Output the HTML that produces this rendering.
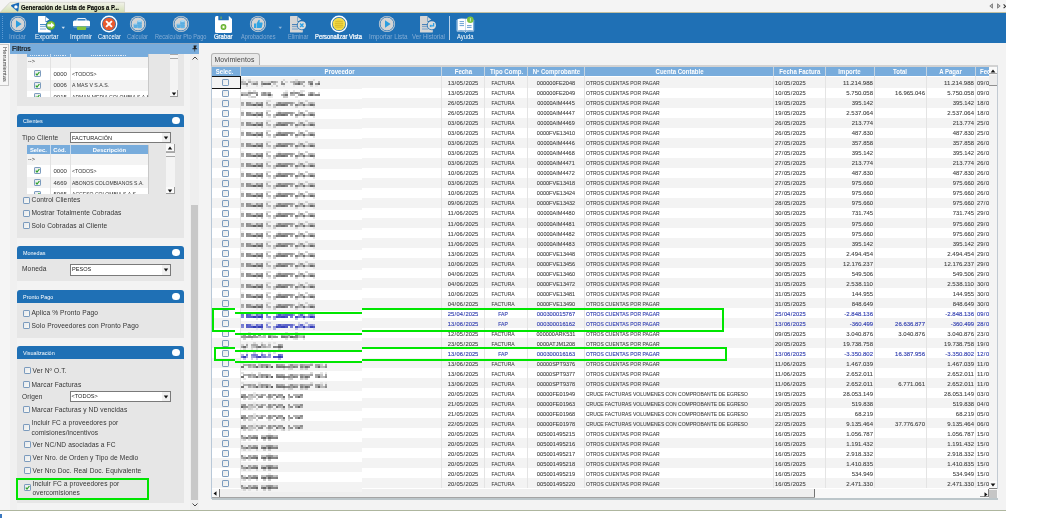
<!DOCTYPE html><html><head><meta charset="utf-8"><style>
*{margin:0;padding:0;box-sizing:border-box}
html,body{width:1038px;height:518px;overflow:hidden;background:#fff;font-family:"Liberation Sans",sans-serif;-webkit-font-smoothing:antialiased}
.ab{position:absolute}
.t{position:absolute;white-space:nowrap;line-height:1}
</style></head><body>
<div class="ab" style="left:0;top:0;width:1006px;height:511px;background:#f3f3f3;overflow:hidden;will-change:transform">

<div class="ab" style="left:0;top:0;width:1006px;height:12px;background:#f4f4f4"></div>
<svg class="ab" style="left:0;top:0" width="130" height="13"><defs><linearGradient id="tg" x1="0" y1="0" x2="0" y2="1"><stop offset="0" stop-color="#f2f2ea"/><stop offset="1" stop-color="#d3e0b4"/></linearGradient></defs><path d="M0 12.5 L10 2.3 L124.5 2.3 L124.5 12.5 Z" fill="url(#tg)" stroke="#c8c8c0" stroke-width="0.6"/><path d="M11.2 6.2 Q10.6 5.2 11.8 4.8 L18.2 2.8 Q19.4 2.5 19.2 3.8 L18.4 10.6 Q18.2 12 17.2 11.2 Z" fill="#1a6ab8"/><path d="M11.2 6.2 L14 8.6 L17.2 11.2 Z" fill="#0e4f94" opacity="0.6"/><circle cx="15.9" cy="6.9" r="1.7" fill="#fff"/></svg>
<div class="t" style="left:21px;top:4px;font-size:7px;font-weight:bold;color:#000;-webkit-text-stroke:0.15px #000;transform:scaleX(0.835);transform-origin:0 0">Generación de Lista de Pagos a P...</div>
<svg class="ab" style="left:988px;top:2px" width="18" height="8"><path d="M4.5 1.8 L1.8 4 L4.5 6.2 Z" fill="#bbb" stroke="#666" stroke-width="0.7"/><path d="M9.5 1.8 L12.2 4 L9.5 6.2 Z" fill="#bbb" stroke="#666" stroke-width="0.7"/><path d="M15.6 2.4 L17.6 4.3 L15.6 6.2" fill="none" stroke="#333" stroke-width="1.1"/></svg>
<div class="ab" style="left:0;top:12px;width:1006px;height:1px;background:#c2c0a2"></div>
<div class="ab" style="left:0;top:13px;width:1006px;height:29.5px;background:#1f70b5"></div>
<div class="ab" style="left:1.6px;top:15.50px;width:1.2px;height:1px;background:#5d9bd3"></div>
<div class="ab" style="left:1.6px;top:17.55px;width:1.2px;height:1px;background:#5d9bd3"></div>
<div class="ab" style="left:1.6px;top:19.60px;width:1.2px;height:1px;background:#5d9bd3"></div>
<div class="ab" style="left:1.6px;top:21.65px;width:1.2px;height:1px;background:#5d9bd3"></div>
<div class="ab" style="left:1.6px;top:23.70px;width:1.2px;height:1px;background:#5d9bd3"></div>
<div class="ab" style="left:1.6px;top:25.75px;width:1.2px;height:1px;background:#5d9bd3"></div>
<div class="ab" style="left:1.6px;top:27.80px;width:1.2px;height:1px;background:#5d9bd3"></div>
<div class="ab" style="left:1.6px;top:29.85px;width:1.2px;height:1px;background:#5d9bd3"></div>
<div class="ab" style="left:1.6px;top:31.90px;width:1.2px;height:1px;background:#5d9bd3"></div>
<div class="ab" style="left:1.6px;top:33.95px;width:1.2px;height:1px;background:#5d9bd3"></div>
<div class="ab" style="left:1.6px;top:36.00px;width:1.2px;height:1px;background:#5d9bd3"></div>
<div class="ab" style="left:1.6px;top:38.05px;width:1.2px;height:1px;background:#5d9bd3"></div>
<svg class="ab" style="left:9px;top:15.3px" width="18" height="18"><circle cx="9" cy="9" r="8.1" fill="#d6d6d6"/><circle cx="9" cy="9" r="6.9" fill="none" stroke="#1f70b5" stroke-width="0.8"/><circle cx="9" cy="9" r="6.1" fill="#d4d4d4"/><path d="M7 5.2 L12.6 9 L7 12.8 Z" fill="#2a9ee0"/></svg>
<div class="t" style="left:9px;top:34.4px;font-size:6.4px;font-weight:normal;color:#84acd4;transform:scaleX(0.996);transform-origin:0 0">Iniciar</div>
<svg class="ab" style="left:37px;top:14.8px" width="22" height="19"><path d="M1.6 1 H8.5 V7 H13.8 V16.9 Q13.8 17.5 13.2 17.5 H1.6 Q1 17.5 1 16.9 V1.6 Q1 1 1.6 1 Z" fill="#fff"/><path d="M8.9 2 L12.3 4.6 L8.9 6.4 Z" fill="#fff"/><rect x="3" y="9.2" width="6" height="0.9" fill="#1f70b5"/><rect x="3" y="11.2" width="6" height="0.9" fill="#6a9fd2"/><rect x="3" y="13.2" width="6" height="1.6" fill="#a8c8e8"/><circle cx="13.8" cy="10.3" r="5.1" fill="#1f70b5"/><circle cx="13.8" cy="10.3" r="4.4" fill="#5fae2e"/><circle cx="13.8" cy="10.1" r="3.5" fill="#86c440"/><path d="M10.4 9.2 H14 V7.6 L17.4 10.3 L14 13 V11.4 H10.4 Z" fill="#fff"/></svg>
<svg class="ab" style="left:61px;top:26px" width="5" height="4"><path d="M0.5 0.8 L4 0.8 L2.25 3 Z" fill="#cfe0f0"/></svg>
<div class="t" style="left:34.5px;top:34.4px;font-size:6.4px;font-weight:normal;color:#fff;transform:scaleX(0.972);transform-origin:0 0">Exportar</div>
<svg class="ab" style="left:72px;top:16px" width="20" height="16"><rect x="5" y="2.6" width="9" height="3" rx="1" fill="none" stroke="#fff" stroke-width="1"/><rect x="1" y="4.6" width="17" height="7" rx="1.5" fill="#fff"/><rect x="0.6" y="10.3" width="17.8" height="1.2" fill="#1f70b5"/><rect x="4.9" y="10.4" width="9.2" height="3.6" rx="0.9" fill="#84c341"/></svg>
<div class="t" style="left:70px;top:34.4px;font-size:6.4px;font-weight:normal;color:#fff;transform:scaleX(0.952);transform-origin:0 0">Imprimir</div>
<svg class="ab" style="left:100.3px;top:15.3px" width="18" height="18"><circle cx="9" cy="9" r="8.4" fill="#fff"/><circle cx="9" cy="9" r="7" fill="#1f70b5"/><circle cx="9" cy="9" r="6.3" fill="#e95a2e"/><path d="M6.1 6.1 L11.9 11.9 M11.9 6.1 L6.1 11.9" stroke="#fff" stroke-width="1.9"/></svg>
<div class="t" style="left:98px;top:34.4px;font-size:6.4px;font-weight:normal;color:#fff;transform:scaleX(0.898);transform-origin:0 0">Cancelar</div>
<svg class="ab" style="left:129.2px;top:15.3px" width="18" height="18"><circle cx="9" cy="9" r="8.1" fill="#d6d6d6"/><circle cx="9" cy="9" r="6.9" fill="none" stroke="#1f70b5" stroke-width="0.8"/><circle cx="9" cy="9" r="6.1" fill="#d4d4d4"/><path d="M4.6 9 v3.6 q1.9 1 3.8 0 v-3.6 z" fill="#5aaee2"/><ellipse cx="6.5" cy="9" rx="1.9" ry="0.8" fill="#9fd0f0"/><path d="M8.2 6 v6.8 q2.3 1.1 4.6 0 v-6.8 z" fill="#62b4e6"/><ellipse cx="10.5" cy="6" rx="2.3" ry="0.9" fill="#a8d6f2"/><path d="M8.2 8.4 q2.3 1 4.6 0 M8.2 10.6 q2.3 1 4.6 0" stroke="#4a9ad0" stroke-width="0.4" fill="none"/></svg>
<div class="t" style="left:127px;top:34.4px;font-size:6.4px;font-weight:normal;color:#84acd4;transform:scaleX(0.895);transform-origin:0 0">Calcular</div>
<svg class="ab" style="left:171.7px;top:15.3px" width="18" height="18"><circle cx="9" cy="9" r="8.1" fill="#d6d6d6"/><circle cx="9" cy="9" r="6.9" fill="none" stroke="#1f70b5" stroke-width="0.8"/><circle cx="9" cy="9" r="6.1" fill="#d4d4d4"/><path d="M4.6 9 v3.6 q1.9 1 3.8 0 v-3.6 z" fill="#5aaee2"/><ellipse cx="6.5" cy="9" rx="1.9" ry="0.8" fill="#9fd0f0"/><path d="M8.2 6 v6.8 q2.3 1.1 4.6 0 v-6.8 z" fill="#62b4e6"/><ellipse cx="10.5" cy="6" rx="2.3" ry="0.9" fill="#a8d6f2"/><path d="M8.2 8.4 q2.3 1 4.6 0 M8.2 10.6 q2.3 1 4.6 0" stroke="#4a9ad0" stroke-width="0.4" fill="none"/></svg>
<div class="t" style="left:154.5px;top:34.4px;font-size:6.4px;font-weight:normal;color:#84acd4;transform:scaleX(0.883);transform-origin:0 0">Recalcular Pto Pago</div>
<svg class="ab" style="left:214px;top:14.5px" width="19" height="19"><path d="M2.5 1 H15 L18 4 V16.5 Q18 18 16.5 18 H2.5 Q1 18 1 16.5 V2.5 Q1 1 2.5 1 Z" fill="#fff"/><rect x="4.3" y="0.5" width="10.5" height="4.8" rx="0.6" fill="#1f70b5"/><rect x="6.6" y="1.5" width="0.9" height="2.6" fill="#8cc63f"/><circle cx="9.5" cy="12" r="2.9" fill="#5fae36"/><circle cx="9.5" cy="12" r="1.9" fill="#9ad05a"/><circle cx="9.5" cy="12" r="1" fill="#fff"/></svg>
<div class="t" style="left:213.5px;top:34.4px;font-size:6.4px;color:#fff;-webkit-text-stroke:0.22px #fff;transform:scaleX(0.929);transform-origin:0 0">Grabar</div>
<svg class="ab" style="left:248.5px;top:15.3px" width="18" height="18"><circle cx="9" cy="9" r="8.1" fill="#d6d6d6"/><circle cx="9" cy="9" r="6.9" fill="none" stroke="#1f70b5" stroke-width="0.8"/><circle cx="9" cy="9" r="6.1" fill="#d4d4d4"/><path d="M5 8.5 h2 v4.5 h-2 z M7.6 8.5 L9.6 5 Q10.6 4.2 10.8 5.6 L10.4 7.6 h2.4 q1 0 0.8 1 l-0.8 3.6 q-0.2 0.8 -1 0.8 h-4.2 z" fill="#2fa4e4"/></svg>
<div class="t" style="left:240.5px;top:34.4px;font-size:6.4px;font-weight:normal;color:#84acd4;transform:scaleX(0.882);transform-origin:0 0">Aprobaciones</div>
<svg class="ab" style="left:278px;top:26px" width="5" height="4"><path d="M0.5 0.8 L4 0.8 L2.25 3 Z" fill="#8db4d8"/></svg>
<svg class="ab" style="left:289px;top:14.8px" width="22" height="19"><path d="M1.6 1 H8.5 V7 H13.8 V16.9 Q13.8 17.5 13.2 17.5 H1.6 Q1 17.5 1 16.9 V1.6 Q1 1 1.6 1 Z" fill="#d6d6d6"/><path d="M8.9 2 L12.3 4.6 L8.9 6.4 Z" fill="#d6d6d6"/><rect x="3" y="9.2" width="6" height="0.9" fill="#2a6eb0"/><rect x="3" y="11.2" width="6" height="0.9" fill="#6a98c8"/><rect x="3" y="13.2" width="6" height="1.6" fill="#9ab6d2"/><circle cx="12.8" cy="10.3" r="4.9" fill="#1f70b5"/><circle cx="12.8" cy="10.3" r="4.1" fill="#dcdcdc"/><path d="M11.1 8.6 L14.5 12 M14.5 8.6 L11.1 12" stroke="#2aa0e6" stroke-width="1.4"/></svg>
<div class="t" style="left:287.5px;top:34.4px;font-size:6.4px;font-weight:normal;color:#84acd4;transform:scaleX(0.887);transform-origin:0 0">Eliminar</div>
<svg class="ab" style="left:330px;top:15.3px" width="18" height="18"><circle cx="9" cy="9" r="8.4" fill="#fff"/><circle cx="9" cy="9" r="7" fill="#1f70b5"/><circle cx="9" cy="9" r="6.3" fill="#f4dc4a"/><path d="M6 5.5 v7 M8 4.8 v8.4 M10 4.8 v8.4 M12 5.5 v7 M5.5 6.5 h7 M4.8 8.5 h8.4 M4.8 10.5 h8.4 M5.5 12.2 h7" stroke="#c9a91e" stroke-width="0.45"/></svg>
<div class="t" style="left:315px;top:34.4px;font-size:6.4px;color:#fff;-webkit-text-stroke:0.22px #fff;transform:scaleX(0.913);transform-origin:0 0">Personalizar Vista</div>
<svg class="ab" style="left:378.3px;top:15.3px" width="18" height="18"><circle cx="9" cy="9" r="8.1" fill="#d6d6d6"/><circle cx="9" cy="9" r="6.9" fill="none" stroke="#1f70b5" stroke-width="0.8"/><circle cx="9" cy="9" r="6.1" fill="#d4d4d4"/><path d="M7 5.2 L12.6 9 L7 12.8 Z" fill="#2a9ee0"/></svg>
<div class="t" style="left:368.5px;top:34.4px;font-size:6.4px;font-weight:normal;color:#84acd4;transform:scaleX(0.984);transform-origin:0 0">Importar Lista</div>
<svg class="ab" style="left:419px;top:14.8px" width="22" height="19"><path d="M1.6 1 H8.5 V7 H13.8 V16.9 Q13.8 17.5 13.2 17.5 H1.6 Q1 17.5 1 16.9 V1.6 Q1 1 1.6 1 Z" fill="#d6d6d6"/><path d="M8.9 2 L12.3 4.6 L8.9 6.4 Z" fill="#d6d6d6"/><rect x="3" y="9.2" width="6" height="0.9" fill="#2a6eb0"/><rect x="3" y="11.2" width="6" height="0.9" fill="#6a98c8"/><rect x="3" y="13.2" width="6" height="1.6" fill="#9ab6d2"/><circle cx="12.8" cy="10.3" r="4.9" fill="#1f70b5"/><circle cx="12.8" cy="10.3" r="4.1" fill="#dcdcdc"/><path d="M14.6 8 V10.9 H11.2" fill="none" stroke="#2aa0e6" stroke-width="1.3"/><path d="M12.2 9.3 L10.4 10.9 L12.2 12.5 Z" fill="#2aa0e6"/></svg>
<div class="t" style="left:412px;top:34.4px;font-size:6.4px;font-weight:normal;color:#84acd4;transform:scaleX(0.957);transform-origin:0 0">Ver Historial</div>
<div class="ab" style="left:449px;top:16px;width:1px;height:24px;background:#b8d2ea"></div>
<svg class="ab" style="left:456px;top:15.5px" width="20" height="18"><path d="M1.5 3.2 Q4.5 1.8 9.5 2.8 V14.6 Q4.5 13.6 1.5 14.6 Z" fill="#fff"/><path d="M9.5 2.8 Q14 1.8 17.2 3.2 V14.6 Q14 13.6 9.5 14.6 Z" fill="#fff"/><path d="M0.8 14.6 H8.4 L9.5 15.9 L10.6 14.6 H17.8 V15.6 H10.9 L9.5 16.9 L8.1 15.6 H0.8 Z" fill="#dbe8f5"/><path d="M0.8 4 V14.6 M17.8 4 V14.6" stroke="#c8dcf0" stroke-width="0.6"/><path d="M3.6 5.6 h4.4 M3.6 7.6 h4.4 M3.6 9.6 h4.4 M11 9.6 h4.6 M11 11.4 h4.6" stroke="#2a78c0" stroke-width="0.7"/><circle cx="14.3" cy="3.8" r="3.3" fill="#7cc242"/><rect x="13.9" y="2.1" width="0.8" height="3.4" fill="#e6f5d8"/></svg>
<div class="t" style="left:456.5px;top:34.4px;font-size:6.4px;font-weight:normal;color:#fff;transform:scaleX(0.915);transform-origin:0 0">Ayuda</div>
<div class="ab" style="left:0;top:43.5px;width:9px;height:42px;background:#f7f7f7;border:1px solid #c8c8c8;border-left:none"></div>
<div class="t" style="left:6.6px;top:47.3px;transform-origin:0 0;transform:rotate(90deg);font-size:5.9px;letter-spacing:-0.05px;color:#3a3a3a">Herramientas</div>
<div class="ab" style="left:10px;top:42.5px;width:188.5px;height:11px;background:#78acdc;border-top:0.8px solid #8fa9c4"></div>
<div class="t" style="left:12px;top:45.6px;font-size:6.9px;color:#111;-webkit-text-stroke:0.2px #111">Filtros</div>
<svg class="ab" style="left:192px;top:45px" width="6" height="7"><path d="M1.6 0.6 h3 v0.9 h-0.8 v1.8 h1.3 v0.9 h-2 v2.4 h-0.6 v-2.4 h-2 v-0.9 h1.3 v-1.8 h-0.2 z" fill="#1a1a1a"/></svg>
<svg width="0" height="0" style="position:absolute"><defs><linearGradient id="cg" x1="0" y1="0" x2="1" y2="1"><stop offset="0" stop-color="#e4e8ee"/><stop offset="1" stop-color="#fbfaf4"/></linearGradient></defs></svg>
<div class="ab" style="left:10px;top:53.5px;width:189px;height:457px;background:#f3f3f3"></div>
<div class="ab" style="left:10px;top:53.5px;width:6.5px;height:457px;background:#f0f0f0"></div>
<div class="ab" style="left:0;top:86px;width:10px;height:424px;background:#f5f5f5"></div>
<div class="ab" style="left:189.5px;top:53.5px;width:9px;height:457px;background:#eeeeee"></div>
<div class="ab" style="left:190.5px;top:205px;width:7.5px;height:295px;background:#c8c8c8"></div>
<svg class="ab" style="left:191px;top:55px" width="8" height="6"><path d="M1.5 4.5 L4 2 L6.5 4.5" fill="none" stroke="#333" stroke-width="0.9"/></svg>
<svg class="ab" style="left:191px;top:502px" width="8" height="6"><path d="M1.5 1.5 L4 4 L6.5 1.5" fill="none" stroke="#333" stroke-width="0.9"/></svg>
<div class="ab" style="left:16.5px;top:53.5px;width:167px;height:52.5px;background:#e6e6e6;"></div>
<div class="ab" style="left:27px;top:53.5px;width:122px;height:43.5px;background:#fff;"></div>
<div class="ab" style="left:27px;top:53.5px;width:122px;height:3px;background:#78acdc;"></div>
<div class="ab" style="left:49.8px;top:53.5px;width:0.8px;height:3.5px;background:#c8dcf0;"></div>
<div class="ab" style="left:70px;top:53.5px;width:0.8px;height:3.5px;background:#c8dcf0;"></div>
<div class="ab" style="left:30px;top:54.6px;width:1.2px;height:1.1px;background:#dfeaf6;"></div>
<div class="ab" style="left:32.1px;top:54.6px;width:1.2px;height:1.1px;background:#dfeaf6;"></div>
<div class="ab" style="left:34.2px;top:54.6px;width:1.2px;height:1.1px;background:#dfeaf6;"></div>
<div class="ab" style="left:36.300000000000004px;top:54.6px;width:1.2px;height:1.1px;background:#dfeaf6;"></div>
<div class="ab" style="left:38.400000000000006px;top:54.6px;width:1.2px;height:1.1px;background:#dfeaf6;"></div>
<div class="ab" style="left:40.50000000000001px;top:54.6px;width:1.2px;height:1.1px;background:#dfeaf6;"></div>
<div class="ab" style="left:42.60000000000001px;top:54.6px;width:1.2px;height:1.1px;background:#dfeaf6;"></div>
<div class="ab" style="left:44.70000000000001px;top:54.6px;width:1.2px;height:1.1px;background:#dfeaf6;"></div>
<div class="ab" style="left:46.80000000000001px;top:54.6px;width:1.2px;height:1.1px;background:#dfeaf6;"></div>
<div class="ab" style="left:54px;top:54.6px;width:1.2px;height:1.1px;background:#dfeaf6;"></div>
<div class="ab" style="left:56.1px;top:54.6px;width:1.2px;height:1.1px;background:#dfeaf6;"></div>
<div class="ab" style="left:58.2px;top:54.6px;width:1.2px;height:1.1px;background:#dfeaf6;"></div>
<div class="ab" style="left:60.300000000000004px;top:54.6px;width:1.2px;height:1.1px;background:#dfeaf6;"></div>
<div class="ab" style="left:62.400000000000006px;top:54.6px;width:1.2px;height:1.1px;background:#dfeaf6;"></div>
<div class="ab" style="left:64.5px;top:54.6px;width:1.2px;height:1.1px;background:#dfeaf6;"></div>
<div class="ab" style="left:91px;top:54.6px;width:1.2px;height:1.1px;background:#dfeaf6;"></div>
<div class="ab" style="left:93.1px;top:54.6px;width:1.2px;height:1.1px;background:#dfeaf6;"></div>
<div class="ab" style="left:95.19999999999999px;top:54.6px;width:1.2px;height:1.1px;background:#dfeaf6;"></div>
<div class="ab" style="left:97.29999999999998px;top:54.6px;width:1.2px;height:1.1px;background:#dfeaf6;"></div>
<div class="ab" style="left:99.39999999999998px;top:54.6px;width:1.2px;height:1.1px;background:#dfeaf6;"></div>
<div class="ab" style="left:101.49999999999997px;top:54.6px;width:1.2px;height:1.1px;background:#dfeaf6;"></div>
<div class="ab" style="left:103.59999999999997px;top:54.6px;width:1.2px;height:1.1px;background:#dfeaf6;"></div>
<div class="ab" style="left:105.69999999999996px;top:54.6px;width:1.2px;height:1.1px;background:#dfeaf6;"></div>
<div class="ab" style="left:107.79999999999995px;top:54.6px;width:1.2px;height:1.1px;background:#dfeaf6;"></div>
<div class="ab" style="left:109.89999999999995px;top:54.6px;width:1.2px;height:1.1px;background:#dfeaf6;"></div>
<div class="ab" style="left:111.99999999999994px;top:54.6px;width:1.2px;height:1.1px;background:#dfeaf6;"></div>
<div class="ab" style="left:114.09999999999994px;top:54.6px;width:1.2px;height:1.1px;background:#dfeaf6;"></div>
<div class="ab" style="left:116.19999999999993px;top:54.6px;width:1.2px;height:1.1px;background:#dfeaf6;"></div>
<div class="ab" style="left:118.29999999999993px;top:54.6px;width:1.2px;height:1.1px;background:#dfeaf6;"></div>
<div class="ab" style="left:120.39999999999992px;top:54.6px;width:1.2px;height:1.1px;background:#dfeaf6;"></div>
<div class="ab" style="left:122.49999999999991px;top:54.6px;width:1.2px;height:1.1px;background:#dfeaf6;"></div>
<div class="ab" style="left:124.59999999999991px;top:54.6px;width:1.2px;height:1.1px;background:#dfeaf6;"></div>
<div class="ab" style="left:27px;top:56.5px;width:121px;height:11.5px;background:#f3f3f3;"></div>
<div class="ab" style="left:27px;top:68px;width:121px;height:12px;background:#fff;"></div>
<div class="ab" style="left:27px;top:80px;width:121px;height:11px;background:#f3f3f3;"></div>
<div class="ab" style="left:27px;top:91px;width:121px;height:6px;background:#fff;"></div>
<div class="ab" style="left:49.8px;top:56.5px;width:0.6px;height:40.5px;background:#e2e2e2;"></div>
<div class="ab" style="left:70px;top:56.5px;width:0.6px;height:40.5px;background:#e2e2e2;"></div>
<div class="ab" style="left:148px;top:53.5px;width:1px;height:43.5px;background:#c8c8c8;"></div>
<div class="ab" style="left:27px;top:53.5px;width:121px;height:43.5px;overflow:hidden">
<div class="t" style="left:1px;top:5.6px;font-size:5.6px;color:#333">--&gt;</div>
</div>
<svg class="ab" style="left:34.3px;top:70px" width="7" height="7"><rect x="0.5" y="0.5" width="6" height="6" rx="0.6" fill="url(#cg)" stroke="#7496bb" stroke-width="0.95"/><path d="M1.8 3.6 L3 5 L5.4 2" fill="none" stroke="#2aa02a" stroke-width="1.2"/></svg>
<div class="t" style="left:53.5px;top:70.6px;font-size:6px;color:#333;transform:scaleX(1.000);transform-origin:0 0">0000</div>
<div class="t" style="left:72px;top:70.6px;font-size:6px;color:#333;transform:scaleX(0.872);transform-origin:0 0">&lt;TODOS&gt;</div>
<svg class="ab" style="left:34.3px;top:81.5px" width="7" height="7"><rect x="0.5" y="0.5" width="6" height="6" rx="0.6" fill="url(#cg)" stroke="#7496bb" stroke-width="0.95"/><path d="M1.8 3.6 L3 5 L5.4 2" fill="none" stroke="#2aa02a" stroke-width="1.2"/></svg>
<div class="t" style="left:53.5px;top:82.1px;font-size:6px;color:#333;transform:scaleX(1.000);transform-origin:0 0">0006</div>
<div class="t" style="left:72px;top:82.1px;font-size:6px;color:#333;transform:scaleX(0.869);transform-origin:0 0">A MAS V S.A.S.</div>
<div class="ab" style="left:27px;top:91px;width:121px;height:6px;overflow:hidden">
<svg class="ab" style="left:7.3px;top:2.2px" width="7" height="7"><rect x="0.5" y="0.5" width="6" height="6" rx="0.6" fill="url(#cg)" stroke="#7496bb" stroke-width="0.95"/><path d="M1.8 3.6 L3 5 L5.4 2" fill="none" stroke="#2aa02a" stroke-width="1.2"/></svg>
<div class="t" style="left:26.5px;top:3.0px;font-size:6px;color:#333;transform:scaleX(1.000);transform-origin:0 0">0015</div>
<div class="t" style="left:45px;top:3.0px;font-size:6px;color:#333;transform:scaleX(0.847);transform-origin:0 0">ADMAN MEDIA COLOMBIA S.A.S.</div>
</div>
<div class="ab" style="left:170px;top:53.5px;width:8px;height:43.3px;background:#f4f4f4;"></div>
<div class="ab" style="left:170px;top:54px;width:8px;height:1px;background:#a8a8a8;"></div>
<div class="ab" style="left:170px;top:57.5px;width:8px;height:1px;background:#a8a8a8;"></div>
<div class="ab" style="left:170px;top:89.5px;width:8px;height:7.3px;background:#fafafa;border-right:1px solid #9a9a9a;border-bottom:1px solid #9a9a9a"></div>
<svg class="ab" style="left:171px;top:91.5px" width="6" height="4"><path d="M0.8 0.5 L5.2 0.5 L3 3.5 Z" fill="#111"/></svg>
<div class="ab" style="left:16.5px;top:114px;width:167px;height:13px;background:#1f70b5;border-radius:3px 3px 0 0"></div>
<div class="t" style="left:23px;top:117.9px;font-size:6.2px;color:#fff;font-weight:normal;transform:scaleX(0.88);transform-origin:0 0">Clientes</div>
<div class="ab" style="left:172px;top:116.7px;width:7.6px;height:7.6px;border-radius:50%;background:#fff"></div>
<div class="ab" style="left:16.5px;top:127px;width:167px;height:111px;background:#e6e6e6;"></div>
<div class="t" style="left:22px;top:134.5px;font-size:6.6px;color:#333;font-weight:normal;letter-spacing:0.12px">Tipo Cliente</div>
<div class="ab" style="left:70px;top:132.3px;width:100.5px;height:11.2px;background:#fff;border:1px solid #7a7a7a"></div>
<div class="t" style="left:72px;top:135.5px;font-size:5.6px;color:#222;font-weight:normal;">FACTURACIÓN</div>
<div class="ab" style="left:161.5px;top:133.3px;width:8px;height:9.2px;background:#f0f0f0"></div>
<svg class="ab" style="left:162.5px;top:135.9px" width="6" height="4"><path d="M0.8 0.5 L5.2 0.5 L3 3.5 Z" fill="#111"/></svg>
<div class="ab" style="left:27px;top:145px;width:122px;height:49px;background:#fff;"></div>
<div class="ab" style="left:27px;top:145px;width:122px;height:8.6px;background:#78acdc;"></div>
<div class="ab" style="left:49.8px;top:145px;width:0.8px;height:8.6px;background:#c8dcf0;"></div>
<div class="ab" style="left:69.8px;top:145px;width:0.8px;height:8.6px;background:#c8dcf0;"></div>
<div class="t" style="left:18.4px;width:40px;text-align:center;top:147.6px;font-size:5.8px;color:#fff;font-weight:bold">Selec.</div>
<div class="t" style="left:39.8px;width:40px;text-align:center;top:147.6px;font-size:5.8px;color:#fff;font-weight:bold">Cód.</div>
<div class="t" style="left:69.4px;width:80px;text-align:center;top:147.6px;font-size:5.8px;color:#fff;font-weight:bold">Descripción</div>
<div class="ab" style="left:27px;top:153.6px;width:121px;height:11.400000000000006px;background:#f3f3f3;"></div>
<div class="ab" style="left:27px;top:165px;width:121px;height:12px;background:#fff;"></div>
<div class="ab" style="left:27px;top:177px;width:121px;height:11.400000000000006px;background:#f3f3f3;"></div>
<div class="ab" style="left:27px;top:188.4px;width:121px;height:5.599999999999994px;background:#fff;"></div>
<div class="ab" style="left:49.8px;top:153.6px;width:0.6px;height:40.4px;background:#e2e2e2;"></div>
<div class="ab" style="left:69.8px;top:153.6px;width:0.6px;height:40.4px;background:#e2e2e2;"></div>
<div class="ab" style="left:148px;top:145px;width:1px;height:49px;background:#c8c8c8;"></div>
<div class="t" style="left:28px;top:156.5px;font-size:5.6px;color:#333;font-weight:normal;">--&gt;</div>
<svg class="ab" style="left:34.3px;top:167.3px" width="7" height="7"><rect x="0.5" y="0.5" width="6" height="6" rx="0.6" fill="url(#cg)" stroke="#7496bb" stroke-width="0.95"/><path d="M1.8 3.6 L3 5 L5.4 2" fill="none" stroke="#2aa02a" stroke-width="1.2"/></svg>
<div class="t" style="left:53.5px;top:167.9px;font-size:6px;color:#333;transform:scaleX(1.000);transform-origin:0 0">0000</div>
<div class="t" style="left:72px;top:167.9px;font-size:6px;color:#333;transform:scaleX(0.872);transform-origin:0 0">&lt;TODOS&gt;</div>
<svg class="ab" style="left:34.3px;top:179px" width="7" height="7"><rect x="0.5" y="0.5" width="6" height="6" rx="0.6" fill="url(#cg)" stroke="#7496bb" stroke-width="0.95"/><path d="M1.8 3.6 L3 5 L5.4 2" fill="none" stroke="#2aa02a" stroke-width="1.2"/></svg>
<div class="t" style="left:53.5px;top:179.6px;font-size:6px;color:#333;transform:scaleX(1.000);transform-origin:0 0">4669</div>
<div class="t" style="left:72px;top:179.6px;font-size:6px;color:#333;transform:scaleX(0.843);transform-origin:0 0">ABONOS COLOMBIANOS S.A.</div>
<div class="ab" style="left:27px;top:188.4px;width:121px;height:5.6px;overflow:hidden">
<svg class="ab" style="left:7.3px;top:2.2px" width="7" height="7"><rect x="0.5" y="0.5" width="6" height="6" rx="0.6" fill="url(#cg)" stroke="#7496bb" stroke-width="0.95"/><path d="M1.8 3.6 L3 5 L5.4 2" fill="none" stroke="#2aa02a" stroke-width="1.2"/></svg>
<div class="t" style="left:26.5px;top:3.0px;font-size:6px;color:#333;transform:scaleX(1.000);transform-origin:0 0">5065</div>
<div class="t" style="left:45px;top:3.0px;font-size:6px;color:#333;transform:scaleX(0.848);transform-origin:0 0">ACCESO COLOMBIA S.A.S.</div>
</div>
<div class="ab" style="left:166px;top:144.2px;width:8.5px;height:50px;background:#f4f4f4;"></div>
<div class="ab" style="left:166px;top:144.2px;width:8.5px;height:7.5px;background:#fafafa;border-right:1px solid #9a9a9a;border-bottom:1px solid #b0b0b0"></div>
<svg class="ab" style="left:167.2px;top:146.2px" width="6" height="4"><path d="M0.8 3.5 L5.2 3.5 L3 0.5 Z" fill="#111"/></svg>
<div class="ab" style="left:166px;top:186.7px;width:8.5px;height:7.5px;background:#fafafa;border-right:1px solid #9a9a9a;border-bottom:1px solid #9a9a9a"></div>
<svg class="ab" style="left:167.2px;top:188.7px" width="6" height="4"><path d="M0.8 0.5 L5.2 0.5 L3 3.5 Z" fill="#111"/></svg>
<div class="ab" style="left:166px;top:152px;width:8.5px;height:1px;background:#a8a8a8;"></div>
<div class="ab" style="left:166px;top:156px;width:8.5px;height:1px;background:#a8a8a8;"></div>
<svg class="ab" style="left:23px;top:196.5px" width="7" height="7"><rect x="0.5" y="0.5" width="6" height="6" rx="0.6" fill="url(#cg)" stroke="#7496bb" stroke-width="0.95"/></svg>
<div class="t" style="left:31.5px;top:197.3px;font-size:6.6px;color:#333;font-weight:normal;letter-spacing:0.12px">Control Clientes</div>
<svg class="ab" style="left:23px;top:209.5px" width="7" height="7"><rect x="0.5" y="0.5" width="6" height="6" rx="0.6" fill="url(#cg)" stroke="#7496bb" stroke-width="0.95"/></svg>
<div class="t" style="left:31.5px;top:210.3px;font-size:6.6px;color:#333;font-weight:normal;letter-spacing:0.12px">Mostrar Totalmente Cobradas</div>
<svg class="ab" style="left:23px;top:222px" width="7" height="7"><rect x="0.5" y="0.5" width="6" height="6" rx="0.6" fill="url(#cg)" stroke="#7496bb" stroke-width="0.95"/></svg>
<div class="t" style="left:31.5px;top:222.8px;font-size:6.6px;color:#333;font-weight:normal;letter-spacing:0.12px">Solo Cobradas al Cliente</div>
<div class="ab" style="left:16.5px;top:246px;width:167px;height:13px;background:#1f70b5;border-radius:3px 3px 0 0"></div>
<div class="t" style="left:23px;top:249.9px;font-size:6.2px;color:#fff;font-weight:normal;transform:scaleX(0.88);transform-origin:0 0">Monedas</div>
<div class="ab" style="left:172px;top:248.7px;width:7.6px;height:7.6px;border-radius:50%;background:#fff"></div>
<div class="ab" style="left:16.5px;top:259px;width:167px;height:22.4px;background:#e6e6e6;"></div>
<div class="t" style="left:22px;top:266.3px;font-size:6.6px;color:#333;font-weight:normal;letter-spacing:0.12px">Moneda</div>
<div class="ab" style="left:70px;top:263.8px;width:101px;height:11.9px;background:#fff;border:1px solid #7a7a7a"></div>
<div class="t" style="left:72px;top:267.0px;font-size:5.6px;color:#222;font-weight:normal;">PESOS</div>
<div class="ab" style="left:162px;top:264.8px;width:8px;height:9.9px;background:#f0f0f0"></div>
<svg class="ab" style="left:163px;top:267.75px" width="6" height="4"><path d="M0.8 0.5 L5.2 0.5 L3 3.5 Z" fill="#111"/></svg>
<div class="ab" style="left:16.5px;top:290px;width:167px;height:13px;background:#1f70b5;border-radius:3px 3px 0 0"></div>
<div class="t" style="left:23px;top:293.9px;font-size:6.2px;color:#fff;font-weight:normal;transform:scaleX(0.88);transform-origin:0 0">Pronto Pago</div>
<div class="ab" style="left:172px;top:292.7px;width:7.6px;height:7.6px;border-radius:50%;background:#fff"></div>
<div class="ab" style="left:16.5px;top:303px;width:167px;height:34.7px;background:#e6e6e6;"></div>
<svg class="ab" style="left:23px;top:309.5px" width="7" height="7"><rect x="0.5" y="0.5" width="6" height="6" rx="0.6" fill="url(#cg)" stroke="#7496bb" stroke-width="0.95"/></svg>
<div class="t" style="left:31.5px;top:310.3px;font-size:6.6px;color:#333;font-weight:normal;letter-spacing:0.12px">Aplica % Pronto Pago</div>
<svg class="ab" style="left:23px;top:322px" width="7" height="7"><rect x="0.5" y="0.5" width="6" height="6" rx="0.6" fill="url(#cg)" stroke="#7496bb" stroke-width="0.95"/></svg>
<div class="t" style="left:31.5px;top:322.8px;font-size:6.6px;color:#333;font-weight:normal;letter-spacing:0.12px">Solo Proveedores con Pronto Pago</div>
<div class="ab" style="left:16.5px;top:346px;width:167px;height:13px;background:#1f70b5;border-radius:3px 3px 0 0"></div>
<div class="t" style="left:23px;top:349.9px;font-size:6.2px;color:#fff;font-weight:normal;transform:scaleX(0.88);transform-origin:0 0">Visualización</div>
<div class="ab" style="left:172px;top:348.7px;width:7.6px;height:7.6px;border-radius:50%;background:#fff"></div>
<div class="ab" style="left:16.5px;top:359px;width:167px;height:144px;background:#e6e6e6;"></div>
<svg class="ab" style="left:24px;top:367px" width="7" height="7"><rect x="0.5" y="0.5" width="6" height="6" rx="0.6" fill="url(#cg)" stroke="#7496bb" stroke-width="0.95"/></svg>
<div class="t" style="left:32.5px;top:367.5px;font-size:6.6px;color:#333;font-weight:normal;letter-spacing:0.12px">Ver Nº O.T.</div>
<svg class="ab" style="left:23px;top:381px" width="7" height="7"><rect x="0.5" y="0.5" width="6" height="6" rx="0.6" fill="url(#cg)" stroke="#7496bb" stroke-width="0.95"/></svg>
<div class="t" style="left:31.5px;top:381.7px;font-size:6.6px;color:#333;font-weight:normal;letter-spacing:0.12px">Marcar Facturas</div>
<div class="t" style="left:22px;top:393.5px;font-size:6.6px;color:#333;font-weight:normal;letter-spacing:0.12px">Origen</div>
<div class="ab" style="left:69.5px;top:391px;width:101.5px;height:11.2px;background:#fff;border:1px solid #7a7a7a"></div>
<div class="t" style="left:71.5px;top:394.2px;font-size:5.6px;color:#222;font-weight:normal;">&lt;TODOS&gt;</div>
<div class="ab" style="left:162.0px;top:392px;width:8px;height:9.2px;background:#f0f0f0"></div>
<svg class="ab" style="left:163.0px;top:394.6px" width="6" height="4"><path d="M0.8 0.5 L5.2 0.5 L3 3.5 Z" fill="#111"/></svg>
<svg class="ab" style="left:23px;top:406px" width="7" height="7"><rect x="0.5" y="0.5" width="6" height="6" rx="0.6" fill="url(#cg)" stroke="#7496bb" stroke-width="0.95"/></svg>
<div class="t" style="left:31.5px;top:406.5px;font-size:6.6px;color:#333;font-weight:normal;letter-spacing:0.12px">Marcar Facturas y ND vencidas</div>
<svg class="ab" style="left:23px;top:423.5px" width="7" height="7"><rect x="0.5" y="0.5" width="6" height="6" rx="0.6" fill="url(#cg)" stroke="#7496bb" stroke-width="0.95"/></svg>
<div class="t" style="left:31.5px;top:420px;font-size:6.6px;color:#333;font-weight:normal;letter-spacing:0.12px">Incluir FC a proveedores por</div>
<div class="t" style="left:31.5px;top:429.5px;font-size:6.6px;color:#333;font-weight:normal;letter-spacing:0.12px">comisiones/incentivos</div>
<svg class="ab" style="left:24px;top:441px" width="7" height="7"><rect x="0.5" y="0.5" width="6" height="6" rx="0.6" fill="url(#cg)" stroke="#7496bb" stroke-width="0.95"/></svg>
<div class="t" style="left:32.5px;top:441.7px;font-size:6.6px;color:#333;font-weight:normal;letter-spacing:0.12px">Ver NC/ND asociadas a FC</div>
<svg class="ab" style="left:24px;top:454.5px" width="7" height="7"><rect x="0.5" y="0.5" width="6" height="6" rx="0.6" fill="url(#cg)" stroke="#7496bb" stroke-width="0.95"/></svg>
<div class="t" style="left:32.5px;top:455px;font-size:6.6px;color:#333;font-weight:normal;letter-spacing:0.12px">Ver Nro. de Orden y Tipo de Medio</div>
<svg class="ab" style="left:24px;top:467px" width="7" height="7"><rect x="0.5" y="0.5" width="6" height="6" rx="0.6" fill="url(#cg)" stroke="#7496bb" stroke-width="0.95"/></svg>
<div class="t" style="left:32.5px;top:467.7px;font-size:6.6px;color:#333;font-weight:normal;letter-spacing:0.12px">Ver Nro Doc. Real Doc. Equivalente</div>
<div class="ab" style="left:15.5px;top:477.5px;width:133.5px;height:22.3px;border:2px solid #00e400"></div>
<svg class="ab" style="left:24px;top:484px" width="7" height="7"><rect x="0.5" y="0.5" width="6" height="6" rx="0.6" fill="url(#cg)" stroke="#7496bb" stroke-width="0.95"/><path d="M1.8 3.6 L3 5 L5.4 2" fill="none" stroke="#2aa02a" stroke-width="1.2"/></svg>
<div class="t" style="left:32.5px;top:480.5px;font-size:6.6px;color:#333;font-weight:normal;letter-spacing:0.12px">Incluir FC a proveedores por</div>
<div class="t" style="left:32.5px;top:489.7px;font-size:6.6px;color:#333;font-weight:normal;letter-spacing:0.12px">overcomisiones</div>
<div class="ab" style="left:211.3px;top:53px;width:48.5px;height:14px;background:#e9e9e9;border:1px solid #b4b4b4;border-bottom:none;border-radius:3px 3px 0 0"></div>
<div class="t" style="left:214.5px;top:57.2px;font-size:6.8px;color:#444;font-weight:normal;letter-spacing:0.17px">Movimientos</div>
<div class="ab" style="left:211.5px;top:66px;width:786.0px;height:433.5px;background:#fff;"></div>
<div class="ab" style="left:211.5px;top:67px;width:777.5px;height:9.4px;background:#78acdc;"></div>
<div class="ab" style="left:240.1px;top:67px;width:0.9px;height:9.4px;background:#c4d4e2;"></div>
<div class="ab" style="left:441.20000000000005px;top:67px;width:0.9px;height:9.4px;background:#c4d4e2;"></div>
<div class="ab" style="left:484.1px;top:67px;width:0.9px;height:9.4px;background:#c4d4e2;"></div>
<div class="ab" style="left:527.3000000000001px;top:67px;width:0.9px;height:9.4px;background:#c4d4e2;"></div>
<div class="ab" style="left:584.2px;top:67px;width:0.9px;height:9.4px;background:#c4d4e2;"></div>
<div class="ab" style="left:773.3000000000001px;top:67px;width:0.9px;height:9.4px;background:#c4d4e2;"></div>
<div class="ab" style="left:825.0px;top:67px;width:0.9px;height:9.4px;background:#c4d4e2;"></div>
<div class="ab" style="left:873.9px;top:67px;width:0.9px;height:9.4px;background:#c4d4e2;"></div>
<div class="ab" style="left:925.9px;top:67px;width:0.9px;height:9.4px;background:#c4d4e2;"></div>
<div class="ab" style="left:974.8000000000001px;top:67px;width:0.9px;height:9.4px;background:#c4d4e2;"></div>
<div class="ab" style="left:211.5px;top:67px;width:777px;height:9.4px;overflow:hidden">
<div class="t" style="left:-16.50px;width:59.00px;text-align:center;top:2px;font-size:6.5px;color:#fff;font-weight:bold;transform:scaleX(0.93)">Selec.</div>
<div class="t" style="left:12.50px;width:231.10px;text-align:center;top:2px;font-size:6.5px;color:#fff;font-weight:bold;transform:scaleX(0.93)">Proveedor</div>
<div class="t" style="left:215.10px;width:72.90px;text-align:center;top:2px;font-size:6.5px;color:#fff;font-weight:bold;transform:scaleX(0.93)">Fecha</div>
<div class="t" style="left:258.00px;width:73.20px;text-align:center;top:2px;font-size:6.5px;color:#fff;font-weight:bold;transform:scaleX(0.93)">Tipo Comp.</div>
<div class="t" style="left:301.20px;width:86.90px;text-align:center;top:2px;font-size:6.5px;color:#fff;font-weight:bold;transform:scaleX(0.93)">Nº Comprobante</div>
<div class="t" style="left:358.10px;width:219.10px;text-align:center;top:2px;font-size:6.5px;color:#fff;font-weight:bold;transform:scaleX(0.93)">Cuenta Contable</div>
<div class="t" style="left:547.20px;width:81.70px;text-align:center;top:2px;font-size:6.5px;color:#fff;font-weight:bold;transform:scaleX(0.93)">Fecha Factura</div>
<div class="t" style="left:598.90px;width:78.90px;text-align:center;top:2px;font-size:6.5px;color:#fff;font-weight:bold;transform:scaleX(0.93)">Importe</div>
<div class="t" style="left:647.80px;width:82.00px;text-align:center;top:2px;font-size:6.5px;color:#fff;font-weight:bold;transform:scaleX(0.93)">Total</div>
<div class="t" style="left:699.80px;width:78.90px;text-align:center;top:2px;font-size:6.5px;color:#fff;font-weight:bold;transform:scaleX(0.93)">A Pagar</div>
<div class="t" style="left:768.90px;top:2px;font-size:6.5px;color:#fff;font-weight:bold;transform:scaleX(0.93);transform-origin:0 0">Fecha</div>
</div>
<div class="ab" style="left:211.5px;top:65.4px;width:786.0px;height:1.4px;background:#d2d2d2;"></div>
<div class="ab" style="left:212.0px;top:76.5px;width:777.0px;height:11.5px;background:#f3f3f3;"></div>
<div class="ab" style="left:212.0px;top:98px;width:777.0px;height:10px;background:#f3f3f3;"></div>
<div class="ab" style="left:212.0px;top:118px;width:777.0px;height:10px;background:#f3f3f3;"></div>
<div class="ab" style="left:212.0px;top:138px;width:777.0px;height:10px;background:#f3f3f3;"></div>
<div class="ab" style="left:212.0px;top:158px;width:777.0px;height:10px;background:#f3f3f3;"></div>
<div class="ab" style="left:212.0px;top:178px;width:777.0px;height:10px;background:#f3f3f3;"></div>
<div class="ab" style="left:212.0px;top:198px;width:777.0px;height:10px;background:#f3f3f3;"></div>
<div class="ab" style="left:212.0px;top:218px;width:777.0px;height:10px;background:#f3f3f3;"></div>
<div class="ab" style="left:212.0px;top:238px;width:777.0px;height:10px;background:#f3f3f3;"></div>
<div class="ab" style="left:212.0px;top:258px;width:777.0px;height:10px;background:#f3f3f3;"></div>
<div class="ab" style="left:212.0px;top:278px;width:777.0px;height:10px;background:#f3f3f3;"></div>
<div class="ab" style="left:212.0px;top:298px;width:777.0px;height:10px;background:#f3f3f3;"></div>
<div class="ab" style="left:212.0px;top:318px;width:777.0px;height:10px;background:#f3f3f3;"></div>
<div class="ab" style="left:212.0px;top:338px;width:777.0px;height:10px;background:#f3f3f3;"></div>
<div class="ab" style="left:212.0px;top:358px;width:777.0px;height:10px;background:#f3f3f3;"></div>
<div class="ab" style="left:212.0px;top:378px;width:777.0px;height:10px;background:#f3f3f3;"></div>
<div class="ab" style="left:212.0px;top:398px;width:777.0px;height:10px;background:#f3f3f3;"></div>
<div class="ab" style="left:212.0px;top:418px;width:777.0px;height:10px;background:#f3f3f3;"></div>
<div class="ab" style="left:212.0px;top:438px;width:777.0px;height:10px;background:#f3f3f3;"></div>
<div class="ab" style="left:212.0px;top:458px;width:777.0px;height:10px;background:#f3f3f3;"></div>
<div class="ab" style="left:212.0px;top:478px;width:777.0px;height:10px;background:#f3f3f3;"></div>
<div class="ab" style="left:240.2px;top:76.4px;width:0.7px;height:412.1px;background:#e4e4e4;"></div>
<div class="ab" style="left:441.3px;top:76.4px;width:0.7px;height:412.1px;background:#e4e4e4;"></div>
<div class="ab" style="left:484.2px;top:76.4px;width:0.7px;height:412.1px;background:#e4e4e4;"></div>
<div class="ab" style="left:527.4000000000001px;top:76.4px;width:0.7px;height:412.1px;background:#e4e4e4;"></div>
<div class="ab" style="left:584.3000000000001px;top:76.4px;width:0.7px;height:412.1px;background:#e4e4e4;"></div>
<div class="ab" style="left:773.4000000000001px;top:76.4px;width:0.7px;height:412.1px;background:#e4e4e4;"></div>
<div class="ab" style="left:825.1px;top:76.4px;width:0.7px;height:412.1px;background:#e4e4e4;"></div>
<div class="ab" style="left:874.0px;top:76.4px;width:0.7px;height:412.1px;background:#e4e4e4;"></div>
<div class="ab" style="left:926.0px;top:76.4px;width:0.7px;height:412.1px;background:#e4e4e4;"></div>
<div class="ab" style="left:974.9000000000001px;top:76.4px;width:0.7px;height:412.1px;background:#e4e4e4;"></div>
<div class="ab" style="left:211.5px;top:76px;width:777.5px;height:412.5px;overflow:hidden">
<div class="t" style="left:231.80px;width:40px;text-align:center;top:3.50px;font-size:6.2px;color:#3c3c3c;-webkit-text-stroke:0.08px #3c3c3c;transform:scaleX(0.933)">13<span style="margin:0 0.46px">/</span>05<span style="margin:0 0.46px">/</span>2025</div>
<div class="t" style="left:271.60px;width:40px;text-align:center;top:3.50px;font-size:6.2px;color:#3c3c3c;-webkit-text-stroke:0.08px #3c3c3c;transform:scaleX(0.803)">FACTURA</div>
<div class="t" style="left:316.20px;width:56px;text-align:center;top:3.50px;font-size:6.2px;color:#3c3c3c;-webkit-text-stroke:0.08px #3c3c3c;transform:scaleX(0.904)">000000FE2048</div>
<div class="t" style="left:374.30px;top:3.50px;font-size:6.2px;color:#3c3c3c;-webkit-text-stroke:0.08px #3c3c3c;transform:scaleX(0.811);transform-origin:0 0">OTROS CUENTAS POR PAGAR</div>
<div class="t" style="left:563.20px;top:3.50px;font-size:6.2px;color:#3c3c3c;-webkit-text-stroke:0.08px #3c3c3c;transform:scaleX(0.933);transform-origin:0 0">10<span style="margin:0 0.46px">/</span>05<span style="margin:0 0.46px">/</span>2025</div>
<div class="t" style="left:611.00px;width:50px;text-align:right;top:3.50px;font-size:6.2px;color:#3c3c3c;-webkit-text-stroke:0.08px #3c3c3c;transform:scaleX(0.980);transform-origin:100% 0">11.214.988</div>
<div class="t" style="left:712.00px;width:50px;text-align:right;top:3.50px;font-size:6.2px;color:#3c3c3c;-webkit-text-stroke:0.08px #3c3c3c;transform:scaleX(0.980);transform-origin:100% 0">11.214.988</div>
<div class="t" style="left:765.50px;top:3.50px;font-size:6.2px;color:#3c3c3c;-webkit-text-stroke:0.08px #3c3c3c;transform:scaleX(0.935);transform-origin:0 0">09<span style="margin:0 0.46px">/</span>0</div>
<div class="t" style="left:231.80px;width:40px;text-align:center;top:14.27px;font-size:6.2px;color:#3c3c3c;-webkit-text-stroke:0.08px #3c3c3c;transform:scaleX(0.933)">13<span style="margin:0 0.46px">/</span>05<span style="margin:0 0.46px">/</span>2025</div>
<div class="t" style="left:271.60px;width:40px;text-align:center;top:14.27px;font-size:6.2px;color:#3c3c3c;-webkit-text-stroke:0.08px #3c3c3c;transform:scaleX(0.803)">FACTURA</div>
<div class="t" style="left:316.20px;width:56px;text-align:center;top:14.27px;font-size:6.2px;color:#3c3c3c;-webkit-text-stroke:0.08px #3c3c3c;transform:scaleX(0.904)">000000FE2049</div>
<div class="t" style="left:374.30px;top:14.27px;font-size:6.2px;color:#3c3c3c;-webkit-text-stroke:0.08px #3c3c3c;transform:scaleX(0.811);transform-origin:0 0">OTROS CUENTAS POR PAGAR</div>
<div class="t" style="left:563.20px;top:14.27px;font-size:6.2px;color:#3c3c3c;-webkit-text-stroke:0.08px #3c3c3c;transform:scaleX(0.933);transform-origin:0 0">10<span style="margin:0 0.46px">/</span>05<span style="margin:0 0.46px">/</span>2025</div>
<div class="t" style="left:611.00px;width:50px;text-align:right;top:14.27px;font-size:6.2px;color:#3c3c3c;-webkit-text-stroke:0.08px #3c3c3c;transform:scaleX(0.970);transform-origin:100% 0">5.750.058</div>
<div class="t" style="left:663.00px;width:50px;text-align:right;top:14.27px;font-size:6.2px;color:#3c3c3c;-webkit-text-stroke:0.08px #3c3c3c;transform:scaleX(0.966);transform-origin:100% 0">16.965.046</div>
<div class="t" style="left:712.00px;width:50px;text-align:right;top:14.27px;font-size:6.2px;color:#3c3c3c;-webkit-text-stroke:0.08px #3c3c3c;transform:scaleX(0.970);transform-origin:100% 0">5.750.058</div>
<div class="t" style="left:765.50px;top:14.27px;font-size:6.2px;color:#3c3c3c;-webkit-text-stroke:0.08px #3c3c3c;transform:scaleX(0.935);transform-origin:0 0">09<span style="margin:0 0.46px">/</span>0</div>
<div class="t" style="left:231.80px;width:40px;text-align:center;top:24.29px;font-size:6.2px;color:#3c3c3c;-webkit-text-stroke:0.08px #3c3c3c;transform:scaleX(0.933)">26<span style="margin:0 0.46px">/</span>05<span style="margin:0 0.46px">/</span>2025</div>
<div class="t" style="left:271.60px;width:40px;text-align:center;top:24.29px;font-size:6.2px;color:#3c3c3c;-webkit-text-stroke:0.08px #3c3c3c;transform:scaleX(0.803)">FACTURA</div>
<div class="t" style="left:316.20px;width:56px;text-align:center;top:24.29px;font-size:6.2px;color:#3c3c3c;-webkit-text-stroke:0.08px #3c3c3c;transform:scaleX(0.894)">00000AIM4445</div>
<div class="t" style="left:374.30px;top:24.29px;font-size:6.2px;color:#3c3c3c;-webkit-text-stroke:0.08px #3c3c3c;transform:scaleX(0.811);transform-origin:0 0">OTROS CUENTAS POR PAGAR</div>
<div class="t" style="left:563.20px;top:24.29px;font-size:6.2px;color:#3c3c3c;-webkit-text-stroke:0.08px #3c3c3c;transform:scaleX(0.933);transform-origin:0 0">19<span style="margin:0 0.46px">/</span>05<span style="margin:0 0.46px">/</span>2025</div>
<div class="t" style="left:611.00px;width:50px;text-align:right;top:24.29px;font-size:6.2px;color:#3c3c3c;-webkit-text-stroke:0.08px #3c3c3c;transform:scaleX(0.954);transform-origin:100% 0">395.142</div>
<div class="t" style="left:712.00px;width:50px;text-align:right;top:24.29px;font-size:6.2px;color:#3c3c3c;-webkit-text-stroke:0.08px #3c3c3c;transform:scaleX(0.954);transform-origin:100% 0">395.142</div>
<div class="t" style="left:765.50px;top:24.29px;font-size:6.2px;color:#3c3c3c;-webkit-text-stroke:0.08px #3c3c3c;transform:scaleX(0.935);transform-origin:0 0">18<span style="margin:0 0.46px">/</span>0</div>
<div class="t" style="left:231.80px;width:40px;text-align:center;top:34.31px;font-size:6.2px;color:#3c3c3c;-webkit-text-stroke:0.08px #3c3c3c;transform:scaleX(0.933)">26<span style="margin:0 0.46px">/</span>05<span style="margin:0 0.46px">/</span>2025</div>
<div class="t" style="left:271.60px;width:40px;text-align:center;top:34.31px;font-size:6.2px;color:#3c3c3c;-webkit-text-stroke:0.08px #3c3c3c;transform:scaleX(0.803)">FACTURA</div>
<div class="t" style="left:316.20px;width:56px;text-align:center;top:34.31px;font-size:6.2px;color:#3c3c3c;-webkit-text-stroke:0.08px #3c3c3c;transform:scaleX(0.894)">00000AIM4447</div>
<div class="t" style="left:374.30px;top:34.31px;font-size:6.2px;color:#3c3c3c;-webkit-text-stroke:0.08px #3c3c3c;transform:scaleX(0.811);transform-origin:0 0">OTROS CUENTAS POR PAGAR</div>
<div class="t" style="left:563.20px;top:34.31px;font-size:6.2px;color:#3c3c3c;-webkit-text-stroke:0.08px #3c3c3c;transform:scaleX(0.933);transform-origin:0 0">19<span style="margin:0 0.46px">/</span>05<span style="margin:0 0.46px">/</span>2025</div>
<div class="t" style="left:611.00px;width:50px;text-align:right;top:34.31px;font-size:6.2px;color:#3c3c3c;-webkit-text-stroke:0.08px #3c3c3c;transform:scaleX(0.970);transform-origin:100% 0">2.537.064</div>
<div class="t" style="left:712.00px;width:50px;text-align:right;top:34.31px;font-size:6.2px;color:#3c3c3c;-webkit-text-stroke:0.08px #3c3c3c;transform:scaleX(0.970);transform-origin:100% 0">2.537.064</div>
<div class="t" style="left:765.50px;top:34.31px;font-size:6.2px;color:#3c3c3c;-webkit-text-stroke:0.08px #3c3c3c;transform:scaleX(0.935);transform-origin:0 0">18<span style="margin:0 0.46px">/</span>0</div>
<div class="t" style="left:231.80px;width:40px;text-align:center;top:44.33px;font-size:6.2px;color:#3c3c3c;-webkit-text-stroke:0.08px #3c3c3c;transform:scaleX(0.933)">03<span style="margin:0 0.46px">/</span>06<span style="margin:0 0.46px">/</span>2025</div>
<div class="t" style="left:271.60px;width:40px;text-align:center;top:44.33px;font-size:6.2px;color:#3c3c3c;-webkit-text-stroke:0.08px #3c3c3c;transform:scaleX(0.803)">FACTURA</div>
<div class="t" style="left:316.20px;width:56px;text-align:center;top:44.33px;font-size:6.2px;color:#3c3c3c;-webkit-text-stroke:0.08px #3c3c3c;transform:scaleX(0.894)">00000AIM4469</div>
<div class="t" style="left:374.30px;top:44.33px;font-size:6.2px;color:#3c3c3c;-webkit-text-stroke:0.08px #3c3c3c;transform:scaleX(0.811);transform-origin:0 0">OTROS CUENTAS POR PAGAR</div>
<div class="t" style="left:563.20px;top:44.33px;font-size:6.2px;color:#3c3c3c;-webkit-text-stroke:0.08px #3c3c3c;transform:scaleX(0.933);transform-origin:0 0">26<span style="margin:0 0.46px">/</span>05<span style="margin:0 0.46px">/</span>2025</div>
<div class="t" style="left:611.00px;width:50px;text-align:right;top:44.33px;font-size:6.2px;color:#3c3c3c;-webkit-text-stroke:0.08px #3c3c3c;transform:scaleX(0.954);transform-origin:100% 0">213.774</div>
<div class="t" style="left:712.00px;width:50px;text-align:right;top:44.33px;font-size:6.2px;color:#3c3c3c;-webkit-text-stroke:0.08px #3c3c3c;transform:scaleX(0.954);transform-origin:100% 0">213.774</div>
<div class="t" style="left:765.50px;top:44.33px;font-size:6.2px;color:#3c3c3c;-webkit-text-stroke:0.08px #3c3c3c;transform:scaleX(0.935);transform-origin:0 0">25<span style="margin:0 0.46px">/</span>0</div>
<div class="t" style="left:231.80px;width:40px;text-align:center;top:54.34px;font-size:6.2px;color:#3c3c3c;-webkit-text-stroke:0.08px #3c3c3c;transform:scaleX(0.933)">03<span style="margin:0 0.46px">/</span>06<span style="margin:0 0.46px">/</span>2025</div>
<div class="t" style="left:271.60px;width:40px;text-align:center;top:54.34px;font-size:6.2px;color:#3c3c3c;-webkit-text-stroke:0.08px #3c3c3c;transform:scaleX(0.803)">FACTURA</div>
<div class="t" style="left:316.20px;width:56px;text-align:center;top:54.34px;font-size:6.2px;color:#3c3c3c;-webkit-text-stroke:0.08px #3c3c3c;transform:scaleX(0.891)">0000FVE13410</div>
<div class="t" style="left:374.30px;top:54.34px;font-size:6.2px;color:#3c3c3c;-webkit-text-stroke:0.08px #3c3c3c;transform:scaleX(0.811);transform-origin:0 0">OTROS CUENTAS POR PAGAR</div>
<div class="t" style="left:563.20px;top:54.34px;font-size:6.2px;color:#3c3c3c;-webkit-text-stroke:0.08px #3c3c3c;transform:scaleX(0.933);transform-origin:0 0">26<span style="margin:0 0.46px">/</span>05<span style="margin:0 0.46px">/</span>2025</div>
<div class="t" style="left:611.00px;width:50px;text-align:right;top:54.34px;font-size:6.2px;color:#3c3c3c;-webkit-text-stroke:0.08px #3c3c3c;transform:scaleX(0.954);transform-origin:100% 0">487.830</div>
<div class="t" style="left:712.00px;width:50px;text-align:right;top:54.34px;font-size:6.2px;color:#3c3c3c;-webkit-text-stroke:0.08px #3c3c3c;transform:scaleX(0.954);transform-origin:100% 0">487.830</div>
<div class="t" style="left:765.50px;top:54.34px;font-size:6.2px;color:#3c3c3c;-webkit-text-stroke:0.08px #3c3c3c;transform:scaleX(0.935);transform-origin:0 0">25<span style="margin:0 0.46px">/</span>0</div>
<div class="t" style="left:231.80px;width:40px;text-align:center;top:64.36px;font-size:6.2px;color:#3c3c3c;-webkit-text-stroke:0.08px #3c3c3c;transform:scaleX(0.933)">03<span style="margin:0 0.46px">/</span>06<span style="margin:0 0.46px">/</span>2025</div>
<div class="t" style="left:271.60px;width:40px;text-align:center;top:64.36px;font-size:6.2px;color:#3c3c3c;-webkit-text-stroke:0.08px #3c3c3c;transform:scaleX(0.803)">FACTURA</div>
<div class="t" style="left:316.20px;width:56px;text-align:center;top:64.36px;font-size:6.2px;color:#3c3c3c;-webkit-text-stroke:0.08px #3c3c3c;transform:scaleX(0.894)">00000AIM4446</div>
<div class="t" style="left:374.30px;top:64.36px;font-size:6.2px;color:#3c3c3c;-webkit-text-stroke:0.08px #3c3c3c;transform:scaleX(0.811);transform-origin:0 0">OTROS CUENTAS POR PAGAR</div>
<div class="t" style="left:563.20px;top:64.36px;font-size:6.2px;color:#3c3c3c;-webkit-text-stroke:0.08px #3c3c3c;transform:scaleX(0.933);transform-origin:0 0">27<span style="margin:0 0.46px">/</span>05<span style="margin:0 0.46px">/</span>2025</div>
<div class="t" style="left:611.00px;width:50px;text-align:right;top:64.36px;font-size:6.2px;color:#3c3c3c;-webkit-text-stroke:0.08px #3c3c3c;transform:scaleX(0.954);transform-origin:100% 0">357.858</div>
<div class="t" style="left:712.00px;width:50px;text-align:right;top:64.36px;font-size:6.2px;color:#3c3c3c;-webkit-text-stroke:0.08px #3c3c3c;transform:scaleX(0.954);transform-origin:100% 0">357.858</div>
<div class="t" style="left:765.50px;top:64.36px;font-size:6.2px;color:#3c3c3c;-webkit-text-stroke:0.08px #3c3c3c;transform:scaleX(0.935);transform-origin:0 0">26<span style="margin:0 0.46px">/</span>0</div>
<div class="t" style="left:231.80px;width:40px;text-align:center;top:74.38px;font-size:6.2px;color:#3c3c3c;-webkit-text-stroke:0.08px #3c3c3c;transform:scaleX(0.933)">03<span style="margin:0 0.46px">/</span>06<span style="margin:0 0.46px">/</span>2025</div>
<div class="t" style="left:271.60px;width:40px;text-align:center;top:74.38px;font-size:6.2px;color:#3c3c3c;-webkit-text-stroke:0.08px #3c3c3c;transform:scaleX(0.803)">FACTURA</div>
<div class="t" style="left:316.20px;width:56px;text-align:center;top:74.38px;font-size:6.2px;color:#3c3c3c;-webkit-text-stroke:0.08px #3c3c3c;transform:scaleX(0.894)">00000AIM4468</div>
<div class="t" style="left:374.30px;top:74.38px;font-size:6.2px;color:#3c3c3c;-webkit-text-stroke:0.08px #3c3c3c;transform:scaleX(0.811);transform-origin:0 0">OTROS CUENTAS POR PAGAR</div>
<div class="t" style="left:563.20px;top:74.38px;font-size:6.2px;color:#3c3c3c;-webkit-text-stroke:0.08px #3c3c3c;transform:scaleX(0.933);transform-origin:0 0">27<span style="margin:0 0.46px">/</span>05<span style="margin:0 0.46px">/</span>2025</div>
<div class="t" style="left:611.00px;width:50px;text-align:right;top:74.38px;font-size:6.2px;color:#3c3c3c;-webkit-text-stroke:0.08px #3c3c3c;transform:scaleX(0.954);transform-origin:100% 0">395.142</div>
<div class="t" style="left:712.00px;width:50px;text-align:right;top:74.38px;font-size:6.2px;color:#3c3c3c;-webkit-text-stroke:0.08px #3c3c3c;transform:scaleX(0.954);transform-origin:100% 0">395.142</div>
<div class="t" style="left:765.50px;top:74.38px;font-size:6.2px;color:#3c3c3c;-webkit-text-stroke:0.08px #3c3c3c;transform:scaleX(0.935);transform-origin:0 0">26<span style="margin:0 0.46px">/</span>0</div>
<div class="t" style="left:231.80px;width:40px;text-align:center;top:84.40px;font-size:6.2px;color:#3c3c3c;-webkit-text-stroke:0.08px #3c3c3c;transform:scaleX(0.933)">03<span style="margin:0 0.46px">/</span>06<span style="margin:0 0.46px">/</span>2025</div>
<div class="t" style="left:271.60px;width:40px;text-align:center;top:84.40px;font-size:6.2px;color:#3c3c3c;-webkit-text-stroke:0.08px #3c3c3c;transform:scaleX(0.803)">FACTURA</div>
<div class="t" style="left:316.20px;width:56px;text-align:center;top:84.40px;font-size:6.2px;color:#3c3c3c;-webkit-text-stroke:0.08px #3c3c3c;transform:scaleX(0.894)">00000AIM4471</div>
<div class="t" style="left:374.30px;top:84.40px;font-size:6.2px;color:#3c3c3c;-webkit-text-stroke:0.08px #3c3c3c;transform:scaleX(0.811);transform-origin:0 0">OTROS CUENTAS POR PAGAR</div>
<div class="t" style="left:563.20px;top:84.40px;font-size:6.2px;color:#3c3c3c;-webkit-text-stroke:0.08px #3c3c3c;transform:scaleX(0.933);transform-origin:0 0">27<span style="margin:0 0.46px">/</span>05<span style="margin:0 0.46px">/</span>2025</div>
<div class="t" style="left:611.00px;width:50px;text-align:right;top:84.40px;font-size:6.2px;color:#3c3c3c;-webkit-text-stroke:0.08px #3c3c3c;transform:scaleX(0.954);transform-origin:100% 0">213.774</div>
<div class="t" style="left:712.00px;width:50px;text-align:right;top:84.40px;font-size:6.2px;color:#3c3c3c;-webkit-text-stroke:0.08px #3c3c3c;transform:scaleX(0.954);transform-origin:100% 0">213.774</div>
<div class="t" style="left:765.50px;top:84.40px;font-size:6.2px;color:#3c3c3c;-webkit-text-stroke:0.08px #3c3c3c;transform:scaleX(0.935);transform-origin:0 0">26<span style="margin:0 0.46px">/</span>0</div>
<div class="t" style="left:231.80px;width:40px;text-align:center;top:94.42px;font-size:6.2px;color:#3c3c3c;-webkit-text-stroke:0.08px #3c3c3c;transform:scaleX(0.933)">10<span style="margin:0 0.46px">/</span>06<span style="margin:0 0.46px">/</span>2025</div>
<div class="t" style="left:271.60px;width:40px;text-align:center;top:94.42px;font-size:6.2px;color:#3c3c3c;-webkit-text-stroke:0.08px #3c3c3c;transform:scaleX(0.803)">FACTURA</div>
<div class="t" style="left:316.20px;width:56px;text-align:center;top:94.42px;font-size:6.2px;color:#3c3c3c;-webkit-text-stroke:0.08px #3c3c3c;transform:scaleX(0.894)">00000AIM4472</div>
<div class="t" style="left:374.30px;top:94.42px;font-size:6.2px;color:#3c3c3c;-webkit-text-stroke:0.08px #3c3c3c;transform:scaleX(0.811);transform-origin:0 0">OTROS CUENTAS POR PAGAR</div>
<div class="t" style="left:563.20px;top:94.42px;font-size:6.2px;color:#3c3c3c;-webkit-text-stroke:0.08px #3c3c3c;transform:scaleX(0.933);transform-origin:0 0">27<span style="margin:0 0.46px">/</span>05<span style="margin:0 0.46px">/</span>2025</div>
<div class="t" style="left:611.00px;width:50px;text-align:right;top:94.42px;font-size:6.2px;color:#3c3c3c;-webkit-text-stroke:0.08px #3c3c3c;transform:scaleX(0.954);transform-origin:100% 0">487.830</div>
<div class="t" style="left:712.00px;width:50px;text-align:right;top:94.42px;font-size:6.2px;color:#3c3c3c;-webkit-text-stroke:0.08px #3c3c3c;transform:scaleX(0.954);transform-origin:100% 0">487.830</div>
<div class="t" style="left:765.50px;top:94.42px;font-size:6.2px;color:#3c3c3c;-webkit-text-stroke:0.08px #3c3c3c;transform:scaleX(0.935);transform-origin:0 0">26<span style="margin:0 0.46px">/</span>0</div>
<div class="t" style="left:231.80px;width:40px;text-align:center;top:104.44px;font-size:6.2px;color:#3c3c3c;-webkit-text-stroke:0.08px #3c3c3c;transform:scaleX(0.933)">03<span style="margin:0 0.46px">/</span>06<span style="margin:0 0.46px">/</span>2025</div>
<div class="t" style="left:271.60px;width:40px;text-align:center;top:104.44px;font-size:6.2px;color:#3c3c3c;-webkit-text-stroke:0.08px #3c3c3c;transform:scaleX(0.803)">FACTURA</div>
<div class="t" style="left:316.20px;width:56px;text-align:center;top:104.44px;font-size:6.2px;color:#3c3c3c;-webkit-text-stroke:0.08px #3c3c3c;transform:scaleX(0.891)">0000FVE13418</div>
<div class="t" style="left:374.30px;top:104.44px;font-size:6.2px;color:#3c3c3c;-webkit-text-stroke:0.08px #3c3c3c;transform:scaleX(0.811);transform-origin:0 0">OTROS CUENTAS POR PAGAR</div>
<div class="t" style="left:563.20px;top:104.44px;font-size:6.2px;color:#3c3c3c;-webkit-text-stroke:0.08px #3c3c3c;transform:scaleX(0.933);transform-origin:0 0">27<span style="margin:0 0.46px">/</span>05<span style="margin:0 0.46px">/</span>2025</div>
<div class="t" style="left:611.00px;width:50px;text-align:right;top:104.44px;font-size:6.2px;color:#3c3c3c;-webkit-text-stroke:0.08px #3c3c3c;transform:scaleX(0.954);transform-origin:100% 0">975.660</div>
<div class="t" style="left:712.00px;width:50px;text-align:right;top:104.44px;font-size:6.2px;color:#3c3c3c;-webkit-text-stroke:0.08px #3c3c3c;transform:scaleX(0.954);transform-origin:100% 0">975.660</div>
<div class="t" style="left:765.50px;top:104.44px;font-size:6.2px;color:#3c3c3c;-webkit-text-stroke:0.08px #3c3c3c;transform:scaleX(0.935);transform-origin:0 0">26<span style="margin:0 0.46px">/</span>0</div>
<div class="t" style="left:231.80px;width:40px;text-align:center;top:114.46px;font-size:6.2px;color:#3c3c3c;-webkit-text-stroke:0.08px #3c3c3c;transform:scaleX(0.933)">10<span style="margin:0 0.46px">/</span>06<span style="margin:0 0.46px">/</span>2025</div>
<div class="t" style="left:271.60px;width:40px;text-align:center;top:114.46px;font-size:6.2px;color:#3c3c3c;-webkit-text-stroke:0.08px #3c3c3c;transform:scaleX(0.803)">FACTURA</div>
<div class="t" style="left:316.20px;width:56px;text-align:center;top:114.46px;font-size:6.2px;color:#3c3c3c;-webkit-text-stroke:0.08px #3c3c3c;transform:scaleX(0.891)">0000FVE13424</div>
<div class="t" style="left:374.30px;top:114.46px;font-size:6.2px;color:#3c3c3c;-webkit-text-stroke:0.08px #3c3c3c;transform:scaleX(0.811);transform-origin:0 0">OTROS CUENTAS POR PAGAR</div>
<div class="t" style="left:563.20px;top:114.46px;font-size:6.2px;color:#3c3c3c;-webkit-text-stroke:0.08px #3c3c3c;transform:scaleX(0.933);transform-origin:0 0">27<span style="margin:0 0.46px">/</span>05<span style="margin:0 0.46px">/</span>2025</div>
<div class="t" style="left:611.00px;width:50px;text-align:right;top:114.46px;font-size:6.2px;color:#3c3c3c;-webkit-text-stroke:0.08px #3c3c3c;transform:scaleX(0.954);transform-origin:100% 0">975.660</div>
<div class="t" style="left:712.00px;width:50px;text-align:right;top:114.46px;font-size:6.2px;color:#3c3c3c;-webkit-text-stroke:0.08px #3c3c3c;transform:scaleX(0.954);transform-origin:100% 0">975.660</div>
<div class="t" style="left:765.50px;top:114.46px;font-size:6.2px;color:#3c3c3c;-webkit-text-stroke:0.08px #3c3c3c;transform:scaleX(0.935);transform-origin:0 0">26<span style="margin:0 0.46px">/</span>0</div>
<div class="t" style="left:231.80px;width:40px;text-align:center;top:124.47px;font-size:6.2px;color:#3c3c3c;-webkit-text-stroke:0.08px #3c3c3c;transform:scaleX(0.933)">09<span style="margin:0 0.46px">/</span>06<span style="margin:0 0.46px">/</span>2025</div>
<div class="t" style="left:271.60px;width:40px;text-align:center;top:124.47px;font-size:6.2px;color:#3c3c3c;-webkit-text-stroke:0.08px #3c3c3c;transform:scaleX(0.803)">FACTURA</div>
<div class="t" style="left:316.20px;width:56px;text-align:center;top:124.47px;font-size:6.2px;color:#3c3c3c;-webkit-text-stroke:0.08px #3c3c3c;transform:scaleX(0.891)">0000FVE13432</div>
<div class="t" style="left:374.30px;top:124.47px;font-size:6.2px;color:#3c3c3c;-webkit-text-stroke:0.08px #3c3c3c;transform:scaleX(0.811);transform-origin:0 0">OTROS CUENTAS POR PAGAR</div>
<div class="t" style="left:563.20px;top:124.47px;font-size:6.2px;color:#3c3c3c;-webkit-text-stroke:0.08px #3c3c3c;transform:scaleX(0.933);transform-origin:0 0">28<span style="margin:0 0.46px">/</span>05<span style="margin:0 0.46px">/</span>2025</div>
<div class="t" style="left:611.00px;width:50px;text-align:right;top:124.47px;font-size:6.2px;color:#3c3c3c;-webkit-text-stroke:0.08px #3c3c3c;transform:scaleX(0.954);transform-origin:100% 0">975.660</div>
<div class="t" style="left:712.00px;width:50px;text-align:right;top:124.47px;font-size:6.2px;color:#3c3c3c;-webkit-text-stroke:0.08px #3c3c3c;transform:scaleX(0.954);transform-origin:100% 0">975.660</div>
<div class="t" style="left:765.50px;top:124.47px;font-size:6.2px;color:#3c3c3c;-webkit-text-stroke:0.08px #3c3c3c;transform:scaleX(0.935);transform-origin:0 0">27<span style="margin:0 0.46px">/</span>0</div>
<div class="t" style="left:231.80px;width:40px;text-align:center;top:134.49px;font-size:6.2px;color:#3c3c3c;-webkit-text-stroke:0.08px #3c3c3c;transform:scaleX(0.947)">11<span style="margin:0 0.46px">/</span>06<span style="margin:0 0.46px">/</span>2025</div>
<div class="t" style="left:271.60px;width:40px;text-align:center;top:134.49px;font-size:6.2px;color:#3c3c3c;-webkit-text-stroke:0.08px #3c3c3c;transform:scaleX(0.803)">FACTURA</div>
<div class="t" style="left:316.20px;width:56px;text-align:center;top:134.49px;font-size:6.2px;color:#3c3c3c;-webkit-text-stroke:0.08px #3c3c3c;transform:scaleX(0.894)">00000AIM4480</div>
<div class="t" style="left:374.30px;top:134.49px;font-size:6.2px;color:#3c3c3c;-webkit-text-stroke:0.08px #3c3c3c;transform:scaleX(0.811);transform-origin:0 0">OTROS CUENTAS POR PAGAR</div>
<div class="t" style="left:563.20px;top:134.49px;font-size:6.2px;color:#3c3c3c;-webkit-text-stroke:0.08px #3c3c3c;transform:scaleX(0.933);transform-origin:0 0">30<span style="margin:0 0.46px">/</span>05<span style="margin:0 0.46px">/</span>2025</div>
<div class="t" style="left:611.00px;width:50px;text-align:right;top:134.49px;font-size:6.2px;color:#3c3c3c;-webkit-text-stroke:0.08px #3c3c3c;transform:scaleX(0.954);transform-origin:100% 0">731.745</div>
<div class="t" style="left:712.00px;width:50px;text-align:right;top:134.49px;font-size:6.2px;color:#3c3c3c;-webkit-text-stroke:0.08px #3c3c3c;transform:scaleX(0.954);transform-origin:100% 0">731.745</div>
<div class="t" style="left:765.50px;top:134.49px;font-size:6.2px;color:#3c3c3c;-webkit-text-stroke:0.08px #3c3c3c;transform:scaleX(0.935);transform-origin:0 0">29<span style="margin:0 0.46px">/</span>0</div>
<div class="t" style="left:231.80px;width:40px;text-align:center;top:144.51px;font-size:6.2px;color:#3c3c3c;-webkit-text-stroke:0.08px #3c3c3c;transform:scaleX(0.947)">11<span style="margin:0 0.46px">/</span>06<span style="margin:0 0.46px">/</span>2025</div>
<div class="t" style="left:271.60px;width:40px;text-align:center;top:144.51px;font-size:6.2px;color:#3c3c3c;-webkit-text-stroke:0.08px #3c3c3c;transform:scaleX(0.803)">FACTURA</div>
<div class="t" style="left:316.20px;width:56px;text-align:center;top:144.51px;font-size:6.2px;color:#3c3c3c;-webkit-text-stroke:0.08px #3c3c3c;transform:scaleX(0.894)">00000AIM4481</div>
<div class="t" style="left:374.30px;top:144.51px;font-size:6.2px;color:#3c3c3c;-webkit-text-stroke:0.08px #3c3c3c;transform:scaleX(0.811);transform-origin:0 0">OTROS CUENTAS POR PAGAR</div>
<div class="t" style="left:563.20px;top:144.51px;font-size:6.2px;color:#3c3c3c;-webkit-text-stroke:0.08px #3c3c3c;transform:scaleX(0.933);transform-origin:0 0">30<span style="margin:0 0.46px">/</span>05<span style="margin:0 0.46px">/</span>2025</div>
<div class="t" style="left:611.00px;width:50px;text-align:right;top:144.51px;font-size:6.2px;color:#3c3c3c;-webkit-text-stroke:0.08px #3c3c3c;transform:scaleX(0.954);transform-origin:100% 0">975.660</div>
<div class="t" style="left:712.00px;width:50px;text-align:right;top:144.51px;font-size:6.2px;color:#3c3c3c;-webkit-text-stroke:0.08px #3c3c3c;transform:scaleX(0.954);transform-origin:100% 0">975.660</div>
<div class="t" style="left:765.50px;top:144.51px;font-size:6.2px;color:#3c3c3c;-webkit-text-stroke:0.08px #3c3c3c;transform:scaleX(0.935);transform-origin:0 0">29<span style="margin:0 0.46px">/</span>0</div>
<div class="t" style="left:231.80px;width:40px;text-align:center;top:154.53px;font-size:6.2px;color:#3c3c3c;-webkit-text-stroke:0.08px #3c3c3c;transform:scaleX(0.947)">11<span style="margin:0 0.46px">/</span>06<span style="margin:0 0.46px">/</span>2025</div>
<div class="t" style="left:271.60px;width:40px;text-align:center;top:154.53px;font-size:6.2px;color:#3c3c3c;-webkit-text-stroke:0.08px #3c3c3c;transform:scaleX(0.803)">FACTURA</div>
<div class="t" style="left:316.20px;width:56px;text-align:center;top:154.53px;font-size:6.2px;color:#3c3c3c;-webkit-text-stroke:0.08px #3c3c3c;transform:scaleX(0.894)">00000AIM4482</div>
<div class="t" style="left:374.30px;top:154.53px;font-size:6.2px;color:#3c3c3c;-webkit-text-stroke:0.08px #3c3c3c;transform:scaleX(0.811);transform-origin:0 0">OTROS CUENTAS POR PAGAR</div>
<div class="t" style="left:563.20px;top:154.53px;font-size:6.2px;color:#3c3c3c;-webkit-text-stroke:0.08px #3c3c3c;transform:scaleX(0.933);transform-origin:0 0">30<span style="margin:0 0.46px">/</span>05<span style="margin:0 0.46px">/</span>2025</div>
<div class="t" style="left:611.00px;width:50px;text-align:right;top:154.53px;font-size:6.2px;color:#3c3c3c;-webkit-text-stroke:0.08px #3c3c3c;transform:scaleX(0.954);transform-origin:100% 0">975.660</div>
<div class="t" style="left:712.00px;width:50px;text-align:right;top:154.53px;font-size:6.2px;color:#3c3c3c;-webkit-text-stroke:0.08px #3c3c3c;transform:scaleX(0.954);transform-origin:100% 0">975.660</div>
<div class="t" style="left:765.50px;top:154.53px;font-size:6.2px;color:#3c3c3c;-webkit-text-stroke:0.08px #3c3c3c;transform:scaleX(0.935);transform-origin:0 0">29<span style="margin:0 0.46px">/</span>0</div>
<div class="t" style="left:231.80px;width:40px;text-align:center;top:164.55px;font-size:6.2px;color:#3c3c3c;-webkit-text-stroke:0.08px #3c3c3c;transform:scaleX(0.947)">11<span style="margin:0 0.46px">/</span>06<span style="margin:0 0.46px">/</span>2025</div>
<div class="t" style="left:271.60px;width:40px;text-align:center;top:164.55px;font-size:6.2px;color:#3c3c3c;-webkit-text-stroke:0.08px #3c3c3c;transform:scaleX(0.803)">FACTURA</div>
<div class="t" style="left:316.20px;width:56px;text-align:center;top:164.55px;font-size:6.2px;color:#3c3c3c;-webkit-text-stroke:0.08px #3c3c3c;transform:scaleX(0.894)">00000AIM4483</div>
<div class="t" style="left:374.30px;top:164.55px;font-size:6.2px;color:#3c3c3c;-webkit-text-stroke:0.08px #3c3c3c;transform:scaleX(0.811);transform-origin:0 0">OTROS CUENTAS POR PAGAR</div>
<div class="t" style="left:563.20px;top:164.55px;font-size:6.2px;color:#3c3c3c;-webkit-text-stroke:0.08px #3c3c3c;transform:scaleX(0.933);transform-origin:0 0">30<span style="margin:0 0.46px">/</span>05<span style="margin:0 0.46px">/</span>2025</div>
<div class="t" style="left:611.00px;width:50px;text-align:right;top:164.55px;font-size:6.2px;color:#3c3c3c;-webkit-text-stroke:0.08px #3c3c3c;transform:scaleX(0.954);transform-origin:100% 0">395.142</div>
<div class="t" style="left:712.00px;width:50px;text-align:right;top:164.55px;font-size:6.2px;color:#3c3c3c;-webkit-text-stroke:0.08px #3c3c3c;transform:scaleX(0.954);transform-origin:100% 0">395.142</div>
<div class="t" style="left:765.50px;top:164.55px;font-size:6.2px;color:#3c3c3c;-webkit-text-stroke:0.08px #3c3c3c;transform:scaleX(0.935);transform-origin:0 0">29<span style="margin:0 0.46px">/</span>0</div>
<div class="t" style="left:231.80px;width:40px;text-align:center;top:174.57px;font-size:6.2px;color:#3c3c3c;-webkit-text-stroke:0.08px #3c3c3c;transform:scaleX(0.933)">13<span style="margin:0 0.46px">/</span>06<span style="margin:0 0.46px">/</span>2025</div>
<div class="t" style="left:271.60px;width:40px;text-align:center;top:174.57px;font-size:6.2px;color:#3c3c3c;-webkit-text-stroke:0.08px #3c3c3c;transform:scaleX(0.803)">FACTURA</div>
<div class="t" style="left:316.20px;width:56px;text-align:center;top:174.57px;font-size:6.2px;color:#3c3c3c;-webkit-text-stroke:0.08px #3c3c3c;transform:scaleX(0.891)">0000FVE13448</div>
<div class="t" style="left:374.30px;top:174.57px;font-size:6.2px;color:#3c3c3c;-webkit-text-stroke:0.08px #3c3c3c;transform:scaleX(0.811);transform-origin:0 0">OTROS CUENTAS POR PAGAR</div>
<div class="t" style="left:563.20px;top:174.57px;font-size:6.2px;color:#3c3c3c;-webkit-text-stroke:0.08px #3c3c3c;transform:scaleX(0.933);transform-origin:0 0">30<span style="margin:0 0.46px">/</span>05<span style="margin:0 0.46px">/</span>2025</div>
<div class="t" style="left:611.00px;width:50px;text-align:right;top:174.57px;font-size:6.2px;color:#3c3c3c;-webkit-text-stroke:0.08px #3c3c3c;transform:scaleX(0.970);transform-origin:100% 0">2.494.454</div>
<div class="t" style="left:712.00px;width:50px;text-align:right;top:174.57px;font-size:6.2px;color:#3c3c3c;-webkit-text-stroke:0.08px #3c3c3c;transform:scaleX(0.970);transform-origin:100% 0">2.494.454</div>
<div class="t" style="left:765.50px;top:174.57px;font-size:6.2px;color:#3c3c3c;-webkit-text-stroke:0.08px #3c3c3c;transform:scaleX(0.935);transform-origin:0 0">29<span style="margin:0 0.46px">/</span>0</div>
<div class="t" style="left:231.80px;width:40px;text-align:center;top:184.59px;font-size:6.2px;color:#3c3c3c;-webkit-text-stroke:0.08px #3c3c3c;transform:scaleX(0.933)">10<span style="margin:0 0.46px">/</span>06<span style="margin:0 0.46px">/</span>2025</div>
<div class="t" style="left:271.60px;width:40px;text-align:center;top:184.59px;font-size:6.2px;color:#3c3c3c;-webkit-text-stroke:0.08px #3c3c3c;transform:scaleX(0.803)">FACTURA</div>
<div class="t" style="left:316.20px;width:56px;text-align:center;top:184.59px;font-size:6.2px;color:#3c3c3c;-webkit-text-stroke:0.08px #3c3c3c;transform:scaleX(0.891)">0000FVE13456</div>
<div class="t" style="left:374.30px;top:184.59px;font-size:6.2px;color:#3c3c3c;-webkit-text-stroke:0.08px #3c3c3c;transform:scaleX(0.811);transform-origin:0 0">OTROS CUENTAS POR PAGAR</div>
<div class="t" style="left:563.20px;top:184.59px;font-size:6.2px;color:#3c3c3c;-webkit-text-stroke:0.08px #3c3c3c;transform:scaleX(0.933);transform-origin:0 0">30<span style="margin:0 0.46px">/</span>05<span style="margin:0 0.46px">/</span>2025</div>
<div class="t" style="left:611.00px;width:50px;text-align:right;top:184.59px;font-size:6.2px;color:#3c3c3c;-webkit-text-stroke:0.08px #3c3c3c;transform:scaleX(0.966);transform-origin:100% 0">12.176.237</div>
<div class="t" style="left:712.00px;width:50px;text-align:right;top:184.59px;font-size:6.2px;color:#3c3c3c;-webkit-text-stroke:0.08px #3c3c3c;transform:scaleX(0.966);transform-origin:100% 0">12.176.237</div>
<div class="t" style="left:765.50px;top:184.59px;font-size:6.2px;color:#3c3c3c;-webkit-text-stroke:0.08px #3c3c3c;transform:scaleX(0.935);transform-origin:0 0">29<span style="margin:0 0.46px">/</span>0</div>
<div class="t" style="left:231.80px;width:40px;text-align:center;top:194.61px;font-size:6.2px;color:#3c3c3c;-webkit-text-stroke:0.08px #3c3c3c;transform:scaleX(0.933)">04<span style="margin:0 0.46px">/</span>06<span style="margin:0 0.46px">/</span>2025</div>
<div class="t" style="left:271.60px;width:40px;text-align:center;top:194.61px;font-size:6.2px;color:#3c3c3c;-webkit-text-stroke:0.08px #3c3c3c;transform:scaleX(0.803)">FACTURA</div>
<div class="t" style="left:316.20px;width:56px;text-align:center;top:194.61px;font-size:6.2px;color:#3c3c3c;-webkit-text-stroke:0.08px #3c3c3c;transform:scaleX(0.891)">0000FVE13460</div>
<div class="t" style="left:374.30px;top:194.61px;font-size:6.2px;color:#3c3c3c;-webkit-text-stroke:0.08px #3c3c3c;transform:scaleX(0.811);transform-origin:0 0">OTROS CUENTAS POR PAGAR</div>
<div class="t" style="left:563.20px;top:194.61px;font-size:6.2px;color:#3c3c3c;-webkit-text-stroke:0.08px #3c3c3c;transform:scaleX(0.933);transform-origin:0 0">30<span style="margin:0 0.46px">/</span>05<span style="margin:0 0.46px">/</span>2025</div>
<div class="t" style="left:611.00px;width:50px;text-align:right;top:194.61px;font-size:6.2px;color:#3c3c3c;-webkit-text-stroke:0.08px #3c3c3c;transform:scaleX(0.954);transform-origin:100% 0">549.506</div>
<div class="t" style="left:712.00px;width:50px;text-align:right;top:194.61px;font-size:6.2px;color:#3c3c3c;-webkit-text-stroke:0.08px #3c3c3c;transform:scaleX(0.954);transform-origin:100% 0">549.506</div>
<div class="t" style="left:765.50px;top:194.61px;font-size:6.2px;color:#3c3c3c;-webkit-text-stroke:0.08px #3c3c3c;transform:scaleX(0.935);transform-origin:0 0">29<span style="margin:0 0.46px">/</span>0</div>
<div class="t" style="left:231.80px;width:40px;text-align:center;top:204.62px;font-size:6.2px;color:#3c3c3c;-webkit-text-stroke:0.08px #3c3c3c;transform:scaleX(0.933)">04<span style="margin:0 0.46px">/</span>06<span style="margin:0 0.46px">/</span>2025</div>
<div class="t" style="left:271.60px;width:40px;text-align:center;top:204.62px;font-size:6.2px;color:#3c3c3c;-webkit-text-stroke:0.08px #3c3c3c;transform:scaleX(0.803)">FACTURA</div>
<div class="t" style="left:316.20px;width:56px;text-align:center;top:204.62px;font-size:6.2px;color:#3c3c3c;-webkit-text-stroke:0.08px #3c3c3c;transform:scaleX(0.891)">0000FVE13472</div>
<div class="t" style="left:374.30px;top:204.62px;font-size:6.2px;color:#3c3c3c;-webkit-text-stroke:0.08px #3c3c3c;transform:scaleX(0.811);transform-origin:0 0">OTROS CUENTAS POR PAGAR</div>
<div class="t" style="left:563.20px;top:204.62px;font-size:6.2px;color:#3c3c3c;-webkit-text-stroke:0.08px #3c3c3c;transform:scaleX(0.933);transform-origin:0 0">31<span style="margin:0 0.46px">/</span>05<span style="margin:0 0.46px">/</span>2025</div>
<div class="t" style="left:611.00px;width:50px;text-align:right;top:204.62px;font-size:6.2px;color:#3c3c3c;-webkit-text-stroke:0.08px #3c3c3c;transform:scaleX(0.987);transform-origin:100% 0">2.538.110</div>
<div class="t" style="left:712.00px;width:50px;text-align:right;top:204.62px;font-size:6.2px;color:#3c3c3c;-webkit-text-stroke:0.08px #3c3c3c;transform:scaleX(0.987);transform-origin:100% 0">2.538.110</div>
<div class="t" style="left:765.50px;top:204.62px;font-size:6.2px;color:#3c3c3c;-webkit-text-stroke:0.08px #3c3c3c;transform:scaleX(0.935);transform-origin:0 0">30<span style="margin:0 0.46px">/</span>0</div>
<div class="t" style="left:231.80px;width:40px;text-align:center;top:214.64px;font-size:6.2px;color:#3c3c3c;-webkit-text-stroke:0.08px #3c3c3c;transform:scaleX(0.933)">10<span style="margin:0 0.46px">/</span>06<span style="margin:0 0.46px">/</span>2025</div>
<div class="t" style="left:271.60px;width:40px;text-align:center;top:214.64px;font-size:6.2px;color:#3c3c3c;-webkit-text-stroke:0.08px #3c3c3c;transform:scaleX(0.803)">FACTURA</div>
<div class="t" style="left:316.20px;width:56px;text-align:center;top:214.64px;font-size:6.2px;color:#3c3c3c;-webkit-text-stroke:0.08px #3c3c3c;transform:scaleX(0.891)">0000FVE13481</div>
<div class="t" style="left:374.30px;top:214.64px;font-size:6.2px;color:#3c3c3c;-webkit-text-stroke:0.08px #3c3c3c;transform:scaleX(0.811);transform-origin:0 0">OTROS CUENTAS POR PAGAR</div>
<div class="t" style="left:563.20px;top:214.64px;font-size:6.2px;color:#3c3c3c;-webkit-text-stroke:0.08px #3c3c3c;transform:scaleX(0.933);transform-origin:0 0">31<span style="margin:0 0.46px">/</span>05<span style="margin:0 0.46px">/</span>2025</div>
<div class="t" style="left:611.00px;width:50px;text-align:right;top:214.64px;font-size:6.2px;color:#3c3c3c;-webkit-text-stroke:0.08px #3c3c3c;transform:scaleX(0.954);transform-origin:100% 0">144.955</div>
<div class="t" style="left:712.00px;width:50px;text-align:right;top:214.64px;font-size:6.2px;color:#3c3c3c;-webkit-text-stroke:0.08px #3c3c3c;transform:scaleX(0.954);transform-origin:100% 0">144.955</div>
<div class="t" style="left:765.50px;top:214.64px;font-size:6.2px;color:#3c3c3c;-webkit-text-stroke:0.08px #3c3c3c;transform:scaleX(0.935);transform-origin:0 0">30<span style="margin:0 0.46px">/</span>0</div>
<div class="t" style="left:231.80px;width:40px;text-align:center;top:224.66px;font-size:6.2px;color:#3c3c3c;-webkit-text-stroke:0.08px #3c3c3c;transform:scaleX(0.933)">04<span style="margin:0 0.46px">/</span>06<span style="margin:0 0.46px">/</span>2025</div>
<div class="t" style="left:271.60px;width:40px;text-align:center;top:224.66px;font-size:6.2px;color:#3c3c3c;-webkit-text-stroke:0.08px #3c3c3c;transform:scaleX(0.803)">FACTURA</div>
<div class="t" style="left:316.20px;width:56px;text-align:center;top:224.66px;font-size:6.2px;color:#3c3c3c;-webkit-text-stroke:0.08px #3c3c3c;transform:scaleX(0.891)">0000FVE13490</div>
<div class="t" style="left:374.30px;top:224.66px;font-size:6.2px;color:#3c3c3c;-webkit-text-stroke:0.08px #3c3c3c;transform:scaleX(0.811);transform-origin:0 0">OTROS CUENTAS POR PAGAR</div>
<div class="t" style="left:563.20px;top:224.66px;font-size:6.2px;color:#3c3c3c;-webkit-text-stroke:0.08px #3c3c3c;transform:scaleX(0.933);transform-origin:0 0">31<span style="margin:0 0.46px">/</span>05<span style="margin:0 0.46px">/</span>2025</div>
<div class="t" style="left:611.00px;width:50px;text-align:right;top:224.66px;font-size:6.2px;color:#3c3c3c;-webkit-text-stroke:0.08px #3c3c3c;transform:scaleX(0.954);transform-origin:100% 0">848.649</div>
<div class="t" style="left:712.00px;width:50px;text-align:right;top:224.66px;font-size:6.2px;color:#3c3c3c;-webkit-text-stroke:0.08px #3c3c3c;transform:scaleX(0.954);transform-origin:100% 0">848.649</div>
<div class="t" style="left:765.50px;top:224.66px;font-size:6.2px;color:#3c3c3c;-webkit-text-stroke:0.08px #3c3c3c;transform:scaleX(0.935);transform-origin:0 0">30<span style="margin:0 0.46px">/</span>0</div>
<div class="t" style="left:231.80px;width:40px;text-align:center;top:234.68px;font-size:6.2px;color:#3440b0;-webkit-text-stroke:0.14px #3440b0;transform:scaleX(0.933)">25<span style="margin:0 0.46px">/</span>04<span style="margin:0 0.46px">/</span>2025</div>
<div class="t" style="left:271.60px;width:40px;text-align:center;top:234.68px;font-size:6.2px;color:#3440b0;-webkit-text-stroke:0.14px #3440b0;transform:scaleX(0.817)">FAP</div>
<div class="t" style="left:316.20px;width:56px;text-align:center;top:234.68px;font-size:6.2px;color:#3440b0;-webkit-text-stroke:0.14px #3440b0;transform:scaleX(0.929)">000300015767</div>
<div class="t" style="left:374.30px;top:234.68px;font-size:6.2px;color:#3440b0;-webkit-text-stroke:0.14px #3440b0;transform:scaleX(0.811);transform-origin:0 0">OTROS CUENTAS POR PAGAR</div>
<div class="t" style="left:563.20px;top:234.68px;font-size:6.2px;color:#3440b0;-webkit-text-stroke:0.14px #3440b0;transform:scaleX(0.933);transform-origin:0 0">25<span style="margin:0 0.46px">/</span>04<span style="margin:0 0.46px">/</span>2025</div>
<div class="t" style="left:611.00px;width:50px;text-align:right;top:234.68px;font-size:6.2px;color:#3440b0;-webkit-text-stroke:0.14px #3440b0;transform:scaleX(0.970);transform-origin:100% 0">-2.848.136</div>
<div class="t" style="left:712.00px;width:50px;text-align:right;top:234.68px;font-size:6.2px;color:#3440b0;-webkit-text-stroke:0.14px #3440b0;transform:scaleX(0.970);transform-origin:100% 0">-2.848.136</div>
<div class="t" style="left:765.50px;top:234.68px;font-size:6.2px;color:#3440b0;-webkit-text-stroke:0.14px #3440b0;transform:scaleX(0.935);transform-origin:0 0">09<span style="margin:0 0.46px">/</span>0</div>
<div class="t" style="left:231.80px;width:40px;text-align:center;top:244.70px;font-size:6.2px;color:#3440b0;-webkit-text-stroke:0.14px #3440b0;transform:scaleX(0.933)">13<span style="margin:0 0.46px">/</span>06<span style="margin:0 0.46px">/</span>2025</div>
<div class="t" style="left:271.60px;width:40px;text-align:center;top:244.70px;font-size:6.2px;color:#3440b0;-webkit-text-stroke:0.14px #3440b0;transform:scaleX(0.817)">FAP</div>
<div class="t" style="left:316.20px;width:56px;text-align:center;top:244.70px;font-size:6.2px;color:#3440b0;-webkit-text-stroke:0.14px #3440b0;transform:scaleX(0.929)">000300016162</div>
<div class="t" style="left:374.30px;top:244.70px;font-size:6.2px;color:#3440b0;-webkit-text-stroke:0.14px #3440b0;transform:scaleX(0.811);transform-origin:0 0">OTROS CUENTAS POR PAGAR</div>
<div class="t" style="left:563.20px;top:244.70px;font-size:6.2px;color:#3440b0;-webkit-text-stroke:0.14px #3440b0;transform:scaleX(0.933);transform-origin:0 0">13<span style="margin:0 0.46px">/</span>06<span style="margin:0 0.46px">/</span>2025</div>
<div class="t" style="left:611.00px;width:50px;text-align:right;top:244.70px;font-size:6.2px;color:#3440b0;-webkit-text-stroke:0.14px #3440b0;transform:scaleX(0.955);transform-origin:100% 0">-360.499</div>
<div class="t" style="left:663.00px;width:50px;text-align:right;top:244.70px;font-size:6.2px;color:#3440b0;-webkit-text-stroke:0.14px #3440b0;transform:scaleX(0.966);transform-origin:100% 0">26.636.877</div>
<div class="t" style="left:712.00px;width:50px;text-align:right;top:244.70px;font-size:6.2px;color:#3440b0;-webkit-text-stroke:0.14px #3440b0;transform:scaleX(0.955);transform-origin:100% 0">-360.499</div>
<div class="t" style="left:765.50px;top:244.70px;font-size:6.2px;color:#3440b0;-webkit-text-stroke:0.14px #3440b0;transform:scaleX(0.935);transform-origin:0 0">28<span style="margin:0 0.46px">/</span>0</div>
<div class="t" style="left:231.80px;width:40px;text-align:center;top:254.72px;font-size:6.2px;color:#3c3c3c;-webkit-text-stroke:0.08px #3c3c3c;transform:scaleX(0.933)">12<span style="margin:0 0.46px">/</span>05<span style="margin:0 0.46px">/</span>2025</div>
<div class="t" style="left:271.60px;width:40px;text-align:center;top:254.72px;font-size:6.2px;color:#3c3c3c;-webkit-text-stroke:0.08px #3c3c3c;transform:scaleX(0.803)">FACTURA</div>
<div class="t" style="left:316.20px;width:56px;text-align:center;top:254.72px;font-size:6.2px;color:#3c3c3c;-webkit-text-stroke:0.08px #3c3c3c;transform:scaleX(0.890)">000000ARK531</div>
<div class="t" style="left:374.30px;top:254.72px;font-size:6.2px;color:#3c3c3c;-webkit-text-stroke:0.08px #3c3c3c;transform:scaleX(0.811);transform-origin:0 0">OTROS CUENTAS POR PAGAR</div>
<div class="t" style="left:563.20px;top:254.72px;font-size:6.2px;color:#3c3c3c;-webkit-text-stroke:0.08px #3c3c3c;transform:scaleX(0.933);transform-origin:0 0">09<span style="margin:0 0.46px">/</span>05<span style="margin:0 0.46px">/</span>2025</div>
<div class="t" style="left:611.00px;width:50px;text-align:right;top:254.72px;font-size:6.2px;color:#3c3c3c;-webkit-text-stroke:0.08px #3c3c3c;transform:scaleX(0.970);transform-origin:100% 0">3.040.876</div>
<div class="t" style="left:663.00px;width:50px;text-align:right;top:254.72px;font-size:6.2px;color:#3c3c3c;-webkit-text-stroke:0.08px #3c3c3c;transform:scaleX(0.970);transform-origin:100% 0">3.040.876</div>
<div class="t" style="left:712.00px;width:50px;text-align:right;top:254.72px;font-size:6.2px;color:#3c3c3c;-webkit-text-stroke:0.08px #3c3c3c;transform:scaleX(0.970);transform-origin:100% 0">3.040.876</div>
<div class="t" style="left:765.50px;top:254.72px;font-size:6.2px;color:#3c3c3c;-webkit-text-stroke:0.08px #3c3c3c;transform:scaleX(0.935);transform-origin:0 0">23<span style="margin:0 0.46px">/</span>0</div>
<div class="t" style="left:231.80px;width:40px;text-align:center;top:264.74px;font-size:6.2px;color:#3c3c3c;-webkit-text-stroke:0.08px #3c3c3c;transform:scaleX(0.933)">23<span style="margin:0 0.46px">/</span>05<span style="margin:0 0.46px">/</span>2025</div>
<div class="t" style="left:271.60px;width:40px;text-align:center;top:264.74px;font-size:6.2px;color:#3c3c3c;-webkit-text-stroke:0.08px #3c3c3c;transform:scaleX(0.803)">FACTURA</div>
<div class="t" style="left:316.20px;width:56px;text-align:center;top:264.74px;font-size:6.2px;color:#3c3c3c;-webkit-text-stroke:0.08px #3c3c3c;transform:scaleX(0.888)">0000ATJM1208</div>
<div class="t" style="left:374.30px;top:264.74px;font-size:6.2px;color:#3c3c3c;-webkit-text-stroke:0.08px #3c3c3c;transform:scaleX(0.811);transform-origin:0 0">OTROS CUENTAS POR PAGAR</div>
<div class="t" style="left:563.20px;top:264.74px;font-size:6.2px;color:#3c3c3c;-webkit-text-stroke:0.08px #3c3c3c;transform:scaleX(0.933);transform-origin:0 0">20<span style="margin:0 0.46px">/</span>05<span style="margin:0 0.46px">/</span>2025</div>
<div class="t" style="left:611.00px;width:50px;text-align:right;top:264.74px;font-size:6.2px;color:#3c3c3c;-webkit-text-stroke:0.08px #3c3c3c;transform:scaleX(0.966);transform-origin:100% 0">19.738.758</div>
<div class="t" style="left:712.00px;width:50px;text-align:right;top:264.74px;font-size:6.2px;color:#3c3c3c;-webkit-text-stroke:0.08px #3c3c3c;transform:scaleX(0.966);transform-origin:100% 0">19.738.758</div>
<div class="t" style="left:765.50px;top:264.74px;font-size:6.2px;color:#3c3c3c;-webkit-text-stroke:0.08px #3c3c3c;transform:scaleX(0.935);transform-origin:0 0">19<span style="margin:0 0.46px">/</span>0</div>
<div class="t" style="left:231.80px;width:40px;text-align:center;top:274.76px;font-size:6.2px;color:#3440b0;-webkit-text-stroke:0.14px #3440b0;transform:scaleX(0.933)">13<span style="margin:0 0.46px">/</span>06<span style="margin:0 0.46px">/</span>2025</div>
<div class="t" style="left:271.60px;width:40px;text-align:center;top:274.76px;font-size:6.2px;color:#3440b0;-webkit-text-stroke:0.14px #3440b0;transform:scaleX(0.817)">FAP</div>
<div class="t" style="left:316.20px;width:56px;text-align:center;top:274.76px;font-size:6.2px;color:#3440b0;-webkit-text-stroke:0.14px #3440b0;transform:scaleX(0.929)">000300016163</div>
<div class="t" style="left:374.30px;top:274.76px;font-size:6.2px;color:#3440b0;-webkit-text-stroke:0.14px #3440b0;transform:scaleX(0.811);transform-origin:0 0">OTROS CUENTAS POR PAGAR</div>
<div class="t" style="left:563.20px;top:274.76px;font-size:6.2px;color:#3440b0;-webkit-text-stroke:0.14px #3440b0;transform:scaleX(0.933);transform-origin:0 0">13<span style="margin:0 0.46px">/</span>06<span style="margin:0 0.46px">/</span>2025</div>
<div class="t" style="left:611.00px;width:50px;text-align:right;top:274.76px;font-size:6.2px;color:#3440b0;-webkit-text-stroke:0.14px #3440b0;transform:scaleX(0.970);transform-origin:100% 0">-3.350.802</div>
<div class="t" style="left:663.00px;width:50px;text-align:right;top:274.76px;font-size:6.2px;color:#3440b0;-webkit-text-stroke:0.14px #3440b0;transform:scaleX(0.966);transform-origin:100% 0">16.387.956</div>
<div class="t" style="left:712.00px;width:50px;text-align:right;top:274.76px;font-size:6.2px;color:#3440b0;-webkit-text-stroke:0.14px #3440b0;transform:scaleX(0.970);transform-origin:100% 0">-3.350.802</div>
<div class="t" style="left:765.50px;top:274.76px;font-size:6.2px;color:#3440b0;-webkit-text-stroke:0.14px #3440b0;transform:scaleX(0.935);transform-origin:0 0">12<span style="margin:0 0.46px">/</span>0</div>
<div class="t" style="left:231.80px;width:40px;text-align:center;top:284.77px;font-size:6.2px;color:#3c3c3c;-webkit-text-stroke:0.08px #3c3c3c;transform:scaleX(0.933)">13<span style="margin:0 0.46px">/</span>06<span style="margin:0 0.46px">/</span>2025</div>
<div class="t" style="left:271.60px;width:40px;text-align:center;top:284.77px;font-size:6.2px;color:#3c3c3c;-webkit-text-stroke:0.08px #3c3c3c;transform:scaleX(0.803)">FACTURA</div>
<div class="t" style="left:316.20px;width:56px;text-align:center;top:284.77px;font-size:6.2px;color:#3c3c3c;-webkit-text-stroke:0.08px #3c3c3c;transform:scaleX(0.891)">00000SPT9376</div>
<div class="t" style="left:374.30px;top:284.77px;font-size:6.2px;color:#3c3c3c;-webkit-text-stroke:0.08px #3c3c3c;transform:scaleX(0.811);transform-origin:0 0">OTROS CUENTAS POR PAGAR</div>
<div class="t" style="left:563.20px;top:284.77px;font-size:6.2px;color:#3c3c3c;-webkit-text-stroke:0.08px #3c3c3c;transform:scaleX(0.947);transform-origin:0 0">11<span style="margin:0 0.46px">/</span>06<span style="margin:0 0.46px">/</span>2025</div>
<div class="t" style="left:611.00px;width:50px;text-align:right;top:284.77px;font-size:6.2px;color:#3c3c3c;-webkit-text-stroke:0.08px #3c3c3c;transform:scaleX(0.970);transform-origin:100% 0">1.467.039</div>
<div class="t" style="left:712.00px;width:50px;text-align:right;top:284.77px;font-size:6.2px;color:#3c3c3c;-webkit-text-stroke:0.08px #3c3c3c;transform:scaleX(0.970);transform-origin:100% 0">1.467.039</div>
<div class="t" style="left:765.50px;top:284.77px;font-size:6.2px;color:#3c3c3c;-webkit-text-stroke:0.08px #3c3c3c;transform:scaleX(0.972);transform-origin:0 0">11<span style="margin:0 0.46px">/</span>0</div>
<div class="t" style="left:231.80px;width:40px;text-align:center;top:294.79px;font-size:6.2px;color:#3c3c3c;-webkit-text-stroke:0.08px #3c3c3c;transform:scaleX(0.933)">13<span style="margin:0 0.46px">/</span>06<span style="margin:0 0.46px">/</span>2025</div>
<div class="t" style="left:271.60px;width:40px;text-align:center;top:294.79px;font-size:6.2px;color:#3c3c3c;-webkit-text-stroke:0.08px #3c3c3c;transform:scaleX(0.803)">FACTURA</div>
<div class="t" style="left:316.20px;width:56px;text-align:center;top:294.79px;font-size:6.2px;color:#3c3c3c;-webkit-text-stroke:0.08px #3c3c3c;transform:scaleX(0.891)">00000SPT9377</div>
<div class="t" style="left:374.30px;top:294.79px;font-size:6.2px;color:#3c3c3c;-webkit-text-stroke:0.08px #3c3c3c;transform:scaleX(0.811);transform-origin:0 0">OTROS CUENTAS POR PAGAR</div>
<div class="t" style="left:563.20px;top:294.79px;font-size:6.2px;color:#3c3c3c;-webkit-text-stroke:0.08px #3c3c3c;transform:scaleX(0.947);transform-origin:0 0">11<span style="margin:0 0.46px">/</span>06<span style="margin:0 0.46px">/</span>2025</div>
<div class="t" style="left:611.00px;width:50px;text-align:right;top:294.79px;font-size:6.2px;color:#3c3c3c;-webkit-text-stroke:0.08px #3c3c3c;transform:scaleX(0.987);transform-origin:100% 0">2.652.011</div>
<div class="t" style="left:712.00px;width:50px;text-align:right;top:294.79px;font-size:6.2px;color:#3c3c3c;-webkit-text-stroke:0.08px #3c3c3c;transform:scaleX(0.987);transform-origin:100% 0">2.652.011</div>
<div class="t" style="left:765.50px;top:294.79px;font-size:6.2px;color:#3c3c3c;-webkit-text-stroke:0.08px #3c3c3c;transform:scaleX(0.972);transform-origin:0 0">11<span style="margin:0 0.46px">/</span>0</div>
<div class="t" style="left:231.80px;width:40px;text-align:center;top:304.81px;font-size:6.2px;color:#3c3c3c;-webkit-text-stroke:0.08px #3c3c3c;transform:scaleX(0.933)">13<span style="margin:0 0.46px">/</span>06<span style="margin:0 0.46px">/</span>2025</div>
<div class="t" style="left:271.60px;width:40px;text-align:center;top:304.81px;font-size:6.2px;color:#3c3c3c;-webkit-text-stroke:0.08px #3c3c3c;transform:scaleX(0.803)">FACTURA</div>
<div class="t" style="left:316.20px;width:56px;text-align:center;top:304.81px;font-size:6.2px;color:#3c3c3c;-webkit-text-stroke:0.08px #3c3c3c;transform:scaleX(0.891)">00000SPT9378</div>
<div class="t" style="left:374.30px;top:304.81px;font-size:6.2px;color:#3c3c3c;-webkit-text-stroke:0.08px #3c3c3c;transform:scaleX(0.811);transform-origin:0 0">OTROS CUENTAS POR PAGAR</div>
<div class="t" style="left:563.20px;top:304.81px;font-size:6.2px;color:#3c3c3c;-webkit-text-stroke:0.08px #3c3c3c;transform:scaleX(0.947);transform-origin:0 0">11<span style="margin:0 0.46px">/</span>06<span style="margin:0 0.46px">/</span>2025</div>
<div class="t" style="left:611.00px;width:50px;text-align:right;top:304.81px;font-size:6.2px;color:#3c3c3c;-webkit-text-stroke:0.08px #3c3c3c;transform:scaleX(0.987);transform-origin:100% 0">2.652.011</div>
<div class="t" style="left:663.00px;width:50px;text-align:right;top:304.81px;font-size:6.2px;color:#3c3c3c;-webkit-text-stroke:0.08px #3c3c3c;transform:scaleX(0.970);transform-origin:100% 0">6.771.061</div>
<div class="t" style="left:712.00px;width:50px;text-align:right;top:304.81px;font-size:6.2px;color:#3c3c3c;-webkit-text-stroke:0.08px #3c3c3c;transform:scaleX(0.987);transform-origin:100% 0">2.652.011</div>
<div class="t" style="left:765.50px;top:304.81px;font-size:6.2px;color:#3c3c3c;-webkit-text-stroke:0.08px #3c3c3c;transform:scaleX(0.972);transform-origin:0 0">11<span style="margin:0 0.46px">/</span>0</div>
<div class="t" style="left:231.80px;width:40px;text-align:center;top:314.83px;font-size:6.2px;color:#3c3c3c;-webkit-text-stroke:0.08px #3c3c3c;transform:scaleX(0.933)">20<span style="margin:0 0.46px">/</span>05<span style="margin:0 0.46px">/</span>2025</div>
<div class="t" style="left:271.60px;width:40px;text-align:center;top:314.83px;font-size:6.2px;color:#3c3c3c;-webkit-text-stroke:0.08px #3c3c3c;transform:scaleX(0.803)">FACTURA</div>
<div class="t" style="left:316.20px;width:56px;text-align:center;top:314.83px;font-size:6.2px;color:#3c3c3c;-webkit-text-stroke:0.08px #3c3c3c;transform:scaleX(0.904)">00000FE01949</div>
<div class="t" style="left:374.30px;top:314.83px;font-size:6.2px;color:#3c3c3c;-webkit-text-stroke:0.08px #3c3c3c;transform:scaleX(0.804);transform-origin:0 0">CRUCE FACTURAS VOLUMENES CON COMPROBANTE DE EGRESO</div>
<div class="t" style="left:563.20px;top:314.83px;font-size:6.2px;color:#3c3c3c;-webkit-text-stroke:0.08px #3c3c3c;transform:scaleX(0.933);transform-origin:0 0">19<span style="margin:0 0.46px">/</span>05<span style="margin:0 0.46px">/</span>2025</div>
<div class="t" style="left:611.00px;width:50px;text-align:right;top:314.83px;font-size:6.2px;color:#3c3c3c;-webkit-text-stroke:0.08px #3c3c3c;transform:scaleX(0.966);transform-origin:100% 0">28.053.149</div>
<div class="t" style="left:712.00px;width:50px;text-align:right;top:314.83px;font-size:6.2px;color:#3c3c3c;-webkit-text-stroke:0.08px #3c3c3c;transform:scaleX(0.966);transform-origin:100% 0">28.053.149</div>
<div class="t" style="left:765.50px;top:314.83px;font-size:6.2px;color:#3c3c3c;-webkit-text-stroke:0.08px #3c3c3c;transform:scaleX(0.935);transform-origin:0 0">03<span style="margin:0 0.46px">/</span>0</div>
<div class="t" style="left:231.80px;width:40px;text-align:center;top:324.85px;font-size:6.2px;color:#3c3c3c;-webkit-text-stroke:0.08px #3c3c3c;transform:scaleX(0.933)">21<span style="margin:0 0.46px">/</span>05<span style="margin:0 0.46px">/</span>2025</div>
<div class="t" style="left:271.60px;width:40px;text-align:center;top:324.85px;font-size:6.2px;color:#3c3c3c;-webkit-text-stroke:0.08px #3c3c3c;transform:scaleX(0.803)">FACTURA</div>
<div class="t" style="left:316.20px;width:56px;text-align:center;top:324.85px;font-size:6.2px;color:#3c3c3c;-webkit-text-stroke:0.08px #3c3c3c;transform:scaleX(0.904)">00000FE01963</div>
<div class="t" style="left:374.30px;top:324.85px;font-size:6.2px;color:#3c3c3c;-webkit-text-stroke:0.08px #3c3c3c;transform:scaleX(0.804);transform-origin:0 0">CRUCE FACTURAS VOLUMENES CON COMPROBANTE DE EGRESO</div>
<div class="t" style="left:563.20px;top:324.85px;font-size:6.2px;color:#3c3c3c;-webkit-text-stroke:0.08px #3c3c3c;transform:scaleX(0.933);transform-origin:0 0">20<span style="margin:0 0.46px">/</span>05<span style="margin:0 0.46px">/</span>2025</div>
<div class="t" style="left:611.00px;width:50px;text-align:right;top:324.85px;font-size:6.2px;color:#3c3c3c;-webkit-text-stroke:0.08px #3c3c3c;transform:scaleX(0.954);transform-origin:100% 0">519.838</div>
<div class="t" style="left:712.00px;width:50px;text-align:right;top:324.85px;font-size:6.2px;color:#3c3c3c;-webkit-text-stroke:0.08px #3c3c3c;transform:scaleX(0.954);transform-origin:100% 0">519.838</div>
<div class="t" style="left:765.50px;top:324.85px;font-size:6.2px;color:#3c3c3c;-webkit-text-stroke:0.08px #3c3c3c;transform:scaleX(0.935);transform-origin:0 0">04<span style="margin:0 0.46px">/</span>0</div>
<div class="t" style="left:231.80px;width:40px;text-align:center;top:334.87px;font-size:6.2px;color:#3c3c3c;-webkit-text-stroke:0.08px #3c3c3c;transform:scaleX(0.933)">21<span style="margin:0 0.46px">/</span>05<span style="margin:0 0.46px">/</span>2025</div>
<div class="t" style="left:271.60px;width:40px;text-align:center;top:334.87px;font-size:6.2px;color:#3c3c3c;-webkit-text-stroke:0.08px #3c3c3c;transform:scaleX(0.803)">FACTURA</div>
<div class="t" style="left:316.20px;width:56px;text-align:center;top:334.87px;font-size:6.2px;color:#3c3c3c;-webkit-text-stroke:0.08px #3c3c3c;transform:scaleX(0.904)">00000FE01968</div>
<div class="t" style="left:374.30px;top:334.87px;font-size:6.2px;color:#3c3c3c;-webkit-text-stroke:0.08px #3c3c3c;transform:scaleX(0.804);transform-origin:0 0">CRUCE FACTURAS VOLUMENES CON COMPROBANTE DE EGRESO</div>
<div class="t" style="left:563.20px;top:334.87px;font-size:6.2px;color:#3c3c3c;-webkit-text-stroke:0.08px #3c3c3c;transform:scaleX(0.933);transform-origin:0 0">21<span style="margin:0 0.46px">/</span>05<span style="margin:0 0.46px">/</span>2025</div>
<div class="t" style="left:611.00px;width:50px;text-align:right;top:334.87px;font-size:6.2px;color:#3c3c3c;-webkit-text-stroke:0.08px #3c3c3c;transform:scaleX(0.959);transform-origin:100% 0">68.219</div>
<div class="t" style="left:712.00px;width:50px;text-align:right;top:334.87px;font-size:6.2px;color:#3c3c3c;-webkit-text-stroke:0.08px #3c3c3c;transform:scaleX(0.959);transform-origin:100% 0">68.219</div>
<div class="t" style="left:765.50px;top:334.87px;font-size:6.2px;color:#3c3c3c;-webkit-text-stroke:0.08px #3c3c3c;transform:scaleX(0.935);transform-origin:0 0">05<span style="margin:0 0.46px">/</span>0</div>
<div class="t" style="left:231.80px;width:40px;text-align:center;top:344.89px;font-size:6.2px;color:#3c3c3c;-webkit-text-stroke:0.08px #3c3c3c;transform:scaleX(0.933)">22<span style="margin:0 0.46px">/</span>05<span style="margin:0 0.46px">/</span>2025</div>
<div class="t" style="left:271.60px;width:40px;text-align:center;top:344.89px;font-size:6.2px;color:#3c3c3c;-webkit-text-stroke:0.08px #3c3c3c;transform:scaleX(0.803)">FACTURA</div>
<div class="t" style="left:316.20px;width:56px;text-align:center;top:344.89px;font-size:6.2px;color:#3c3c3c;-webkit-text-stroke:0.08px #3c3c3c;transform:scaleX(0.904)">00000FE01978</div>
<div class="t" style="left:374.30px;top:344.89px;font-size:6.2px;color:#3c3c3c;-webkit-text-stroke:0.08px #3c3c3c;transform:scaleX(0.804);transform-origin:0 0">CRUCE FACTURAS VOLUMENES CON COMPROBANTE DE EGRESO</div>
<div class="t" style="left:563.20px;top:344.89px;font-size:6.2px;color:#3c3c3c;-webkit-text-stroke:0.08px #3c3c3c;transform:scaleX(0.933);transform-origin:0 0">22<span style="margin:0 0.46px">/</span>05<span style="margin:0 0.46px">/</span>2025</div>
<div class="t" style="left:611.00px;width:50px;text-align:right;top:344.89px;font-size:6.2px;color:#3c3c3c;-webkit-text-stroke:0.08px #3c3c3c;transform:scaleX(0.970);transform-origin:100% 0">9.135.464</div>
<div class="t" style="left:663.00px;width:50px;text-align:right;top:344.89px;font-size:6.2px;color:#3c3c3c;-webkit-text-stroke:0.08px #3c3c3c;transform:scaleX(0.966);transform-origin:100% 0">37.776.670</div>
<div class="t" style="left:712.00px;width:50px;text-align:right;top:344.89px;font-size:6.2px;color:#3c3c3c;-webkit-text-stroke:0.08px #3c3c3c;transform:scaleX(0.970);transform-origin:100% 0">9.135.464</div>
<div class="t" style="left:765.50px;top:344.89px;font-size:6.2px;color:#3c3c3c;-webkit-text-stroke:0.08px #3c3c3c;transform:scaleX(0.935);transform-origin:0 0">06<span style="margin:0 0.46px">/</span>0</div>
<div class="t" style="left:231.80px;width:40px;text-align:center;top:354.91px;font-size:6.2px;color:#3c3c3c;-webkit-text-stroke:0.08px #3c3c3c;transform:scaleX(0.933)">20<span style="margin:0 0.46px">/</span>05<span style="margin:0 0.46px">/</span>2025</div>
<div class="t" style="left:271.60px;width:40px;text-align:center;top:354.91px;font-size:6.2px;color:#3c3c3c;-webkit-text-stroke:0.08px #3c3c3c;transform:scaleX(0.803)">FACTURA</div>
<div class="t" style="left:316.20px;width:56px;text-align:center;top:354.91px;font-size:6.2px;color:#3c3c3c;-webkit-text-stroke:0.08px #3c3c3c;transform:scaleX(0.929)">005001495215</div>
<div class="t" style="left:374.30px;top:354.91px;font-size:6.2px;color:#3c3c3c;-webkit-text-stroke:0.08px #3c3c3c;transform:scaleX(0.811);transform-origin:0 0">OTROS CUENTAS POR PAGAR</div>
<div class="t" style="left:563.20px;top:354.91px;font-size:6.2px;color:#3c3c3c;-webkit-text-stroke:0.08px #3c3c3c;transform:scaleX(0.933);transform-origin:0 0">16<span style="margin:0 0.46px">/</span>05<span style="margin:0 0.46px">/</span>2025</div>
<div class="t" style="left:611.00px;width:50px;text-align:right;top:354.91px;font-size:6.2px;color:#3c3c3c;-webkit-text-stroke:0.08px #3c3c3c;transform:scaleX(0.970);transform-origin:100% 0">1.056.787</div>
<div class="t" style="left:712.00px;width:50px;text-align:right;top:354.91px;font-size:6.2px;color:#3c3c3c;-webkit-text-stroke:0.08px #3c3c3c;transform:scaleX(0.970);transform-origin:100% 0">1.056.787</div>
<div class="t" style="left:765.50px;top:354.91px;font-size:6.2px;color:#3c3c3c;-webkit-text-stroke:0.08px #3c3c3c;transform:scaleX(0.935);transform-origin:0 0">15<span style="margin:0 0.46px">/</span>0</div>
<div class="t" style="left:231.80px;width:40px;text-align:center;top:364.93px;font-size:6.2px;color:#3c3c3c;-webkit-text-stroke:0.08px #3c3c3c;transform:scaleX(0.933)">20<span style="margin:0 0.46px">/</span>05<span style="margin:0 0.46px">/</span>2025</div>
<div class="t" style="left:271.60px;width:40px;text-align:center;top:364.93px;font-size:6.2px;color:#3c3c3c;-webkit-text-stroke:0.08px #3c3c3c;transform:scaleX(0.803)">FACTURA</div>
<div class="t" style="left:316.20px;width:56px;text-align:center;top:364.93px;font-size:6.2px;color:#3c3c3c;-webkit-text-stroke:0.08px #3c3c3c;transform:scaleX(0.929)">005001495216</div>
<div class="t" style="left:374.30px;top:364.93px;font-size:6.2px;color:#3c3c3c;-webkit-text-stroke:0.08px #3c3c3c;transform:scaleX(0.811);transform-origin:0 0">OTROS CUENTAS POR PAGAR</div>
<div class="t" style="left:563.20px;top:364.93px;font-size:6.2px;color:#3c3c3c;-webkit-text-stroke:0.08px #3c3c3c;transform:scaleX(0.933);transform-origin:0 0">16<span style="margin:0 0.46px">/</span>05<span style="margin:0 0.46px">/</span>2025</div>
<div class="t" style="left:611.00px;width:50px;text-align:right;top:364.93px;font-size:6.2px;color:#3c3c3c;-webkit-text-stroke:0.08px #3c3c3c;transform:scaleX(0.970);transform-origin:100% 0">1.191.432</div>
<div class="t" style="left:712.00px;width:50px;text-align:right;top:364.93px;font-size:6.2px;color:#3c3c3c;-webkit-text-stroke:0.08px #3c3c3c;transform:scaleX(0.970);transform-origin:100% 0">1.191.432</div>
<div class="t" style="left:765.50px;top:364.93px;font-size:6.2px;color:#3c3c3c;-webkit-text-stroke:0.08px #3c3c3c;transform:scaleX(0.935);transform-origin:0 0">15<span style="margin:0 0.46px">/</span>0</div>
<div class="t" style="left:231.80px;width:40px;text-align:center;top:374.94px;font-size:6.2px;color:#3c3c3c;-webkit-text-stroke:0.08px #3c3c3c;transform:scaleX(0.933)">20<span style="margin:0 0.46px">/</span>05<span style="margin:0 0.46px">/</span>2025</div>
<div class="t" style="left:271.60px;width:40px;text-align:center;top:374.94px;font-size:6.2px;color:#3c3c3c;-webkit-text-stroke:0.08px #3c3c3c;transform:scaleX(0.803)">FACTURA</div>
<div class="t" style="left:316.20px;width:56px;text-align:center;top:374.94px;font-size:6.2px;color:#3c3c3c;-webkit-text-stroke:0.08px #3c3c3c;transform:scaleX(0.929)">005001495217</div>
<div class="t" style="left:374.30px;top:374.94px;font-size:6.2px;color:#3c3c3c;-webkit-text-stroke:0.08px #3c3c3c;transform:scaleX(0.811);transform-origin:0 0">OTROS CUENTAS POR PAGAR</div>
<div class="t" style="left:563.20px;top:374.94px;font-size:6.2px;color:#3c3c3c;-webkit-text-stroke:0.08px #3c3c3c;transform:scaleX(0.933);transform-origin:0 0">16<span style="margin:0 0.46px">/</span>05<span style="margin:0 0.46px">/</span>2025</div>
<div class="t" style="left:611.00px;width:50px;text-align:right;top:374.94px;font-size:6.2px;color:#3c3c3c;-webkit-text-stroke:0.08px #3c3c3c;transform:scaleX(0.970);transform-origin:100% 0">2.918.332</div>
<div class="t" style="left:712.00px;width:50px;text-align:right;top:374.94px;font-size:6.2px;color:#3c3c3c;-webkit-text-stroke:0.08px #3c3c3c;transform:scaleX(0.970);transform-origin:100% 0">2.918.332</div>
<div class="t" style="left:765.50px;top:374.94px;font-size:6.2px;color:#3c3c3c;-webkit-text-stroke:0.08px #3c3c3c;transform:scaleX(0.935);transform-origin:0 0">15<span style="margin:0 0.46px">/</span>0</div>
<div class="t" style="left:231.80px;width:40px;text-align:center;top:384.96px;font-size:6.2px;color:#3c3c3c;-webkit-text-stroke:0.08px #3c3c3c;transform:scaleX(0.933)">20<span style="margin:0 0.46px">/</span>05<span style="margin:0 0.46px">/</span>2025</div>
<div class="t" style="left:271.60px;width:40px;text-align:center;top:384.96px;font-size:6.2px;color:#3c3c3c;-webkit-text-stroke:0.08px #3c3c3c;transform:scaleX(0.803)">FACTURA</div>
<div class="t" style="left:316.20px;width:56px;text-align:center;top:384.96px;font-size:6.2px;color:#3c3c3c;-webkit-text-stroke:0.08px #3c3c3c;transform:scaleX(0.929)">005001495218</div>
<div class="t" style="left:374.30px;top:384.96px;font-size:6.2px;color:#3c3c3c;-webkit-text-stroke:0.08px #3c3c3c;transform:scaleX(0.811);transform-origin:0 0">OTROS CUENTAS POR PAGAR</div>
<div class="t" style="left:563.20px;top:384.96px;font-size:6.2px;color:#3c3c3c;-webkit-text-stroke:0.08px #3c3c3c;transform:scaleX(0.933);transform-origin:0 0">16<span style="margin:0 0.46px">/</span>05<span style="margin:0 0.46px">/</span>2025</div>
<div class="t" style="left:611.00px;width:50px;text-align:right;top:384.96px;font-size:6.2px;color:#3c3c3c;-webkit-text-stroke:0.08px #3c3c3c;transform:scaleX(0.970);transform-origin:100% 0">1.410.835</div>
<div class="t" style="left:712.00px;width:50px;text-align:right;top:384.96px;font-size:6.2px;color:#3c3c3c;-webkit-text-stroke:0.08px #3c3c3c;transform:scaleX(0.970);transform-origin:100% 0">1.410.835</div>
<div class="t" style="left:765.50px;top:384.96px;font-size:6.2px;color:#3c3c3c;-webkit-text-stroke:0.08px #3c3c3c;transform:scaleX(0.935);transform-origin:0 0">15<span style="margin:0 0.46px">/</span>0</div>
<div class="t" style="left:231.80px;width:40px;text-align:center;top:394.98px;font-size:6.2px;color:#3c3c3c;-webkit-text-stroke:0.08px #3c3c3c;transform:scaleX(0.933)">20<span style="margin:0 0.46px">/</span>05<span style="margin:0 0.46px">/</span>2025</div>
<div class="t" style="left:271.60px;width:40px;text-align:center;top:394.98px;font-size:6.2px;color:#3c3c3c;-webkit-text-stroke:0.08px #3c3c3c;transform:scaleX(0.803)">FACTURA</div>
<div class="t" style="left:316.20px;width:56px;text-align:center;top:394.98px;font-size:6.2px;color:#3c3c3c;-webkit-text-stroke:0.08px #3c3c3c;transform:scaleX(0.929)">005001495219</div>
<div class="t" style="left:374.30px;top:394.98px;font-size:6.2px;color:#3c3c3c;-webkit-text-stroke:0.08px #3c3c3c;transform:scaleX(0.811);transform-origin:0 0">OTROS CUENTAS POR PAGAR</div>
<div class="t" style="left:563.20px;top:394.98px;font-size:6.2px;color:#3c3c3c;-webkit-text-stroke:0.08px #3c3c3c;transform:scaleX(0.933);transform-origin:0 0">16<span style="margin:0 0.46px">/</span>05<span style="margin:0 0.46px">/</span>2025</div>
<div class="t" style="left:611.00px;width:50px;text-align:right;top:394.98px;font-size:6.2px;color:#3c3c3c;-webkit-text-stroke:0.08px #3c3c3c;transform:scaleX(0.954);transform-origin:100% 0">534.949</div>
<div class="t" style="left:712.00px;width:50px;text-align:right;top:394.98px;font-size:6.2px;color:#3c3c3c;-webkit-text-stroke:0.08px #3c3c3c;transform:scaleX(0.954);transform-origin:100% 0">534.949</div>
<div class="t" style="left:765.50px;top:394.98px;font-size:6.2px;color:#3c3c3c;-webkit-text-stroke:0.08px #3c3c3c;transform:scaleX(0.935);transform-origin:0 0">15<span style="margin:0 0.46px">/</span>0</div>
<div class="t" style="left:231.80px;width:40px;text-align:center;top:405.00px;font-size:6.2px;color:#3c3c3c;-webkit-text-stroke:0.08px #3c3c3c;transform:scaleX(0.933)">20<span style="margin:0 0.46px">/</span>05<span style="margin:0 0.46px">/</span>2025</div>
<div class="t" style="left:271.60px;width:40px;text-align:center;top:405.00px;font-size:6.2px;color:#3c3c3c;-webkit-text-stroke:0.08px #3c3c3c;transform:scaleX(0.803)">FACTURA</div>
<div class="t" style="left:316.20px;width:56px;text-align:center;top:405.00px;font-size:6.2px;color:#3c3c3c;-webkit-text-stroke:0.08px #3c3c3c;transform:scaleX(0.929)">005001495220</div>
<div class="t" style="left:374.30px;top:405.00px;font-size:6.2px;color:#3c3c3c;-webkit-text-stroke:0.08px #3c3c3c;transform:scaleX(0.811);transform-origin:0 0">OTROS CUENTAS POR PAGAR</div>
<div class="t" style="left:563.20px;top:405.00px;font-size:6.2px;color:#3c3c3c;-webkit-text-stroke:0.08px #3c3c3c;transform:scaleX(0.933);transform-origin:0 0">16<span style="margin:0 0.46px">/</span>05<span style="margin:0 0.46px">/</span>2025</div>
<div class="t" style="left:611.00px;width:50px;text-align:right;top:405.00px;font-size:6.2px;color:#3c3c3c;-webkit-text-stroke:0.08px #3c3c3c;transform:scaleX(0.970);transform-origin:100% 0">2.471.330</div>
<div class="t" style="left:712.00px;width:50px;text-align:right;top:405.00px;font-size:6.2px;color:#3c3c3c;-webkit-text-stroke:0.08px #3c3c3c;transform:scaleX(0.970);transform-origin:100% 0">2.471.330</div>
<div class="t" style="left:765.50px;top:405.00px;font-size:6.2px;color:#3c3c3c;-webkit-text-stroke:0.08px #3c3c3c;transform:scaleX(0.935);transform-origin:0 0">15<span style="margin:0 0.46px">/</span>0</div>
</div>
<svg class="ab" style="left:222px;top:78.75px" width="7" height="7"><rect x="0.5" y="0.5" width="6" height="6" rx="0.6" fill="url(#cg)" stroke="#7496bb" stroke-width="0.95"/></svg>
<svg class="ab" style="left:222px;top:89.5px" width="7" height="7"><rect x="0.5" y="0.5" width="6" height="6" rx="0.6" fill="url(#cg)" stroke="#7496bb" stroke-width="0.95"/></svg>
<svg class="ab" style="left:222px;top:99.5px" width="7" height="7"><rect x="0.5" y="0.5" width="6" height="6" rx="0.6" fill="url(#cg)" stroke="#7496bb" stroke-width="0.95"/></svg>
<svg class="ab" style="left:222px;top:109.5px" width="7" height="7"><rect x="0.5" y="0.5" width="6" height="6" rx="0.6" fill="url(#cg)" stroke="#7496bb" stroke-width="0.95"/></svg>
<svg class="ab" style="left:222px;top:119.5px" width="7" height="7"><rect x="0.5" y="0.5" width="6" height="6" rx="0.6" fill="url(#cg)" stroke="#7496bb" stroke-width="0.95"/></svg>
<svg class="ab" style="left:222px;top:129.5px" width="7" height="7"><rect x="0.5" y="0.5" width="6" height="6" rx="0.6" fill="url(#cg)" stroke="#7496bb" stroke-width="0.95"/></svg>
<svg class="ab" style="left:222px;top:139.5px" width="7" height="7"><rect x="0.5" y="0.5" width="6" height="6" rx="0.6" fill="url(#cg)" stroke="#7496bb" stroke-width="0.95"/></svg>
<svg class="ab" style="left:222px;top:149.5px" width="7" height="7"><rect x="0.5" y="0.5" width="6" height="6" rx="0.6" fill="url(#cg)" stroke="#7496bb" stroke-width="0.95"/></svg>
<svg class="ab" style="left:222px;top:159.5px" width="7" height="7"><rect x="0.5" y="0.5" width="6" height="6" rx="0.6" fill="url(#cg)" stroke="#7496bb" stroke-width="0.95"/></svg>
<svg class="ab" style="left:222px;top:169.5px" width="7" height="7"><rect x="0.5" y="0.5" width="6" height="6" rx="0.6" fill="url(#cg)" stroke="#7496bb" stroke-width="0.95"/></svg>
<svg class="ab" style="left:222px;top:179.5px" width="7" height="7"><rect x="0.5" y="0.5" width="6" height="6" rx="0.6" fill="url(#cg)" stroke="#7496bb" stroke-width="0.95"/></svg>
<svg class="ab" style="left:222px;top:189.5px" width="7" height="7"><rect x="0.5" y="0.5" width="6" height="6" rx="0.6" fill="url(#cg)" stroke="#7496bb" stroke-width="0.95"/></svg>
<svg class="ab" style="left:222px;top:199.5px" width="7" height="7"><rect x="0.5" y="0.5" width="6" height="6" rx="0.6" fill="url(#cg)" stroke="#7496bb" stroke-width="0.95"/></svg>
<svg class="ab" style="left:222px;top:209.5px" width="7" height="7"><rect x="0.5" y="0.5" width="6" height="6" rx="0.6" fill="url(#cg)" stroke="#7496bb" stroke-width="0.95"/></svg>
<svg class="ab" style="left:222px;top:219.5px" width="7" height="7"><rect x="0.5" y="0.5" width="6" height="6" rx="0.6" fill="url(#cg)" stroke="#7496bb" stroke-width="0.95"/></svg>
<svg class="ab" style="left:222px;top:229.5px" width="7" height="7"><rect x="0.5" y="0.5" width="6" height="6" rx="0.6" fill="url(#cg)" stroke="#7496bb" stroke-width="0.95"/></svg>
<svg class="ab" style="left:222px;top:239.5px" width="7" height="7"><rect x="0.5" y="0.5" width="6" height="6" rx="0.6" fill="url(#cg)" stroke="#7496bb" stroke-width="0.95"/></svg>
<svg class="ab" style="left:222px;top:249.5px" width="7" height="7"><rect x="0.5" y="0.5" width="6" height="6" rx="0.6" fill="url(#cg)" stroke="#7496bb" stroke-width="0.95"/></svg>
<svg class="ab" style="left:222px;top:259.5px" width="7" height="7"><rect x="0.5" y="0.5" width="6" height="6" rx="0.6" fill="url(#cg)" stroke="#7496bb" stroke-width="0.95"/></svg>
<svg class="ab" style="left:222px;top:269.5px" width="7" height="7"><rect x="0.5" y="0.5" width="6" height="6" rx="0.6" fill="url(#cg)" stroke="#7496bb" stroke-width="0.95"/></svg>
<svg class="ab" style="left:222px;top:279.5px" width="7" height="7"><rect x="0.5" y="0.5" width="6" height="6" rx="0.6" fill="url(#cg)" stroke="#7496bb" stroke-width="0.95"/></svg>
<svg class="ab" style="left:222px;top:289.5px" width="7" height="7"><rect x="0.5" y="0.5" width="6" height="6" rx="0.6" fill="url(#cg)" stroke="#7496bb" stroke-width="0.95"/></svg>
<svg class="ab" style="left:222px;top:299.5px" width="7" height="7"><rect x="0.5" y="0.5" width="6" height="6" rx="0.6" fill="url(#cg)" stroke="#7496bb" stroke-width="0.95"/></svg>
<svg class="ab" style="left:222px;top:309.5px" width="7" height="7"><rect x="0.5" y="0.5" width="6" height="6" rx="0.6" fill="url(#cg)" stroke="#7496bb" stroke-width="0.95"/></svg>
<svg class="ab" style="left:222px;top:319.5px" width="7" height="7"><rect x="0.5" y="0.5" width="6" height="6" rx="0.6" fill="url(#cg)" stroke="#7496bb" stroke-width="0.95"/></svg>
<svg class="ab" style="left:222px;top:329.5px" width="7" height="7"><rect x="0.5" y="0.5" width="6" height="6" rx="0.6" fill="url(#cg)" stroke="#7496bb" stroke-width="0.95"/></svg>
<svg class="ab" style="left:222px;top:339.5px" width="7" height="7"><rect x="0.5" y="0.5" width="6" height="6" rx="0.6" fill="url(#cg)" stroke="#7496bb" stroke-width="0.95"/></svg>
<svg class="ab" style="left:222px;top:349.5px" width="7" height="7"><rect x="0.5" y="0.5" width="6" height="6" rx="0.6" fill="url(#cg)" stroke="#7496bb" stroke-width="0.95"/></svg>
<svg class="ab" style="left:222px;top:359.5px" width="7" height="7"><rect x="0.5" y="0.5" width="6" height="6" rx="0.6" fill="url(#cg)" stroke="#7496bb" stroke-width="0.95"/></svg>
<svg class="ab" style="left:222px;top:369.5px" width="7" height="7"><rect x="0.5" y="0.5" width="6" height="6" rx="0.6" fill="url(#cg)" stroke="#7496bb" stroke-width="0.95"/></svg>
<svg class="ab" style="left:222px;top:379.5px" width="7" height="7"><rect x="0.5" y="0.5" width="6" height="6" rx="0.6" fill="url(#cg)" stroke="#7496bb" stroke-width="0.95"/></svg>
<svg class="ab" style="left:222px;top:389.5px" width="7" height="7"><rect x="0.5" y="0.5" width="6" height="6" rx="0.6" fill="url(#cg)" stroke="#7496bb" stroke-width="0.95"/></svg>
<svg class="ab" style="left:222px;top:399.5px" width="7" height="7"><rect x="0.5" y="0.5" width="6" height="6" rx="0.6" fill="url(#cg)" stroke="#7496bb" stroke-width="0.95"/></svg>
<svg class="ab" style="left:222px;top:409.5px" width="7" height="7"><rect x="0.5" y="0.5" width="6" height="6" rx="0.6" fill="url(#cg)" stroke="#7496bb" stroke-width="0.95"/></svg>
<svg class="ab" style="left:222px;top:419.5px" width="7" height="7"><rect x="0.5" y="0.5" width="6" height="6" rx="0.6" fill="url(#cg)" stroke="#7496bb" stroke-width="0.95"/></svg>
<svg class="ab" style="left:222px;top:429.5px" width="7" height="7"><rect x="0.5" y="0.5" width="6" height="6" rx="0.6" fill="url(#cg)" stroke="#7496bb" stroke-width="0.95"/></svg>
<svg class="ab" style="left:222px;top:439.5px" width="7" height="7"><rect x="0.5" y="0.5" width="6" height="6" rx="0.6" fill="url(#cg)" stroke="#7496bb" stroke-width="0.95"/></svg>
<svg class="ab" style="left:222px;top:449.5px" width="7" height="7"><rect x="0.5" y="0.5" width="6" height="6" rx="0.6" fill="url(#cg)" stroke="#7496bb" stroke-width="0.95"/></svg>
<svg class="ab" style="left:222px;top:459.5px" width="7" height="7"><rect x="0.5" y="0.5" width="6" height="6" rx="0.6" fill="url(#cg)" stroke="#7496bb" stroke-width="0.95"/></svg>
<svg class="ab" style="left:222px;top:469.5px" width="7" height="7"><rect x="0.5" y="0.5" width="6" height="6" rx="0.6" fill="url(#cg)" stroke="#7496bb" stroke-width="0.95"/></svg>
<svg class="ab" style="left:222px;top:479.5px" width="7" height="7"><rect x="0.5" y="0.5" width="6" height="6" rx="0.6" fill="url(#cg)" stroke="#7496bb" stroke-width="0.95"/></svg>
<div class="ab" style="left:211.3px;top:75.9px;width:29.4px;height:12.7px;border-style:solid;border-color:#141414;border-width:1.1px 1.7px 1.6px 1.1px"></div>
<div class="ab" style="left:989px;top:66.6px;width:8.5px;height:421.9px;background:#f4f4f4;"></div>
<div class="ab" style="left:989px;top:66.6px;width:8.5px;height:7.6px;background:#fafafa;border-bottom:1px solid #a0a0a0"></div>
<svg class="ab" style="left:990.3px;top:68.6px" width="6" height="4"><path d="M0.6 3.5 L5.4 3.5 L3 0.5 Z" fill="#111"/></svg>
<div class="ab" style="left:989px;top:74.5px;width:8.5px;height:11.5px;background:#ececec;border-bottom:1px solid #909090;border-right:1px solid #909090"></div>
<div class="ab" style="left:989px;top:480.5px;width:8.5px;height:8.5px;background:#fafafa;border-right:1.2px solid #808080;border-bottom:1.2px solid #808080"></div>
<svg class="ab" style="left:990.3px;top:483px" width="6" height="4"><path d="M0.6 0.5 L5.4 0.5 L3 3.5 Z" fill="#111"/></svg>
<div class="ab" style="left:997px;top:66px;width:1px;height:433px;background:#c2cad2;"></div>
<div class="ab" style="left:211.5px;top:488.5px;width:786px;height:9px;background:#f8f8f8;"></div>
<div class="ab" style="left:220px;top:488.5px;width:595px;height:8.6px;background:#efefef;"></div>
<div class="ab" style="left:814px;top:489px;width:1px;height:8.6px;background:#747474;"></div>
<div class="ab" style="left:212px;top:488.5px;width:8px;height:9px;background:#fafafa;border-right:1px solid #747474"></div>
<svg class="ab" style="left:213.2px;top:491.3px" width="4" height="5"><path d="M3.5 0.3 L3.5 4.7 L0.5 2.5 Z" fill="#111"/></svg>
<div class="ab" style="left:980px;top:488.5px;width:9px;height:8.5px;background:#fafafa;border-right:1.2px solid #808080;border-bottom:1px solid #909090"></div>
<svg class="ab" style="left:983.5px;top:491.5px" width="4" height="5"><path d="M0.5 0.3 L0.5 4.7 L3.5 2.5 Z" fill="#111"/></svg>
<div class="ab" style="left:989px;top:489.5px;width:8px;height:8px;background:#c6c6c6;"></div>
<div class="ab" style="left:211.5px;top:497px;width:603.5px;height:1.3px;background:#a4a4a4;"></div>
<div class="ab" style="left:211.5px;top:498.2px;width:786px;height:1.4px;background:#bcc6ca;"></div>
<div class="ab" style="left:211px;top:66px;width:0.8px;height:433px;background:#b8c8d8;"></div>
<div class="ab" style="left:0px;top:510px;width:1006px;height:1px;background:#aeb69e;"></div>
<svg class="ab" style="left:0;top:0" width="1006" height="511" shape-rendering="crispEdges"><defs><g id="n1"><rect x="0.00" y="0" width="2.5" height="2.02" fill="#e1e1e1"/><rect x="0.00" y="2" width="2.5" height="2.02" fill="#b0b0b0"/><rect x="0.00" y="4" width="2.5" height="2.02" fill="#bdbdbd"/><rect x="2.47" y="2" width="2.5" height="2.02" fill="#c5c5c5"/><rect x="2.47" y="4" width="2.5" height="2.02" fill="#ababab"/><rect x="4.94" y="0" width="2.5" height="2.02" fill="#e9e9e9"/><rect x="4.94" y="4" width="2.5" height="2.02" fill="#818181"/><rect x="4.94" y="6" width="2.5" height="2.02" fill="#d4d4d4"/><rect x="7.41" y="0" width="2.5" height="2.02" fill="#dadada"/><rect x="7.41" y="2" width="2.5" height="2.02" fill="#aeaeae"/><rect x="9.88" y="2" width="2.5" height="2.02" fill="#d5d5d5"/><rect x="9.88" y="4" width="2.5" height="2.02" fill="#c5c5c5"/><rect x="12.35" y="2" width="2.5" height="2.02" fill="#d3d3d3"/><rect x="12.35" y="4" width="2.5" height="2.02" fill="#898989"/><rect x="14.82" y="2" width="2.5" height="2.02" fill="#b8b8b8"/><rect x="14.82" y="4" width="2.5" height="2.02" fill="#949494"/><rect x="14.82" y="6" width="2.5" height="2.02" fill="#e2e2e2"/><rect x="19.76" y="2" width="2.5" height="2.02" fill="#aeaeae"/><rect x="19.76" y="4" width="2.5" height="2.02" fill="#989898"/><rect x="19.76" y="6" width="2.5" height="2.02" fill="#d7d7d7"/><rect x="22.23" y="2" width="2.5" height="2.02" fill="#d7d7d7"/><rect x="22.23" y="4" width="2.5" height="2.02" fill="#717171"/><rect x="24.70" y="2" width="2.5" height="2.02" fill="#d7d7d7"/><rect x="24.70" y="4" width="2.5" height="2.02" fill="#7b7b7b"/><rect x="27.17" y="2" width="2.5" height="2.02" fill="#cfcfcf"/><rect x="27.17" y="4" width="2.5" height="2.02" fill="#6d6d6d"/><rect x="29.64" y="2" width="2.5" height="2.02" fill="#959595"/><rect x="29.64" y="6" width="2.5" height="2.02" fill="#dfdfdf"/><rect x="32.11" y="2" width="2.5" height="2.02" fill="#a8a8a8"/><rect x="32.11" y="4" width="2.5" height="2.02" fill="#c7c7c7"/><rect x="34.58" y="2" width="2.5" height="2.02" fill="#c0c0c0"/><rect x="34.58" y="6" width="2.5" height="2.02" fill="#cbcbcb"/><rect x="39.52" y="0" width="2.5" height="2.02" fill="#f1f1f1"/><rect x="39.52" y="2" width="2.5" height="2.02" fill="#a7a7a7"/><rect x="39.52" y="4" width="2.5" height="2.02" fill="#919191"/><rect x="41.99" y="0" width="2.5" height="2.02" fill="#d7d7d7"/><rect x="41.99" y="4" width="2.5" height="2.02" fill="#8f8f8f"/><rect x="41.99" y="6" width="2.5" height="2.02" fill="#e8e8e8"/><rect x="44.46" y="2" width="2.5" height="2.02" fill="#d8d8d8"/><rect x="49.40" y="2" width="2.5" height="2.02" fill="#c2c2c2"/><rect x="51.87" y="2" width="2.5" height="2.02" fill="#aaaaaa"/><rect x="51.87" y="4" width="2.5" height="2.02" fill="#b0b0b0"/><rect x="51.87" y="6" width="2.5" height="2.02" fill="#eaeaea"/><rect x="54.34" y="0" width="2.5" height="2.02" fill="#dbdbdb"/><rect x="54.34" y="2" width="2.5" height="2.02" fill="#bdbdbd"/><rect x="54.34" y="4" width="2.5" height="2.02" fill="#8a8a8a"/><rect x="56.81" y="2" width="2.5" height="2.02" fill="#919191"/><rect x="56.81" y="4" width="2.5" height="2.02" fill="#676767"/><rect x="59.28" y="2" width="2.5" height="2.02" fill="#afafaf"/><rect x="59.28" y="4" width="2.5" height="2.02" fill="#a7a7a7"/><rect x="61.75" y="2" width="2.5" height="2.02" fill="#a1a1a1"/><rect x="61.75" y="6" width="2.5" height="2.02" fill="#c8c8c8"/><rect x="66.69" y="2" width="2.5" height="2.02" fill="#999999"/><rect x="66.69" y="4" width="2.5" height="2.02" fill="#bebebe"/><rect x="69.16" y="0" width="2.5" height="2.02" fill="#f0f0f0"/><rect x="69.16" y="2" width="2.5" height="2.02" fill="#989898"/><rect x="69.16" y="4" width="2.5" height="2.02" fill="#717171"/><rect x="69.16" y="6" width="2.5" height="2.02" fill="#d8d8d8"/><rect x="71.63" y="0" width="2.5" height="2.02" fill="#dedede"/><rect x="74.10" y="4" width="2.5" height="2.02" fill="#989898"/><rect x="74.10" y="6" width="2.5" height="2.02" fill="#e8e8e8"/><rect x="76.57" y="2" width="2.5" height="2.02" fill="#b2b2b2"/><rect x="76.57" y="4" width="2.5" height="2.02" fill="#717171"/></g><g id="n1b"><rect x="0.00" y="0" width="2.5" height="2.02" fill="#d6d7ea"/><rect x="0.00" y="2" width="2.5" height="2.02" fill="#8187d5"/><rect x="0.00" y="4" width="2.5" height="2.02" fill="#969adb"/><rect x="2.47" y="2" width="2.5" height="2.02" fill="#a3a7de"/><rect x="2.47" y="4" width="2.5" height="2.02" fill="#7a80d3"/><rect x="4.94" y="0" width="2.5" height="2.02" fill="#e5e6ed"/><rect x="4.94" y="4" width="2.5" height="2.02" fill="#4750c1"/><rect x="4.94" y="6" width="2.5" height="2.02" fill="#bdc0e4"/><rect x="7.41" y="0" width="2.5" height="2.02" fill="#c8cae7"/><rect x="7.41" y="2" width="2.5" height="2.02" fill="#7e84d4"/><rect x="9.88" y="2" width="2.5" height="2.02" fill="#bfc2e5"/><rect x="9.88" y="4" width="2.5" height="2.02" fill="#a3a7de"/><rect x="12.35" y="2" width="2.5" height="2.02" fill="#bbbee4"/><rect x="12.35" y="4" width="2.5" height="2.02" fill="#4f57c5"/><rect x="14.82" y="2" width="2.5" height="2.02" fill="#8e93d9"/><rect x="14.82" y="4" width="2.5" height="2.02" fill="#5c63c9"/><rect x="14.82" y="6" width="2.5" height="2.02" fill="#d8d9ea"/><rect x="19.76" y="2" width="2.5" height="2.02" fill="#7e84d4"/><rect x="19.76" y="4" width="2.5" height="2.02" fill="#6168cb"/><rect x="19.76" y="6" width="2.5" height="2.02" fill="#c3c5e6"/><rect x="22.23" y="2" width="2.5" height="2.02" fill="#c3c5e6"/><rect x="22.23" y="4" width="2.5" height="2.02" fill="#3943ba"/><rect x="24.70" y="2" width="2.5" height="2.02" fill="#c3c5e6"/><rect x="24.70" y="4" width="2.5" height="2.02" fill="#414abf"/><rect x="27.17" y="2" width="2.5" height="2.02" fill="#b4b7e2"/><rect x="27.17" y="4" width="2.5" height="2.02" fill="#3740b9"/><rect x="29.64" y="2" width="2.5" height="2.02" fill="#5d64ca"/><rect x="29.64" y="6" width="2.5" height="2.02" fill="#d2d3e9"/><rect x="32.11" y="2" width="2.5" height="2.02" fill="#767cd2"/><rect x="32.11" y="4" width="2.5" height="2.02" fill="#a6aadf"/><rect x="34.58" y="2" width="2.5" height="2.02" fill="#9b9fdc"/><rect x="34.58" y="6" width="2.5" height="2.02" fill="#adb1e1"/><rect x="39.52" y="0" width="2.5" height="2.02" fill="#f6f5f1"/><rect x="39.52" y="2" width="2.5" height="2.02" fill="#747bd1"/><rect x="39.52" y="4" width="2.5" height="2.02" fill="#5860c8"/><rect x="41.99" y="0" width="2.5" height="2.02" fill="#c3c5e6"/><rect x="41.99" y="4" width="2.5" height="2.02" fill="#565ec7"/><rect x="41.99" y="6" width="2.5" height="2.02" fill="#e3e4ed"/><rect x="44.46" y="2" width="2.5" height="2.02" fill="#c5c7e6"/><rect x="49.40" y="2" width="2.5" height="2.02" fill="#9ea2dd"/><rect x="51.87" y="2" width="2.5" height="2.02" fill="#797fd3"/><rect x="51.87" y="4" width="2.5" height="2.02" fill="#8187d5"/><rect x="51.87" y="6" width="2.5" height="2.02" fill="#e7e8ee"/><rect x="54.34" y="0" width="2.5" height="2.02" fill="#cacce7"/><rect x="54.34" y="2" width="2.5" height="2.02" fill="#969adb"/><rect x="54.34" y="4" width="2.5" height="2.02" fill="#5058c5"/><rect x="56.81" y="2" width="2.5" height="2.02" fill="#5860c8"/><rect x="56.81" y="4" width="2.5" height="2.02" fill="#333db6"/><rect x="59.28" y="2" width="2.5" height="2.02" fill="#8086d5"/><rect x="59.28" y="4" width="2.5" height="2.02" fill="#747bd1"/><rect x="61.75" y="2" width="2.5" height="2.02" fill="#6c73cf"/><rect x="61.75" y="6" width="2.5" height="2.02" fill="#a8acdf"/><rect x="66.69" y="2" width="2.5" height="2.02" fill="#6269cb"/><rect x="66.69" y="4" width="2.5" height="2.02" fill="#979cdb"/><rect x="69.16" y="0" width="2.5" height="2.02" fill="#f4f3f0"/><rect x="69.16" y="2" width="2.5" height="2.02" fill="#6168cb"/><rect x="69.16" y="4" width="2.5" height="2.02" fill="#3943ba"/><rect x="69.16" y="6" width="2.5" height="2.02" fill="#c5c7e6"/><rect x="71.63" y="0" width="2.5" height="2.02" fill="#d0d2e9"/><rect x="74.10" y="4" width="2.5" height="2.02" fill="#6168cb"/><rect x="74.10" y="6" width="2.5" height="2.02" fill="#e3e4ed"/><rect x="76.57" y="2" width="2.5" height="2.02" fill="#848ad6"/><rect x="76.57" y="4" width="2.5" height="2.02" fill="#3943ba"/></g><g id="n2"><rect x="0.00" y="2" width="2.5" height="2.02" fill="#c0c0c0"/><rect x="0.00" y="4" width="2.5" height="2.02" fill="#7d7d7d"/><rect x="2.47" y="2" width="2.5" height="2.02" fill="#c5c5c5"/><rect x="2.47" y="4" width="2.5" height="2.02" fill="#a7a7a7"/><rect x="4.94" y="2" width="2.5" height="2.02" fill="#cecece"/><rect x="4.94" y="4" width="2.5" height="2.02" fill="#979797"/><rect x="7.41" y="0" width="2.5" height="2.02" fill="#e5e5e5"/><rect x="7.41" y="2" width="2.5" height="2.02" fill="#909090"/><rect x="7.41" y="4" width="2.5" height="2.02" fill="#c4c4c4"/><rect x="7.41" y="6" width="2.5" height="2.02" fill="#e6e6e6"/><rect x="9.88" y="2" width="2.5" height="2.02" fill="#919191"/><rect x="9.88" y="6" width="2.5" height="2.02" fill="#cecece"/><rect x="12.35" y="0" width="2.5" height="2.02" fill="#dfdfdf"/><rect x="12.35" y="2" width="2.5" height="2.02" fill="#a7a7a7"/><rect x="12.35" y="6" width="2.5" height="2.02" fill="#d0d0d0"/><rect x="14.82" y="2" width="2.5" height="2.02" fill="#a5a5a5"/><rect x="14.82" y="4" width="2.5" height="2.02" fill="#828282"/><rect x="19.76" y="2" width="2.5" height="2.02" fill="#b1b1b1"/><rect x="19.76" y="4" width="2.5" height="2.02" fill="#9e9e9e"/><rect x="22.23" y="2" width="2.5" height="2.02" fill="#939393"/><rect x="22.23" y="4" width="2.5" height="2.02" fill="#959595"/><rect x="24.70" y="2" width="2.5" height="2.02" fill="#c0c0c0"/><rect x="24.70" y="4" width="2.5" height="2.02" fill="#ababab"/><rect x="27.17" y="2" width="2.5" height="2.02" fill="#a5a5a5"/><rect x="27.17" y="4" width="2.5" height="2.02" fill="#656565"/><rect x="27.17" y="6" width="2.5" height="2.02" fill="#e8e8e8"/><rect x="29.64" y="4" width="2.5" height="2.02" fill="#c2c2c2"/><rect x="29.64" y="6" width="2.5" height="2.02" fill="#eeeeee"/><rect x="39.52" y="4" width="2.5" height="2.02" fill="#b7b7b7"/><rect x="41.99" y="2" width="2.5" height="2.02" fill="#d3d3d3"/><rect x="41.99" y="4" width="2.5" height="2.02" fill="#9c9c9c"/><rect x="41.99" y="6" width="2.5" height="2.02" fill="#c8c8c8"/><rect x="44.46" y="0" width="2.5" height="2.02" fill="#eeeeee"/><rect x="44.46" y="2" width="2.5" height="2.02" fill="#c7c7c7"/><rect x="44.46" y="4" width="2.5" height="2.02" fill="#757575"/><rect x="44.46" y="6" width="2.5" height="2.02" fill="#cecece"/><rect x="49.40" y="2" width="2.5" height="2.02" fill="#8d8d8d"/><rect x="49.40" y="4" width="2.5" height="2.02" fill="#b7b7b7"/><rect x="51.87" y="0" width="2.5" height="2.02" fill="#e3e3e3"/><rect x="51.87" y="2" width="2.5" height="2.02" fill="#a4a4a4"/><rect x="51.87" y="4" width="2.5" height="2.02" fill="#bababa"/><rect x="54.34" y="2" width="2.5" height="2.02" fill="#909090"/><rect x="54.34" y="6" width="2.5" height="2.02" fill="#e3e3e3"/><rect x="56.81" y="2" width="2.5" height="2.02" fill="#a9a9a9"/><rect x="56.81" y="4" width="2.5" height="2.02" fill="#a0a0a0"/><rect x="59.28" y="0" width="2.5" height="2.02" fill="#dedede"/><rect x="59.28" y="2" width="2.5" height="2.02" fill="#dbdbdb"/><rect x="59.28" y="4" width="2.5" height="2.02" fill="#6e6e6e"/><rect x="61.75" y="0" width="2.5" height="2.02" fill="#e4e4e4"/><rect x="61.75" y="4" width="2.5" height="2.02" fill="#8c8c8c"/><rect x="66.69" y="2" width="2.5" height="2.02" fill="#cdcdcd"/><rect x="66.69" y="4" width="2.5" height="2.02" fill="#969696"/><rect x="69.16" y="2" width="2.5" height="2.02" fill="#9f9f9f"/><rect x="69.16" y="4" width="2.5" height="2.02" fill="#707070"/><rect x="71.63" y="2" width="2.5" height="2.02" fill="#c5c5c5"/><rect x="71.63" y="4" width="2.5" height="2.02" fill="#a8a8a8"/><rect x="74.10" y="4" width="2.5" height="2.02" fill="#8a8a8a"/><rect x="76.57" y="2" width="2.5" height="2.02" fill="#dadada"/><rect x="76.57" y="4" width="2.5" height="2.02" fill="#878787"/></g><g id="n2b"><rect x="0.00" y="2" width="2.5" height="2.02" fill="#9b9fdc"/><rect x="0.00" y="4" width="2.5" height="2.02" fill="#434cbf"/><rect x="2.47" y="2" width="2.5" height="2.02" fill="#a3a7de"/><rect x="2.47" y="4" width="2.5" height="2.02" fill="#747bd1"/><rect x="4.94" y="2" width="2.5" height="2.02" fill="#b2b6e2"/><rect x="4.94" y="4" width="2.5" height="2.02" fill="#5f67cb"/><rect x="7.41" y="0" width="2.5" height="2.02" fill="#dddeec"/><rect x="7.41" y="2" width="2.5" height="2.02" fill="#575fc8"/><rect x="7.41" y="4" width="2.5" height="2.02" fill="#a1a5de"/><rect x="7.41" y="6" width="2.5" height="2.02" fill="#dfe0ec"/><rect x="9.88" y="2" width="2.5" height="2.02" fill="#5860c8"/><rect x="9.88" y="6" width="2.5" height="2.02" fill="#b2b6e2"/><rect x="12.35" y="0" width="2.5" height="2.02" fill="#d2d3e9"/><rect x="12.35" y="2" width="2.5" height="2.02" fill="#747bd1"/><rect x="12.35" y="6" width="2.5" height="2.02" fill="#b6b9e3"/><rect x="14.82" y="2" width="2.5" height="2.02" fill="#7278d0"/><rect x="14.82" y="4" width="2.5" height="2.02" fill="#4851c2"/><rect x="19.76" y="2" width="2.5" height="2.02" fill="#8388d6"/><rect x="19.76" y="4" width="2.5" height="2.02" fill="#686fce"/><rect x="22.23" y="2" width="2.5" height="2.02" fill="#5a62c9"/><rect x="22.23" y="4" width="2.5" height="2.02" fill="#5d64ca"/><rect x="24.70" y="2" width="2.5" height="2.02" fill="#9b9fdc"/><rect x="24.70" y="4" width="2.5" height="2.02" fill="#7a80d3"/><rect x="27.17" y="2" width="2.5" height="2.02" fill="#7278d0"/><rect x="27.17" y="4" width="2.5" height="2.02" fill="#323bb5"/><rect x="27.17" y="6" width="2.5" height="2.02" fill="#e3e4ed"/><rect x="29.64" y="4" width="2.5" height="2.02" fill="#9ea2dd"/><rect x="29.64" y="6" width="2.5" height="2.02" fill="#f0f0f0"/><rect x="39.52" y="4" width="2.5" height="2.02" fill="#8c91d8"/><rect x="41.99" y="2" width="2.5" height="2.02" fill="#bbbee4"/><rect x="41.99" y="4" width="2.5" height="2.02" fill="#666dcd"/><rect x="41.99" y="6" width="2.5" height="2.02" fill="#a8acdf"/><rect x="44.46" y="0" width="2.5" height="2.02" fill="#f0f0f0"/><rect x="44.46" y="2" width="2.5" height="2.02" fill="#a6aadf"/><rect x="44.46" y="4" width="2.5" height="2.02" fill="#3c46bc"/><rect x="44.46" y="6" width="2.5" height="2.02" fill="#b2b6e2"/><rect x="49.40" y="2" width="2.5" height="2.02" fill="#545cc6"/><rect x="49.40" y="4" width="2.5" height="2.02" fill="#8c91d8"/><rect x="51.87" y="0" width="2.5" height="2.02" fill="#dadbeb"/><rect x="51.87" y="2" width="2.5" height="2.02" fill="#7077d0"/><rect x="51.87" y="4" width="2.5" height="2.02" fill="#9196d9"/><rect x="54.34" y="2" width="2.5" height="2.02" fill="#575fc8"/><rect x="54.34" y="6" width="2.5" height="2.02" fill="#dadbeb"/><rect x="56.81" y="2" width="2.5" height="2.02" fill="#777dd2"/><rect x="56.81" y="4" width="2.5" height="2.02" fill="#6b72ce"/><rect x="59.28" y="0" width="2.5" height="2.02" fill="#d0d2e9"/><rect x="59.28" y="2" width="2.5" height="2.02" fill="#cacce7"/><rect x="59.28" y="4" width="2.5" height="2.02" fill="#3741b9"/><rect x="61.75" y="0" width="2.5" height="2.02" fill="#dcddeb"/><rect x="61.75" y="4" width="2.5" height="2.02" fill="#525ac6"/><rect x="66.69" y="2" width="2.5" height="2.02" fill="#b1b4e1"/><rect x="66.69" y="4" width="2.5" height="2.02" fill="#5e66ca"/><rect x="69.16" y="2" width="2.5" height="2.02" fill="#6970ce"/><rect x="69.16" y="4" width="2.5" height="2.02" fill="#3942ba"/><rect x="71.63" y="2" width="2.5" height="2.02" fill="#a3a7de"/><rect x="71.63" y="4" width="2.5" height="2.02" fill="#767cd2"/><rect x="74.10" y="4" width="2.5" height="2.02" fill="#5058c5"/><rect x="76.57" y="2" width="2.5" height="2.02" fill="#c8cae7"/><rect x="76.57" y="4" width="2.5" height="2.02" fill="#4d55c4"/></g><g id="n3"><rect x="0.00" y="0" width="2.5" height="2.02" fill="#f1f1f1"/><rect x="0.00" y="2" width="2.5" height="2.02" fill="#a7a7a7"/><rect x="0.00" y="4" width="2.5" height="2.02" fill="#b0b0b0"/><rect x="4.94" y="2" width="2.5" height="2.02" fill="#8e8e8e"/><rect x="4.94" y="4" width="2.5" height="2.02" fill="#909090"/><rect x="7.41" y="2" width="2.5" height="2.02" fill="#999999"/><rect x="7.41" y="4" width="2.5" height="2.02" fill="#909090"/><rect x="9.88" y="2" width="2.5" height="2.02" fill="#cbcbcb"/><rect x="9.88" y="4" width="2.5" height="2.02" fill="#8a8a8a"/><rect x="12.35" y="2" width="2.5" height="2.02" fill="#dadada"/><rect x="12.35" y="4" width="2.5" height="2.02" fill="#666666"/><rect x="14.82" y="2" width="2.5" height="2.02" fill="#9d9d9d"/><rect x="14.82" y="4" width="2.5" height="2.02" fill="#939393"/><rect x="14.82" y="6" width="2.5" height="2.02" fill="#e6e6e6"/><rect x="17.29" y="2" width="2.5" height="2.02" fill="#b7b7b7"/><rect x="17.29" y="4" width="2.5" height="2.02" fill="#6a6a6a"/><rect x="19.76" y="2" width="2.5" height="2.02" fill="#919191"/><rect x="19.76" y="4" width="2.5" height="2.02" fill="#747474"/><rect x="19.76" y="6" width="2.5" height="2.02" fill="#cdcdcd"/><rect x="24.70" y="0" width="2.5" height="2.02" fill="#dddddd"/><rect x="24.70" y="2" width="2.5" height="2.02" fill="#b0b0b0"/><rect x="24.70" y="4" width="2.5" height="2.02" fill="#c2c2c2"/><rect x="27.17" y="0" width="2.5" height="2.02" fill="#dcdcdc"/><rect x="27.17" y="4" width="2.5" height="2.02" fill="#b6b6b6"/><rect x="27.17" y="6" width="2.5" height="2.02" fill="#e9e9e9"/><rect x="32.11" y="4" width="2.5" height="2.02" fill="#bcbcbc"/><rect x="32.11" y="6" width="2.5" height="2.02" fill="#cbcbcb"/><rect x="34.58" y="2" width="2.5" height="2.02" fill="#bcbcbc"/><rect x="34.58" y="4" width="2.5" height="2.02" fill="#777777"/><rect x="37.05" y="0" width="2.5" height="2.02" fill="#f2f2f2"/><rect x="37.05" y="2" width="2.5" height="2.02" fill="#8c8c8c"/><rect x="37.05" y="4" width="2.5" height="2.02" fill="#828282"/><rect x="39.52" y="2" width="2.5" height="2.02" fill="#a7a7a7"/><rect x="39.52" y="4" width="2.5" height="2.02" fill="#717171"/><rect x="41.99" y="2" width="2.5" height="2.02" fill="#9e9e9e"/><rect x="41.99" y="4" width="2.5" height="2.02" fill="#6d6d6d"/><rect x="44.46" y="2" width="2.5" height="2.02" fill="#969696"/><rect x="44.46" y="4" width="2.5" height="2.02" fill="#888888"/><rect x="46.93" y="2" width="2.5" height="2.02" fill="#999999"/><rect x="49.40" y="2" width="2.5" height="2.02" fill="#9b9b9b"/><rect x="49.40" y="4" width="2.5" height="2.02" fill="#a9a9a9"/><rect x="51.87" y="2" width="2.5" height="2.02" fill="#c2c2c2"/><rect x="54.34" y="4" width="2.5" height="2.02" fill="#848484"/><rect x="54.34" y="6" width="2.5" height="2.02" fill="#d5d5d5"/><rect x="56.81" y="0" width="2.5" height="2.02" fill="#e0e0e0"/><rect x="56.81" y="2" width="2.5" height="2.02" fill="#c9c9c9"/><rect x="56.81" y="4" width="2.5" height="2.02" fill="#a7a7a7"/><rect x="59.28" y="2" width="2.5" height="2.02" fill="#9a9a9a"/><rect x="59.28" y="4" width="2.5" height="2.02" fill="#b4b4b4"/><rect x="61.75" y="2" width="2.5" height="2.02" fill="#d7d7d7"/><rect x="61.75" y="4" width="2.5" height="2.02" fill="#717171"/><rect x="61.75" y="6" width="2.5" height="2.02" fill="#e3e3e3"/><rect x="64.22" y="0" width="2.5" height="2.02" fill="#d7d7d7"/><rect x="64.22" y="4" width="2.5" height="2.02" fill="#bcbcbc"/><rect x="66.69" y="2" width="2.5" height="2.02" fill="#c2c2c2"/><rect x="66.69" y="4" width="2.5" height="2.02" fill="#ababab"/><rect x="69.16" y="2" width="2.5" height="2.02" fill="#b5b5b5"/><rect x="69.16" y="4" width="2.5" height="2.02" fill="#6a6a6a"/><rect x="71.63" y="2" width="2.5" height="2.02" fill="#c5c5c5"/><rect x="71.63" y="4" width="2.5" height="2.02" fill="#898989"/><rect x="71.63" y="6" width="2.5" height="2.02" fill="#e4e4e4"/></g><g id="n3b"><rect x="0.00" y="0" width="2.5" height="2.02" fill="#f6f5f1"/><rect x="0.00" y="2" width="2.5" height="2.02" fill="#747bd1"/><rect x="0.00" y="4" width="2.5" height="2.02" fill="#8187d5"/><rect x="4.94" y="2" width="2.5" height="2.02" fill="#555dc7"/><rect x="4.94" y="4" width="2.5" height="2.02" fill="#575fc8"/><rect x="7.41" y="2" width="2.5" height="2.02" fill="#6269cb"/><rect x="7.41" y="4" width="2.5" height="2.02" fill="#575fc8"/><rect x="9.88" y="2" width="2.5" height="2.02" fill="#adb1e1"/><rect x="9.88" y="4" width="2.5" height="2.02" fill="#5058c5"/><rect x="12.35" y="2" width="2.5" height="2.02" fill="#c8cae7"/><rect x="12.35" y="4" width="2.5" height="2.02" fill="#323cb6"/><rect x="14.82" y="2" width="2.5" height="2.02" fill="#676ecd"/><rect x="14.82" y="4" width="2.5" height="2.02" fill="#5a62c9"/><rect x="14.82" y="6" width="2.5" height="2.02" fill="#dfe0ec"/><rect x="17.29" y="2" width="2.5" height="2.02" fill="#8c91d8"/><rect x="17.29" y="4" width="2.5" height="2.02" fill="#353eb7"/><rect x="19.76" y="2" width="2.5" height="2.02" fill="#5860c8"/><rect x="19.76" y="4" width="2.5" height="2.02" fill="#3c45bc"/><rect x="19.76" y="6" width="2.5" height="2.02" fill="#b1b4e1"/><rect x="24.70" y="0" width="2.5" height="2.02" fill="#ced0e8"/><rect x="24.70" y="2" width="2.5" height="2.02" fill="#8187d5"/><rect x="24.70" y="4" width="2.5" height="2.02" fill="#9ea2dd"/><rect x="27.17" y="0" width="2.5" height="2.02" fill="#cccee8"/><rect x="27.17" y="4" width="2.5" height="2.02" fill="#8b90d8"/><rect x="27.17" y="6" width="2.5" height="2.02" fill="#e5e6ed"/><rect x="32.11" y="4" width="2.5" height="2.02" fill="#9499da"/><rect x="32.11" y="6" width="2.5" height="2.02" fill="#adb1e1"/><rect x="34.58" y="2" width="2.5" height="2.02" fill="#9499da"/><rect x="34.58" y="4" width="2.5" height="2.02" fill="#3e47bd"/><rect x="37.05" y="0" width="2.5" height="2.02" fill="#f8f7f1"/><rect x="37.05" y="2" width="2.5" height="2.02" fill="#525ac6"/><rect x="37.05" y="4" width="2.5" height="2.02" fill="#4851c2"/><rect x="39.52" y="2" width="2.5" height="2.02" fill="#747bd1"/><rect x="39.52" y="4" width="2.5" height="2.02" fill="#3943ba"/><rect x="41.99" y="2" width="2.5" height="2.02" fill="#686fce"/><rect x="41.99" y="4" width="2.5" height="2.02" fill="#3740b9"/><rect x="44.46" y="2" width="2.5" height="2.02" fill="#5e66ca"/><rect x="44.46" y="4" width="2.5" height="2.02" fill="#4e56c4"/><rect x="46.93" y="2" width="2.5" height="2.02" fill="#6269cb"/><rect x="49.40" y="2" width="2.5" height="2.02" fill="#646bcc"/><rect x="49.40" y="4" width="2.5" height="2.02" fill="#777dd2"/><rect x="51.87" y="2" width="2.5" height="2.02" fill="#9ea2dd"/><rect x="54.34" y="4" width="2.5" height="2.02" fill="#4a52c2"/><rect x="54.34" y="6" width="2.5" height="2.02" fill="#bfc2e5"/><rect x="56.81" y="0" width="2.5" height="2.02" fill="#d4d5ea"/><rect x="56.81" y="2" width="2.5" height="2.02" fill="#aaade0"/><rect x="56.81" y="4" width="2.5" height="2.02" fill="#747bd1"/><rect x="59.28" y="2" width="2.5" height="2.02" fill="#636acc"/><rect x="59.28" y="4" width="2.5" height="2.02" fill="#878dd7"/><rect x="61.75" y="2" width="2.5" height="2.02" fill="#c3c5e6"/><rect x="61.75" y="4" width="2.5" height="2.02" fill="#3943ba"/><rect x="61.75" y="6" width="2.5" height="2.02" fill="#dadbeb"/><rect x="64.22" y="0" width="2.5" height="2.02" fill="#c3c5e6"/><rect x="64.22" y="4" width="2.5" height="2.02" fill="#9499da"/><rect x="66.69" y="2" width="2.5" height="2.02" fill="#9ea2dd"/><rect x="66.69" y="4" width="2.5" height="2.02" fill="#7a80d3"/><rect x="69.16" y="2" width="2.5" height="2.02" fill="#898ed7"/><rect x="69.16" y="4" width="2.5" height="2.02" fill="#353eb7"/><rect x="71.63" y="2" width="2.5" height="2.02" fill="#a3a7de"/><rect x="71.63" y="4" width="2.5" height="2.02" fill="#4f57c5"/><rect x="71.63" y="6" width="2.5" height="2.02" fill="#dcddeb"/></g><g id="n4"><rect x="0.00" y="2" width="2.5" height="2.02" fill="#d6d6d6"/><rect x="0.00" y="4" width="2.5" height="2.02" fill="#989898"/><rect x="2.47" y="2" width="2.5" height="2.02" fill="#a0a0a0"/><rect x="2.47" y="4" width="2.5" height="2.02" fill="#989898"/><rect x="2.47" y="6" width="2.5" height="2.02" fill="#cccccc"/><rect x="4.94" y="4" width="2.5" height="2.02" fill="#919191"/><rect x="7.41" y="0" width="2.5" height="2.02" fill="#dddddd"/><rect x="7.41" y="2" width="2.5" height="2.02" fill="#aaaaaa"/><rect x="7.41" y="4" width="2.5" height="2.02" fill="#8a8a8a"/><rect x="9.88" y="4" width="2.5" height="2.02" fill="#868686"/><rect x="9.88" y="6" width="2.5" height="2.02" fill="#e9e9e9"/><rect x="12.35" y="2" width="2.5" height="2.02" fill="#9c9c9c"/><rect x="12.35" y="4" width="2.5" height="2.02" fill="#9d9d9d"/><rect x="14.82" y="4" width="2.5" height="2.02" fill="#9c9c9c"/><rect x="17.29" y="2" width="2.5" height="2.02" fill="#8d8d8d"/><rect x="17.29" y="4" width="2.5" height="2.02" fill="#c7c7c7"/><rect x="19.76" y="4" width="2.5" height="2.02" fill="#c5c5c5"/><rect x="22.23" y="2" width="2.5" height="2.02" fill="#bababa"/><rect x="22.23" y="4" width="2.5" height="2.02" fill="#bababa"/><rect x="27.17" y="2" width="2.5" height="2.02" fill="#a4a4a4"/><rect x="27.17" y="4" width="2.5" height="2.02" fill="#757575"/><rect x="29.64" y="2" width="2.5" height="2.02" fill="#c5c5c5"/><rect x="29.64" y="4" width="2.5" height="2.02" fill="#b2b2b2"/><rect x="29.64" y="6" width="2.5" height="2.02" fill="#ededed"/><rect x="32.11" y="2" width="2.5" height="2.02" fill="#d4d4d4"/><rect x="32.11" y="4" width="2.5" height="2.02" fill="#929292"/><rect x="34.58" y="4" width="2.5" height="2.02" fill="#979797"/><rect x="39.52" y="2" width="2.5" height="2.02" fill="#b0b0b0"/><rect x="39.52" y="4" width="2.5" height="2.02" fill="#7a7a7a"/><rect x="41.99" y="2" width="2.5" height="2.02" fill="#bdbdbd"/><rect x="41.99" y="4" width="2.5" height="2.02" fill="#797979"/><rect x="44.46" y="0" width="2.5" height="2.02" fill="#dddddd"/><rect x="44.46" y="2" width="2.5" height="2.02" fill="#c8c8c8"/><rect x="44.46" y="4" width="2.5" height="2.02" fill="#898989"/><rect x="44.46" y="6" width="2.5" height="2.02" fill="#e2e2e2"/><rect x="46.93" y="2" width="2.5" height="2.02" fill="#a6a6a6"/><rect x="46.93" y="4" width="2.5" height="2.02" fill="#c8c8c8"/><rect x="49.40" y="2" width="2.5" height="2.02" fill="#dadada"/><rect x="49.40" y="4" width="2.5" height="2.02" fill="#666666"/><rect x="51.87" y="4" width="2.5" height="2.02" fill="#858585"/><rect x="51.87" y="6" width="2.5" height="2.02" fill="#e5e5e5"/><rect x="54.34" y="0" width="2.5" height="2.02" fill="#d9d9d9"/><rect x="54.34" y="2" width="2.5" height="2.02" fill="#8d8d8d"/><rect x="54.34" y="4" width="2.5" height="2.02" fill="#898989"/><rect x="54.34" y="6" width="2.5" height="2.02" fill="#dbdbdb"/><rect x="56.81" y="2" width="2.5" height="2.02" fill="#c4c4c4"/><rect x="56.81" y="4" width="2.5" height="2.02" fill="#c0c0c0"/><rect x="59.28" y="2" width="2.5" height="2.02" fill="#d0d0d0"/><rect x="59.28" y="4" width="2.5" height="2.02" fill="#bbbbbb"/><rect x="61.75" y="2" width="2.5" height="2.02" fill="#bfbfbf"/><rect x="61.75" y="4" width="2.5" height="2.02" fill="#8d8d8d"/><rect x="61.75" y="6" width="2.5" height="2.02" fill="#e5e5e5"/></g><g id="n4b"><rect x="0.00" y="2" width="2.5" height="2.02" fill="#c1c3e5"/><rect x="0.00" y="4" width="2.5" height="2.02" fill="#6168cb"/><rect x="2.47" y="2" width="2.5" height="2.02" fill="#6b72ce"/><rect x="2.47" y="4" width="2.5" height="2.02" fill="#6168cb"/><rect x="2.47" y="6" width="2.5" height="2.02" fill="#afb2e1"/><rect x="4.94" y="4" width="2.5" height="2.02" fill="#5860c8"/><rect x="7.41" y="0" width="2.5" height="2.02" fill="#ced0e8"/><rect x="7.41" y="2" width="2.5" height="2.02" fill="#797fd3"/><rect x="7.41" y="4" width="2.5" height="2.02" fill="#5058c5"/><rect x="9.88" y="4" width="2.5" height="2.02" fill="#4c54c3"/><rect x="9.88" y="6" width="2.5" height="2.02" fill="#e5e6ed"/><rect x="12.35" y="2" width="2.5" height="2.02" fill="#666dcd"/><rect x="12.35" y="4" width="2.5" height="2.02" fill="#676ecd"/><rect x="14.82" y="4" width="2.5" height="2.02" fill="#666dcd"/><rect x="17.29" y="2" width="2.5" height="2.02" fill="#545cc6"/><rect x="17.29" y="4" width="2.5" height="2.02" fill="#a6aadf"/><rect x="19.76" y="4" width="2.5" height="2.02" fill="#a3a7de"/><rect x="22.23" y="2" width="2.5" height="2.02" fill="#9196d9"/><rect x="22.23" y="4" width="2.5" height="2.02" fill="#9196d9"/><rect x="27.17" y="2" width="2.5" height="2.02" fill="#7077d0"/><rect x="27.17" y="4" width="2.5" height="2.02" fill="#3c46bc"/><rect x="29.64" y="2" width="2.5" height="2.02" fill="#a3a7de"/><rect x="29.64" y="4" width="2.5" height="2.02" fill="#848ad6"/><rect x="29.64" y="6" width="2.5" height="2.02" fill="#edeeef"/><rect x="32.11" y="2" width="2.5" height="2.02" fill="#bdc0e4"/><rect x="32.11" y="4" width="2.5" height="2.02" fill="#5961c8"/><rect x="34.58" y="4" width="2.5" height="2.02" fill="#5f67cb"/><rect x="39.52" y="2" width="2.5" height="2.02" fill="#8187d5"/><rect x="39.52" y="4" width="2.5" height="2.02" fill="#414abe"/><rect x="41.99" y="2" width="2.5" height="2.02" fill="#969adb"/><rect x="41.99" y="4" width="2.5" height="2.02" fill="#4049be"/><rect x="44.46" y="0" width="2.5" height="2.02" fill="#ced0e8"/><rect x="44.46" y="2" width="2.5" height="2.02" fill="#a8acdf"/><rect x="44.46" y="4" width="2.5" height="2.02" fill="#4f57c5"/><rect x="44.46" y="6" width="2.5" height="2.02" fill="#d8d9ea"/><rect x="46.93" y="2" width="2.5" height="2.02" fill="#7379d1"/><rect x="46.93" y="4" width="2.5" height="2.02" fill="#a8acdf"/><rect x="49.40" y="2" width="2.5" height="2.02" fill="#c8cae7"/><rect x="49.40" y="4" width="2.5" height="2.02" fill="#323cb6"/><rect x="51.87" y="4" width="2.5" height="2.02" fill="#4b53c3"/><rect x="51.87" y="6" width="2.5" height="2.02" fill="#dddeec"/><rect x="54.34" y="0" width="2.5" height="2.02" fill="#c6c9e7"/><rect x="54.34" y="2" width="2.5" height="2.02" fill="#545cc6"/><rect x="54.34" y="4" width="2.5" height="2.02" fill="#4f57c5"/><rect x="54.34" y="6" width="2.5" height="2.02" fill="#cacce7"/><rect x="56.81" y="2" width="2.5" height="2.02" fill="#a1a5de"/><rect x="56.81" y="4" width="2.5" height="2.02" fill="#9b9fdc"/><rect x="59.28" y="2" width="2.5" height="2.02" fill="#b6b9e3"/><rect x="59.28" y="4" width="2.5" height="2.02" fill="#9297da"/><rect x="61.75" y="2" width="2.5" height="2.02" fill="#999ddc"/><rect x="61.75" y="4" width="2.5" height="2.02" fill="#545cc6"/><rect x="61.75" y="6" width="2.5" height="2.02" fill="#dddeec"/></g><g id="n5"><rect x="0.00" y="2" width="2.5" height="2.02" fill="#d0d0d0"/><rect x="0.00" y="4" width="2.5" height="2.02" fill="#9f9f9f"/><rect x="2.47" y="4" width="2.5" height="2.02" fill="#707070"/><rect x="2.47" y="6" width="2.5" height="2.02" fill="#d6d6d6"/><rect x="4.94" y="0" width="2.5" height="2.02" fill="#ebebeb"/><rect x="4.94" y="2" width="2.5" height="2.02" fill="#a5a5a5"/><rect x="4.94" y="4" width="2.5" height="2.02" fill="#c1c1c1"/><rect x="9.88" y="2" width="2.5" height="2.02" fill="#b2b2b2"/><rect x="9.88" y="4" width="2.5" height="2.02" fill="#c5c5c5"/><rect x="9.88" y="6" width="2.5" height="2.02" fill="#dddddd"/><rect x="12.35" y="0" width="2.5" height="2.02" fill="#d9d9d9"/><rect x="12.35" y="2" width="2.5" height="2.02" fill="#a8a8a8"/><rect x="12.35" y="4" width="2.5" height="2.02" fill="#bababa"/><rect x="14.82" y="2" width="2.5" height="2.02" fill="#b2b2b2"/><rect x="14.82" y="4" width="2.5" height="2.02" fill="#929292"/><rect x="14.82" y="6" width="2.5" height="2.02" fill="#dbdbdb"/><rect x="17.29" y="4" width="2.5" height="2.02" fill="#707070"/><rect x="19.76" y="0" width="2.5" height="2.02" fill="#dadada"/><rect x="19.76" y="2" width="2.5" height="2.02" fill="#9e9e9e"/><rect x="19.76" y="4" width="2.5" height="2.02" fill="#b9b9b9"/><rect x="22.23" y="2" width="2.5" height="2.02" fill="#c2c2c2"/><rect x="22.23" y="4" width="2.5" height="2.02" fill="#a6a6a6"/><rect x="24.70" y="4" width="2.5" height="2.02" fill="#c0c0c0"/><rect x="27.17" y="0" width="2.5" height="2.02" fill="#e6e6e6"/><rect x="27.17" y="2" width="2.5" height="2.02" fill="#b9b9b9"/><rect x="27.17" y="4" width="2.5" height="2.02" fill="#c0c0c0"/><rect x="32.11" y="0" width="2.5" height="2.02" fill="#e5e5e5"/><rect x="32.11" y="4" width="2.5" height="2.02" fill="#848484"/><rect x="34.58" y="4" width="2.5" height="2.02" fill="#8b8b8b"/><rect x="37.05" y="2" width="2.5" height="2.02" fill="#9c9c9c"/><rect x="37.05" y="4" width="2.5" height="2.02" fill="#666666"/><rect x="37.05" y="6" width="2.5" height="2.02" fill="#cdcdcd"/><rect x="39.52" y="2" width="2.5" height="2.02" fill="#aeaeae"/><rect x="39.52" y="4" width="2.5" height="2.02" fill="#7d7d7d"/></g><g id="n5b"><rect x="0.00" y="2" width="2.5" height="2.02" fill="#b6b9e3"/><rect x="0.00" y="4" width="2.5" height="2.02" fill="#6970ce"/><rect x="2.47" y="4" width="2.5" height="2.02" fill="#3942ba"/><rect x="2.47" y="6" width="2.5" height="2.02" fill="#c1c3e5"/><rect x="4.94" y="0" width="2.5" height="2.02" fill="#e9eaee"/><rect x="4.94" y="2" width="2.5" height="2.02" fill="#7278d0"/><rect x="4.94" y="4" width="2.5" height="2.02" fill="#9ca0dc"/><rect x="9.88" y="2" width="2.5" height="2.02" fill="#848ad6"/><rect x="9.88" y="4" width="2.5" height="2.02" fill="#a3a7de"/><rect x="9.88" y="6" width="2.5" height="2.02" fill="#ced0e8"/><rect x="12.35" y="0" width="2.5" height="2.02" fill="#c6c9e7"/><rect x="12.35" y="2" width="2.5" height="2.02" fill="#767cd2"/><rect x="12.35" y="4" width="2.5" height="2.02" fill="#9196d9"/><rect x="14.82" y="2" width="2.5" height="2.02" fill="#848ad6"/><rect x="14.82" y="4" width="2.5" height="2.02" fill="#5961c8"/><rect x="14.82" y="6" width="2.5" height="2.02" fill="#cacce7"/><rect x="17.29" y="4" width="2.5" height="2.02" fill="#3942ba"/><rect x="19.76" y="0" width="2.5" height="2.02" fill="#c8cae7"/><rect x="19.76" y="2" width="2.5" height="2.02" fill="#686fce"/><rect x="19.76" y="4" width="2.5" height="2.02" fill="#8f94d9"/><rect x="22.23" y="2" width="2.5" height="2.02" fill="#9ea2dd"/><rect x="22.23" y="4" width="2.5" height="2.02" fill="#7379d1"/><rect x="24.70" y="4" width="2.5" height="2.02" fill="#9b9fdc"/><rect x="27.17" y="0" width="2.5" height="2.02" fill="#dfe0ec"/><rect x="27.17" y="2" width="2.5" height="2.02" fill="#8f94d9"/><rect x="27.17" y="4" width="2.5" height="2.02" fill="#9b9fdc"/><rect x="32.11" y="0" width="2.5" height="2.02" fill="#dddeec"/><rect x="32.11" y="4" width="2.5" height="2.02" fill="#4a52c2"/><rect x="34.58" y="4" width="2.5" height="2.02" fill="#5159c5"/><rect x="37.05" y="2" width="2.5" height="2.02" fill="#666dcd"/><rect x="37.05" y="4" width="2.5" height="2.02" fill="#323cb6"/><rect x="37.05" y="6" width="2.5" height="2.02" fill="#b1b4e1"/><rect x="39.52" y="2" width="2.5" height="2.02" fill="#7e84d4"/><rect x="39.52" y="4" width="2.5" height="2.02" fill="#434cbf"/></g><g id="n6"><rect x="0.00" y="0" width="2.5" height="2.02" fill="#e0e0e0"/><rect x="0.00" y="4" width="2.5" height="2.02" fill="#747474"/><rect x="2.47" y="2" width="2.5" height="2.02" fill="#adadad"/><rect x="2.47" y="6" width="2.5" height="2.02" fill="#e8e8e8"/><rect x="4.94" y="2" width="2.5" height="2.02" fill="#afafaf"/><rect x="7.41" y="2" width="2.5" height="2.02" fill="#9b9b9b"/><rect x="7.41" y="4" width="2.5" height="2.02" fill="#aaaaaa"/><rect x="9.88" y="0" width="2.5" height="2.02" fill="#f0f0f0"/><rect x="9.88" y="2" width="2.5" height="2.02" fill="#b4b4b4"/><rect x="9.88" y="4" width="2.5" height="2.02" fill="#c3c3c3"/><rect x="12.35" y="2" width="2.5" height="2.02" fill="#a4a4a4"/><rect x="12.35" y="4" width="2.5" height="2.02" fill="#a0a0a0"/><rect x="14.82" y="4" width="2.5" height="2.02" fill="#6c6c6c"/><rect x="17.29" y="0" width="2.5" height="2.02" fill="#e2e2e2"/><rect x="17.29" y="2" width="2.5" height="2.02" fill="#bdbdbd"/><rect x="17.29" y="4" width="2.5" height="2.02" fill="#bfbfbf"/><rect x="19.76" y="2" width="2.5" height="2.02" fill="#939393"/><rect x="19.76" y="4" width="2.5" height="2.02" fill="#8d8d8d"/><rect x="22.23" y="2" width="2.5" height="2.02" fill="#a2a2a2"/><rect x="22.23" y="4" width="2.5" height="2.02" fill="#b1b1b1"/><rect x="24.70" y="2" width="2.5" height="2.02" fill="#9a9a9a"/><rect x="24.70" y="4" width="2.5" height="2.02" fill="#646464"/><rect x="27.17" y="2" width="2.5" height="2.02" fill="#b6b6b6"/><rect x="27.17" y="4" width="2.5" height="2.02" fill="#b7b7b7"/><rect x="29.64" y="4" width="2.5" height="2.02" fill="#646464"/><rect x="34.58" y="2" width="2.5" height="2.02" fill="#919191"/><rect x="34.58" y="4" width="2.5" height="2.02" fill="#858585"/><rect x="37.05" y="2" width="2.5" height="2.02" fill="#ababab"/><rect x="37.05" y="4" width="2.5" height="2.02" fill="#797979"/><rect x="39.52" y="2" width="2.5" height="2.02" fill="#a2a2a2"/><rect x="39.52" y="4" width="2.5" height="2.02" fill="#808080"/><rect x="41.99" y="2" width="2.5" height="2.02" fill="#b5b5b5"/><rect x="41.99" y="4" width="2.5" height="2.02" fill="#717171"/><rect x="41.99" y="6" width="2.5" height="2.02" fill="#d8d8d8"/><rect x="44.46" y="4" width="2.5" height="2.02" fill="#8d8d8d"/><rect x="46.93" y="2" width="2.5" height="2.02" fill="#cccccc"/><rect x="46.93" y="4" width="2.5" height="2.02" fill="#868686"/><rect x="46.93" y="6" width="2.5" height="2.02" fill="#d2d2d2"/><rect x="49.40" y="2" width="2.5" height="2.02" fill="#959595"/><rect x="49.40" y="4" width="2.5" height="2.02" fill="#a0a0a0"/><rect x="49.40" y="6" width="2.5" height="2.02" fill="#cacaca"/><rect x="51.87" y="2" width="2.5" height="2.02" fill="#bbbbbb"/><rect x="51.87" y="4" width="2.5" height="2.02" fill="#7e7e7e"/><rect x="54.34" y="2" width="2.5" height="2.02" fill="#b9b9b9"/><rect x="54.34" y="4" width="2.5" height="2.02" fill="#909090"/><rect x="56.81" y="2" width="2.5" height="2.02" fill="#d6d6d6"/><rect x="59.28" y="2" width="2.5" height="2.02" fill="#9f9f9f"/><rect x="59.28" y="4" width="2.5" height="2.02" fill="#828282"/><rect x="59.28" y="6" width="2.5" height="2.02" fill="#cecece"/><rect x="61.75" y="2" width="2.5" height="2.02" fill="#afafaf"/><rect x="61.75" y="4" width="2.5" height="2.02" fill="#a4a4a4"/><rect x="61.75" y="6" width="2.5" height="2.02" fill="#dedede"/><rect x="64.22" y="2" width="2.5" height="2.02" fill="#b8b8b8"/><rect x="64.22" y="4" width="2.5" height="2.02" fill="#717171"/><rect x="64.22" y="6" width="2.5" height="2.02" fill="#c9c9c9"/><rect x="66.69" y="2" width="2.5" height="2.02" fill="#b6b6b6"/><rect x="66.69" y="4" width="2.5" height="2.02" fill="#8a8a8a"/><rect x="69.16" y="0" width="2.5" height="2.02" fill="#d8d8d8"/><rect x="69.16" y="2" width="2.5" height="2.02" fill="#a3a3a3"/><rect x="74.10" y="2" width="2.5" height="2.02" fill="#a6a6a6"/><rect x="74.10" y="4" width="2.5" height="2.02" fill="#a7a7a7"/><rect x="76.57" y="2" width="2.5" height="2.02" fill="#a1a1a1"/><rect x="76.57" y="4" width="2.5" height="2.02" fill="#6a6a6a"/><rect x="79.04" y="0" width="2.5" height="2.02" fill="#e5e5e5"/><rect x="79.04" y="2" width="2.5" height="2.02" fill="#c7c7c7"/><rect x="79.04" y="4" width="2.5" height="2.02" fill="#bababa"/><rect x="81.51" y="4" width="2.5" height="2.02" fill="#b8b8b8"/><rect x="83.98" y="0" width="2.5" height="2.02" fill="#eaeaea"/><rect x="83.98" y="2" width="2.5" height="2.02" fill="#a6a6a6"/><rect x="83.98" y="4" width="2.5" height="2.02" fill="#8d8d8d"/></g><g id="n6b"><rect x="0.00" y="0" width="2.5" height="2.02" fill="#d4d5ea"/><rect x="0.00" y="4" width="2.5" height="2.02" fill="#3c45bc"/><rect x="2.47" y="2" width="2.5" height="2.02" fill="#7d83d4"/><rect x="2.47" y="6" width="2.5" height="2.02" fill="#e3e4ed"/><rect x="4.94" y="2" width="2.5" height="2.02" fill="#8086d5"/><rect x="7.41" y="2" width="2.5" height="2.02" fill="#646bcc"/><rect x="7.41" y="4" width="2.5" height="2.02" fill="#797fd3"/><rect x="9.88" y="0" width="2.5" height="2.02" fill="#f4f3f0"/><rect x="9.88" y="2" width="2.5" height="2.02" fill="#878dd7"/><rect x="9.88" y="4" width="2.5" height="2.02" fill="#a0a4dd"/><rect x="12.35" y="2" width="2.5" height="2.02" fill="#7077d0"/><rect x="12.35" y="4" width="2.5" height="2.02" fill="#6b72ce"/><rect x="14.82" y="4" width="2.5" height="2.02" fill="#363fb8"/><rect x="17.29" y="0" width="2.5" height="2.02" fill="#d8d9ea"/><rect x="17.29" y="2" width="2.5" height="2.02" fill="#969adb"/><rect x="17.29" y="4" width="2.5" height="2.02" fill="#999ddc"/><rect x="19.76" y="2" width="2.5" height="2.02" fill="#5a62c9"/><rect x="19.76" y="4" width="2.5" height="2.02" fill="#545cc6"/><rect x="22.23" y="2" width="2.5" height="2.02" fill="#6e74cf"/><rect x="22.23" y="4" width="2.5" height="2.02" fill="#8388d6"/><rect x="24.70" y="2" width="2.5" height="2.02" fill="#636acc"/><rect x="24.70" y="4" width="2.5" height="2.02" fill="#313bb5"/><rect x="27.17" y="2" width="2.5" height="2.02" fill="#8b90d8"/><rect x="27.17" y="4" width="2.5" height="2.02" fill="#8c91d8"/><rect x="29.64" y="4" width="2.5" height="2.02" fill="#313bb5"/><rect x="34.58" y="2" width="2.5" height="2.02" fill="#5860c8"/><rect x="34.58" y="4" width="2.5" height="2.02" fill="#4b53c3"/><rect x="37.05" y="2" width="2.5" height="2.02" fill="#7a80d3"/><rect x="37.05" y="4" width="2.5" height="2.02" fill="#4049be"/><rect x="39.52" y="2" width="2.5" height="2.02" fill="#6e74cf"/><rect x="39.52" y="4" width="2.5" height="2.02" fill="#464fc1"/><rect x="41.99" y="2" width="2.5" height="2.02" fill="#898ed7"/><rect x="41.99" y="4" width="2.5" height="2.02" fill="#3943ba"/><rect x="41.99" y="6" width="2.5" height="2.02" fill="#c5c7e6"/><rect x="44.46" y="4" width="2.5" height="2.02" fill="#545cc6"/><rect x="46.93" y="2" width="2.5" height="2.02" fill="#afb2e1"/><rect x="46.93" y="4" width="2.5" height="2.02" fill="#4c54c3"/><rect x="46.93" y="6" width="2.5" height="2.02" fill="#babce4"/><rect x="49.40" y="2" width="2.5" height="2.02" fill="#5d64ca"/><rect x="49.40" y="4" width="2.5" height="2.02" fill="#6b72ce"/><rect x="49.40" y="6" width="2.5" height="2.02" fill="#abafe0"/><rect x="51.87" y="2" width="2.5" height="2.02" fill="#9297da"/><rect x="51.87" y="4" width="2.5" height="2.02" fill="#444dc0"/><rect x="54.34" y="2" width="2.5" height="2.02" fill="#8f94d9"/><rect x="54.34" y="4" width="2.5" height="2.02" fill="#575fc8"/><rect x="56.81" y="2" width="2.5" height="2.02" fill="#c1c3e5"/><rect x="59.28" y="2" width="2.5" height="2.02" fill="#6970ce"/><rect x="59.28" y="4" width="2.5" height="2.02" fill="#4851c2"/><rect x="59.28" y="6" width="2.5" height="2.02" fill="#b2b6e2"/><rect x="61.75" y="2" width="2.5" height="2.02" fill="#8086d5"/><rect x="61.75" y="4" width="2.5" height="2.02" fill="#7077d0"/><rect x="61.75" y="6" width="2.5" height="2.02" fill="#d0d2e9"/><rect x="64.22" y="2" width="2.5" height="2.02" fill="#8e93d9"/><rect x="64.22" y="4" width="2.5" height="2.02" fill="#3943ba"/><rect x="64.22" y="6" width="2.5" height="2.02" fill="#aaade0"/><rect x="66.69" y="2" width="2.5" height="2.02" fill="#8b90d8"/><rect x="66.69" y="4" width="2.5" height="2.02" fill="#5058c5"/><rect x="69.16" y="0" width="2.5" height="2.02" fill="#c5c7e6"/><rect x="69.16" y="2" width="2.5" height="2.02" fill="#6f75d0"/><rect x="74.10" y="2" width="2.5" height="2.02" fill="#7379d1"/><rect x="74.10" y="4" width="2.5" height="2.02" fill="#747bd1"/><rect x="76.57" y="2" width="2.5" height="2.02" fill="#6c73cf"/><rect x="76.57" y="4" width="2.5" height="2.02" fill="#353eb7"/><rect x="79.04" y="0" width="2.5" height="2.02" fill="#dddeec"/><rect x="79.04" y="2" width="2.5" height="2.02" fill="#a6aadf"/><rect x="79.04" y="4" width="2.5" height="2.02" fill="#9196d9"/><rect x="81.51" y="4" width="2.5" height="2.02" fill="#8e93d9"/><rect x="83.98" y="0" width="2.5" height="2.02" fill="#e7e8ee"/><rect x="83.98" y="2" width="2.5" height="2.02" fill="#7379d1"/><rect x="83.98" y="4" width="2.5" height="2.02" fill="#545cc6"/></g><g id="n7"><rect x="0.00" y="2" width="2.5" height="2.02" fill="#a8a8a8"/><rect x="0.00" y="4" width="2.5" height="2.02" fill="#676767"/><rect x="2.47" y="2" width="2.5" height="2.02" fill="#969696"/><rect x="2.47" y="4" width="2.5" height="2.02" fill="#929292"/><rect x="2.47" y="6" width="2.5" height="2.02" fill="#cccccc"/><rect x="4.94" y="4" width="2.5" height="2.02" fill="#969696"/><rect x="7.41" y="2" width="2.5" height="2.02" fill="#b7b7b7"/><rect x="7.41" y="4" width="2.5" height="2.02" fill="#c8c8c8"/><rect x="7.41" y="6" width="2.5" height="2.02" fill="#cecece"/><rect x="9.88" y="2" width="2.5" height="2.02" fill="#acacac"/><rect x="9.88" y="4" width="2.5" height="2.02" fill="#c4c4c4"/><rect x="9.88" y="6" width="2.5" height="2.02" fill="#dadada"/><rect x="12.35" y="0" width="2.5" height="2.02" fill="#eaeaea"/><rect x="12.35" y="2" width="2.5" height="2.02" fill="#dcdcdc"/><rect x="12.35" y="4" width="2.5" height="2.02" fill="#bfbfbf"/><rect x="14.82" y="2" width="2.5" height="2.02" fill="#a6a6a6"/><rect x="14.82" y="6" width="2.5" height="2.02" fill="#d7d7d7"/><rect x="17.29" y="2" width="2.5" height="2.02" fill="#cfcfcf"/><rect x="17.29" y="4" width="2.5" height="2.02" fill="#8c8c8c"/><rect x="19.76" y="2" width="2.5" height="2.02" fill="#a0a0a0"/><rect x="19.76" y="4" width="2.5" height="2.02" fill="#878787"/><rect x="22.23" y="2" width="2.5" height="2.02" fill="#b4b4b4"/><rect x="24.70" y="4" width="2.5" height="2.02" fill="#bcbcbc"/><rect x="27.17" y="2" width="2.5" height="2.02" fill="#949494"/><rect x="27.17" y="4" width="2.5" height="2.02" fill="#929292"/><rect x="27.17" y="6" width="2.5" height="2.02" fill="#d6d6d6"/><rect x="29.64" y="2" width="2.5" height="2.02" fill="#bcbcbc"/><rect x="29.64" y="4" width="2.5" height="2.02" fill="#aaaaaa"/><rect x="32.11" y="2" width="2.5" height="2.02" fill="#969696"/><rect x="32.11" y="6" width="2.5" height="2.02" fill="#dbdbdb"/><rect x="34.58" y="2" width="2.5" height="2.02" fill="#cdcdcd"/><rect x="34.58" y="4" width="2.5" height="2.02" fill="#777777"/><rect x="37.05" y="2" width="2.5" height="2.02" fill="#9a9a9a"/><rect x="37.05" y="4" width="2.5" height="2.02" fill="#adadad"/><rect x="39.52" y="2" width="2.5" height="2.02" fill="#9b9b9b"/><rect x="39.52" y="4" width="2.5" height="2.02" fill="#bbbbbb"/><rect x="39.52" y="6" width="2.5" height="2.02" fill="#dadada"/><rect x="41.99" y="4" width="2.5" height="2.02" fill="#6c6c6c"/><rect x="41.99" y="6" width="2.5" height="2.02" fill="#cbcbcb"/><rect x="46.93" y="2" width="2.5" height="2.02" fill="#999999"/><rect x="46.93" y="4" width="2.5" height="2.02" fill="#b2b2b2"/><rect x="46.93" y="6" width="2.5" height="2.02" fill="#dadada"/><rect x="49.40" y="4" width="2.5" height="2.02" fill="#929292"/><rect x="51.87" y="2" width="2.5" height="2.02" fill="#b7b7b7"/><rect x="54.34" y="2" width="2.5" height="2.02" fill="#b2b2b2"/><rect x="54.34" y="4" width="2.5" height="2.02" fill="#9c9c9c"/><rect x="56.81" y="2" width="2.5" height="2.02" fill="#bbbbbb"/><rect x="56.81" y="4" width="2.5" height="2.02" fill="#696969"/><rect x="59.28" y="2" width="2.5" height="2.02" fill="#909090"/><rect x="59.28" y="4" width="2.5" height="2.02" fill="#acacac"/></g><g id="n7b"><rect x="0.00" y="2" width="2.5" height="2.02" fill="#767cd2"/><rect x="0.00" y="4" width="2.5" height="2.02" fill="#333db6"/><rect x="2.47" y="2" width="2.5" height="2.02" fill="#5e66ca"/><rect x="2.47" y="4" width="2.5" height="2.02" fill="#5961c8"/><rect x="2.47" y="6" width="2.5" height="2.02" fill="#afb2e1"/><rect x="4.94" y="4" width="2.5" height="2.02" fill="#5e66ca"/><rect x="7.41" y="2" width="2.5" height="2.02" fill="#8c91d8"/><rect x="7.41" y="4" width="2.5" height="2.02" fill="#a8acdf"/><rect x="7.41" y="6" width="2.5" height="2.02" fill="#b2b6e2"/><rect x="9.88" y="2" width="2.5" height="2.02" fill="#7c81d3"/><rect x="9.88" y="4" width="2.5" height="2.02" fill="#a1a5de"/><rect x="9.88" y="6" width="2.5" height="2.02" fill="#c8cae7"/><rect x="12.35" y="0" width="2.5" height="2.02" fill="#e7e8ee"/><rect x="12.35" y="2" width="2.5" height="2.02" fill="#cccee8"/><rect x="12.35" y="4" width="2.5" height="2.02" fill="#999ddc"/><rect x="14.82" y="2" width="2.5" height="2.02" fill="#7379d1"/><rect x="14.82" y="6" width="2.5" height="2.02" fill="#c3c5e6"/><rect x="17.29" y="2" width="2.5" height="2.02" fill="#b4b7e2"/><rect x="17.29" y="4" width="2.5" height="2.02" fill="#525ac6"/><rect x="19.76" y="2" width="2.5" height="2.02" fill="#6b72ce"/><rect x="19.76" y="4" width="2.5" height="2.02" fill="#4d55c4"/><rect x="22.23" y="2" width="2.5" height="2.02" fill="#878dd7"/><rect x="24.70" y="4" width="2.5" height="2.02" fill="#9499da"/><rect x="27.17" y="2" width="2.5" height="2.02" fill="#5c63c9"/><rect x="27.17" y="4" width="2.5" height="2.02" fill="#5961c8"/><rect x="27.17" y="6" width="2.5" height="2.02" fill="#c1c3e5"/><rect x="29.64" y="2" width="2.5" height="2.02" fill="#9499da"/><rect x="29.64" y="4" width="2.5" height="2.02" fill="#797fd3"/><rect x="32.11" y="2" width="2.5" height="2.02" fill="#5e66ca"/><rect x="32.11" y="6" width="2.5" height="2.02" fill="#cacce7"/><rect x="34.58" y="2" width="2.5" height="2.02" fill="#b1b4e1"/><rect x="34.58" y="4" width="2.5" height="2.02" fill="#3e47bd"/><rect x="37.05" y="2" width="2.5" height="2.02" fill="#636acc"/><rect x="37.05" y="4" width="2.5" height="2.02" fill="#7d83d4"/><rect x="39.52" y="2" width="2.5" height="2.02" fill="#646bcc"/><rect x="39.52" y="4" width="2.5" height="2.02" fill="#9297da"/><rect x="39.52" y="6" width="2.5" height="2.02" fill="#c8cae7"/><rect x="41.99" y="4" width="2.5" height="2.02" fill="#363fb8"/><rect x="41.99" y="6" width="2.5" height="2.02" fill="#adb1e1"/><rect x="46.93" y="2" width="2.5" height="2.02" fill="#6269cb"/><rect x="46.93" y="4" width="2.5" height="2.02" fill="#848ad6"/><rect x="46.93" y="6" width="2.5" height="2.02" fill="#c8cae7"/><rect x="49.40" y="4" width="2.5" height="2.02" fill="#5961c8"/><rect x="51.87" y="2" width="2.5" height="2.02" fill="#8c91d8"/><rect x="54.34" y="2" width="2.5" height="2.02" fill="#848ad6"/><rect x="54.34" y="4" width="2.5" height="2.02" fill="#666dcd"/><rect x="56.81" y="2" width="2.5" height="2.02" fill="#9297da"/><rect x="56.81" y="4" width="2.5" height="2.02" fill="#343eb7"/><rect x="59.28" y="2" width="2.5" height="2.02" fill="#575fc8"/><rect x="59.28" y="4" width="2.5" height="2.02" fill="#7c81d3"/></g><g id="n8"><rect x="0.00" y="2" width="2.5" height="2.02" fill="#939393"/><rect x="0.00" y="4" width="2.5" height="2.02" fill="#acacac"/><rect x="0.00" y="6" width="2.5" height="2.02" fill="#ececec"/><rect x="2.47" y="2" width="2.5" height="2.02" fill="#dcdcdc"/><rect x="2.47" y="4" width="2.5" height="2.02" fill="#999999"/><rect x="2.47" y="6" width="2.5" height="2.02" fill="#d6d6d6"/><rect x="4.94" y="4" width="2.5" height="2.02" fill="#777777"/><rect x="7.41" y="2" width="2.5" height="2.02" fill="#a6a6a6"/><rect x="7.41" y="4" width="2.5" height="2.02" fill="#a8a8a8"/><rect x="7.41" y="6" width="2.5" height="2.02" fill="#e1e1e1"/><rect x="9.88" y="2" width="2.5" height="2.02" fill="#cacaca"/><rect x="9.88" y="4" width="2.5" height="2.02" fill="#808080"/><rect x="12.35" y="2" width="2.5" height="2.02" fill="#9f9f9f"/><rect x="12.35" y="4" width="2.5" height="2.02" fill="#7f7f7f"/><rect x="14.82" y="2" width="2.5" height="2.02" fill="#b1b1b1"/><rect x="14.82" y="4" width="2.5" height="2.02" fill="#686868"/><rect x="14.82" y="6" width="2.5" height="2.02" fill="#d8d8d8"/><rect x="19.76" y="2" width="2.5" height="2.02" fill="#bababa"/><rect x="19.76" y="4" width="2.5" height="2.02" fill="#838383"/><rect x="22.23" y="2" width="2.5" height="2.02" fill="#c9c9c9"/><rect x="22.23" y="4" width="2.5" height="2.02" fill="#686868"/><rect x="22.23" y="6" width="2.5" height="2.02" fill="#cdcdcd"/><rect x="24.70" y="2" width="2.5" height="2.02" fill="#9e9e9e"/><rect x="24.70" y="4" width="2.5" height="2.02" fill="#ababab"/><rect x="27.17" y="0" width="2.5" height="2.02" fill="#eeeeee"/><rect x="27.17" y="2" width="2.5" height="2.02" fill="#909090"/><rect x="27.17" y="4" width="2.5" height="2.02" fill="#676767"/><rect x="27.17" y="6" width="2.5" height="2.02" fill="#cacaca"/><rect x="29.64" y="2" width="2.5" height="2.02" fill="#989898"/><rect x="29.64" y="4" width="2.5" height="2.02" fill="#828282"/><rect x="32.11" y="2" width="2.5" height="2.02" fill="#c2c2c2"/><rect x="32.11" y="4" width="2.5" height="2.02" fill="#858585"/><rect x="34.58" y="2" width="2.5" height="2.02" fill="#b5b5b5"/><rect x="34.58" y="4" width="2.5" height="2.02" fill="#7c7c7c"/></g><g id="n8b"><rect x="0.00" y="2" width="2.5" height="2.02" fill="#5a62c9"/><rect x="0.00" y="4" width="2.5" height="2.02" fill="#7c81d3"/><rect x="0.00" y="6" width="2.5" height="2.02" fill="#ebecef"/><rect x="2.47" y="2" width="2.5" height="2.02" fill="#cccee8"/><rect x="2.47" y="4" width="2.5" height="2.02" fill="#6269cb"/><rect x="2.47" y="6" width="2.5" height="2.02" fill="#c1c3e5"/><rect x="4.94" y="4" width="2.5" height="2.02" fill="#3e47bd"/><rect x="7.41" y="2" width="2.5" height="2.02" fill="#7379d1"/><rect x="7.41" y="4" width="2.5" height="2.02" fill="#767cd2"/><rect x="7.41" y="6" width="2.5" height="2.02" fill="#d6d7ea"/><rect x="9.88" y="2" width="2.5" height="2.02" fill="#abafe0"/><rect x="9.88" y="4" width="2.5" height="2.02" fill="#464fc1"/><rect x="12.35" y="2" width="2.5" height="2.02" fill="#6970ce"/><rect x="12.35" y="4" width="2.5" height="2.02" fill="#454ec0"/><rect x="14.82" y="2" width="2.5" height="2.02" fill="#8388d6"/><rect x="14.82" y="4" width="2.5" height="2.02" fill="#333db7"/><rect x="14.82" y="6" width="2.5" height="2.02" fill="#c5c7e6"/><rect x="19.76" y="2" width="2.5" height="2.02" fill="#9196d9"/><rect x="19.76" y="4" width="2.5" height="2.02" fill="#4952c2"/><rect x="22.23" y="2" width="2.5" height="2.02" fill="#aaade0"/><rect x="22.23" y="4" width="2.5" height="2.02" fill="#333db7"/><rect x="22.23" y="6" width="2.5" height="2.02" fill="#b1b4e1"/><rect x="24.70" y="2" width="2.5" height="2.02" fill="#686fce"/><rect x="24.70" y="4" width="2.5" height="2.02" fill="#7a80d3"/><rect x="27.17" y="0" width="2.5" height="2.02" fill="#f0f0f0"/><rect x="27.17" y="2" width="2.5" height="2.02" fill="#575fc8"/><rect x="27.17" y="4" width="2.5" height="2.02" fill="#333db6"/><rect x="27.17" y="6" width="2.5" height="2.02" fill="#abafe0"/><rect x="29.64" y="2" width="2.5" height="2.02" fill="#6168cb"/><rect x="29.64" y="4" width="2.5" height="2.02" fill="#4851c2"/><rect x="32.11" y="2" width="2.5" height="2.02" fill="#9ea2dd"/><rect x="32.11" y="4" width="2.5" height="2.02" fill="#4b53c3"/><rect x="34.58" y="2" width="2.5" height="2.02" fill="#898ed7"/><rect x="34.58" y="4" width="2.5" height="2.02" fill="#424bbf"/></g></defs><rect x="241" y="76.50" width="121" height="12.39" fill="#f3f3f3"/><rect x="241" y="88.89" width="121" height="10.08" fill="#ffffff"/><rect x="241" y="98.97" width="121" height="10.08" fill="#f3f3f3"/><rect x="241" y="109.04" width="121" height="10.07" fill="#ffffff"/><rect x="241" y="119.11" width="121" height="10.08" fill="#f3f3f3"/><rect x="241" y="129.19" width="121" height="10.07" fill="#ffffff"/><rect x="241" y="139.26" width="121" height="10.08" fill="#f3f3f3"/><rect x="241" y="149.34" width="121" height="10.07" fill="#ffffff"/><rect x="241" y="159.41" width="121" height="10.08" fill="#f3f3f3"/><rect x="241" y="169.49" width="121" height="10.07" fill="#ffffff"/><rect x="241" y="179.56" width="121" height="10.07" fill="#f3f3f3"/><rect x="241" y="189.64" width="121" height="10.08" fill="#ffffff"/><rect x="241" y="199.72" width="121" height="10.07" fill="#f3f3f3"/><rect x="241" y="209.79" width="121" height="10.08" fill="#ffffff"/><rect x="241" y="219.87" width="121" height="10.07" fill="#f3f3f3"/><rect x="241" y="229.94" width="121" height="10.07" fill="#ffffff"/><rect x="241" y="240.01" width="121" height="10.08" fill="#f3f3f3"/><rect x="241" y="250.09" width="121" height="10.08" fill="#ffffff"/><rect x="241" y="260.17" width="121" height="10.07" fill="#f3f3f3"/><rect x="241" y="270.24" width="121" height="10.07" fill="#ffffff"/><rect x="241" y="280.31" width="121" height="10.07" fill="#f3f3f3"/><rect x="241" y="290.39" width="121" height="10.07" fill="#ffffff"/><rect x="241" y="300.46" width="121" height="10.08" fill="#f3f3f3"/><rect x="241" y="310.54" width="121" height="10.07" fill="#ffffff"/><rect x="241" y="320.62" width="121" height="10.07" fill="#f3f3f3"/><rect x="241" y="330.69" width="121" height="10.07" fill="#ffffff"/><rect x="241" y="340.76" width="121" height="10.07" fill="#f3f3f3"/><rect x="241" y="350.84" width="121" height="10.08" fill="#ffffff"/><rect x="241" y="360.92" width="121" height="10.07" fill="#f3f3f3"/><rect x="241" y="370.99" width="121" height="10.07" fill="#ffffff"/><rect x="241" y="381.06" width="121" height="10.07" fill="#f3f3f3"/><rect x="241" y="391.14" width="121" height="10.07" fill="#ffffff"/><rect x="241" y="401.21" width="121" height="10.08" fill="#f3f3f3"/><rect x="241" y="411.29" width="121" height="10.07" fill="#ffffff"/><rect x="241" y="421.37" width="121" height="10.07" fill="#f3f3f3"/><rect x="241" y="431.44" width="121" height="10.07" fill="#ffffff"/><rect x="241" y="441.51" width="121" height="10.07" fill="#f3f3f3"/><rect x="241" y="451.59" width="121" height="10.08" fill="#ffffff"/><rect x="241" y="461.67" width="121" height="10.07" fill="#f3f3f3"/><rect x="241" y="471.74" width="121" height="10.07" fill="#ffffff"/><rect x="241" y="481.81" width="121" height="10.07" fill="#f3f3f3"/><use href="#n1" x="241" y="79.3"/><use href="#n2" x="241" y="90.1"/><use href="#n3" x="241" y="100.2"/><use href="#n3" x="241" y="110.2"/><use href="#n3" x="241" y="120.3"/><use href="#n3" x="241" y="130.4"/><use href="#n3" x="241" y="140.5"/><use href="#n3" x="241" y="150.5"/><use href="#n3" x="241" y="160.6"/><use href="#n3" x="241" y="170.7"/><use href="#n3" x="241" y="180.8"/><use href="#n3" x="241" y="190.8"/><use href="#n3" x="241" y="200.9"/><use href="#n3" x="241" y="211.0"/><use href="#n3" x="241" y="221.1"/><use href="#n3" x="241" y="231.1"/><use href="#n3" x="241" y="241.2"/><use href="#n3" x="241" y="251.3"/><use href="#n3" x="241" y="261.4"/><use href="#n3" x="241" y="271.4"/><use href="#n3" x="241" y="281.5"/><use href="#n3" x="241" y="291.6"/><use href="#n3" x="241" y="301.7"/><use href="#n3b" x="241" y="311.7"/><use href="#n3b" x="241" y="321.8"/><use href="#n4" x="241" y="331.9"/><use href="#n5" x="241" y="342.0"/><use href="#n5b" x="241" y="352.0"/><use href="#n6" x="241" y="362.1"/><use href="#n6" x="241" y="372.2"/><use href="#n6" x="241" y="382.3"/><use href="#n7" x="241" y="392.3"/><use href="#n7" x="241" y="402.4"/><use href="#n7" x="241" y="412.5"/><use href="#n7" x="241" y="422.6"/><use href="#n8" x="241" y="432.6"/><use href="#n8" x="241" y="442.7"/><use href="#n8" x="241" y="452.8"/><use href="#n8" x="241" y="462.9"/><use href="#n8" x="241" y="472.9"/><use href="#n8" x="241" y="483.0"/></svg>
<div class="ab" style="left:211.5px;top:307.8px;width:23.5px;height:2px;background:#00e600;"></div>
<div class="ab" style="left:362px;top:307.8px;width:361.5px;height:2px;background:#00e600;"></div>
<div class="ab" style="left:235px;top:311.5px;width:127px;height:2px;background:#00e600;"></div>
<div class="ab" style="left:211.5px;top:329.5px;width:23.5px;height:2px;background:#00e600;"></div>
<div class="ab" style="left:362px;top:329.5px;width:361.5px;height:2px;background:#00e600;"></div>
<div class="ab" style="left:235px;top:332.5px;width:127px;height:2px;background:#00e600;"></div>
<div class="ab" style="left:211.5px;top:308.5px;width:2px;height:23px;background:#00e600;"></div>
<div class="ab" style="left:721.5px;top:308.5px;width:2px;height:23px;background:#00e600;"></div>
<div class="ab" style="left:214.4px;top:347.2px;width:20.6px;height:2px;background:#00e600;"></div>
<div class="ab" style="left:362px;top:347.2px;width:365px;height:2px;background:#00e600;"></div>
<div class="ab" style="left:235px;top:349.5px;width:127px;height:2px;background:#00e600;"></div>
<div class="ab" style="left:214.4px;top:359px;width:20.6px;height:2px;background:#00e600;"></div>
<div class="ab" style="left:362px;top:359px;width:365px;height:2px;background:#00e600;"></div>
<div class="ab" style="left:235px;top:361px;width:127px;height:2px;background:#00e600;"></div>
<div class="ab" style="left:214.4px;top:347.2px;width:2px;height:13.8px;background:#00e600;"></div>
<div class="ab" style="left:725.2px;top:347.2px;width:2px;height:13.8px;background:#00e600;"></div>
</div>
<div class="ab" style="left:0;top:514px;width:2px;height:4px;background:#3a78c0"></div>
</body></html>
